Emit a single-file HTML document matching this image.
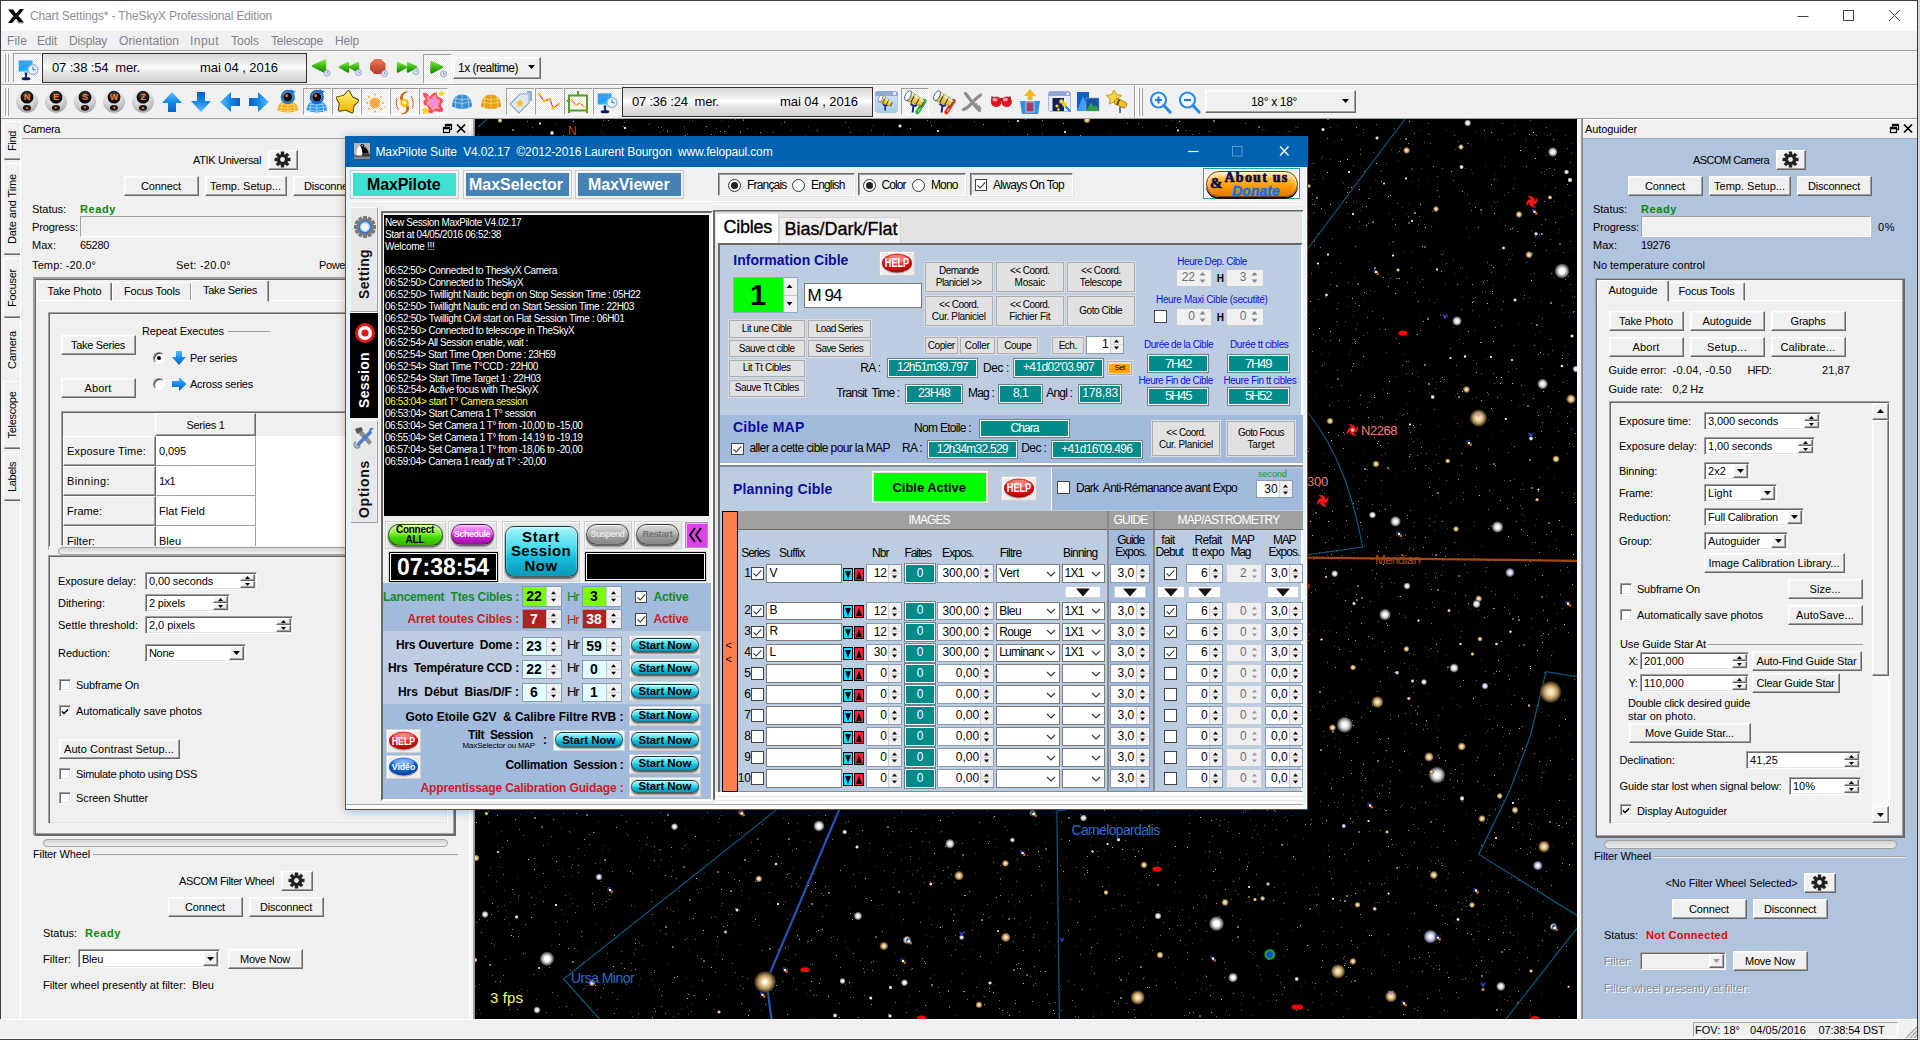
<!DOCTYPE html><html><head><meta charset="utf-8"><title>TheSkyX</title><style>
html,body{margin:0;padding:0}
body{width:1920px;height:1040px;overflow:hidden;position:relative;background:#f0f0f0;font-family:"Liberation Sans",sans-serif;font-size:11px;color:#000}
div,span.t,svg.a{position:absolute;box-sizing:border-box}
span.t{white-space:nowrap}
.btn{background:#f0f0f0;border:1px solid;border-color:#fff #696969 #696969 #fff;box-shadow:inset -1px -1px 0 #a0a0a0,inset 1px 1px 0 #f7f7f7}
.sunk{background:#fff;border:1px solid;border-color:#a0a0a0 #fff #fff #a0a0a0;box-shadow:inset 1px 1px 0 #696969,inset -1px -1px 0 #e3e3e3}
.chk{background:#fff;border:1px solid;border-color:#a0a0a0 #fff #fff #a0a0a0;box-shadow:inset 1px 1px 0 #696969,inset -1px -1px 0 #e3e3e3}
.tbchk{background-color:#f8f8f8;background-image:repeating-conic-gradient(#fff 0 25%,#e8e8e8 0 50%);background-size:2px 2px;border:1px solid;border-color:#a0a0a0 #fff #fff #a0a0a0}
.dt{border:1px solid #303030;background:linear-gradient(#dadada 0%,#e8e8e8 25%,#ffffff 47%,#f2f2f2 56%,#e2e2e2 70%,#d8d8d8 88%,#cecece 100%)}
.grp{border:1px solid;border-color:#a0a0a0 #fff #fff #a0a0a0;box-shadow:inset 1px 1px 0 #696969,inset -1px -1px 0 #e3e3e3}
.fl{background:#fff;border:1px solid #7a7a7a}
.tl{background:#008b8b;border:1px solid #fff;box-shadow:0 0 0 1px #6e7f8f;color:#fff}
.mb{background:#e1e1e1;border:1px solid #adadad;box-shadow:0 0 0 1px #d8dde6}
</style></head><body>
<div style="left:0px;top:0px;width:1920px;height:31px;background:#fff"></div>
<svg class="a" style="left:7px;top:8px" width="18" height="16" viewBox="0 0 18 16"><path d="M1 1.5 L6 1.5 L9 5.5 L13 1 L17 1 L11.5 8 L17 14.5 L12 14.5 L9 10.5 L5 15 L1 15 L6.5 8 Z" fill="#000"/><path d="M9 13 L17 15.5 L12 15.5Z" fill="#89a"/></svg>
<span class="t" style="left:30px;top:8.5px;font-size:12px;line-height:15px;color:#8e8e98;letter-spacing:-0.157px;">Chart Settings* - TheSkyX Professional Edition</span>
<svg class="a" style="left:1790px;top:4px" width="120" height="24" viewBox="0 0 120 24"><g stroke="#444" stroke-width="1" fill="none"><path d="M7.5 12.5 H18.5"/><rect x="53.5" y="6.5" width="10" height="10"/><path d="M99 6 L110 17 M110 6 L99 17"/></g></svg>
<div style="left:0px;top:31px;width:1920px;height:20px;background:#f0f0f0"></div>
<span class="t" style="left:7px;top:33.5px;font-size:12px;line-height:15px;color:#80808c;letter-spacing:0.166px;">File</span>
<span class="t" style="left:37px;top:33.5px;font-size:12px;line-height:15px;color:#80808c;letter-spacing:-0.169px;">Edit</span>
<span class="t" style="left:69px;top:33.5px;font-size:12px;line-height:15px;color:#80808c;letter-spacing:-0.192px;">Display</span>
<span class="t" style="left:119px;top:33.5px;font-size:12px;line-height:15px;color:#80808c;letter-spacing:0.118px;">Orientation</span>
<span class="t" style="left:190px;top:33.5px;font-size:12px;line-height:15px;color:#80808c;letter-spacing:0.462px;">Input</span>
<span class="t" style="left:231px;top:33.5px;font-size:12px;line-height:15px;color:#80808c;letter-spacing:-0.003px;">Tools</span>
<span class="t" style="left:271px;top:33.5px;font-size:12px;line-height:15px;color:#80808c;letter-spacing:-0.226px;">Telescope</span>
<span class="t" style="left:335px;top:33.5px;font-size:12px;line-height:15px;color:#80808c;letter-spacing:-0.170px;">Help</span>
<div style="left:0px;top:50px;width:1920px;height:1px;background:#a0a0a0"></div>
<div style="left:0px;top:51px;width:1920px;height:1px;background:#fff"></div>
<div style="left:0px;top:84px;width:1920px;height:1px;background:#a0a0a0"></div>
<div style="left:0px;top:85px;width:1920px;height:1px;background:#fff"></div>
<div style="left:0px;top:118px;width:1920px;height:1px;background:#a0a0a0"></div>
<div style="left:4px;top:54px;width:2px;height:28px;border-left:1px solid #fff;border-right:1px solid #a0a0a0"></div>
<div style="left:7px;top:54px;width:2px;height:28px;border-left:1px solid #fff;border-right:1px solid #a0a0a0"></div>
<div style="left:4px;top:88px;width:2px;height:28px;border-left:1px solid #fff;border-right:1px solid #a0a0a0"></div>
<div style="left:7px;top:88px;width:2px;height:28px;border-left:1px solid #fff;border-right:1px solid #a0a0a0"></div>
<svg width="0" height="0" style="position:absolute"><defs>
<linearGradient id="gG" x1="0" y1="0" x2="0" y2="1"><stop offset="0" stop-color="#7be03a"/><stop offset=".5" stop-color="#3cb814"/><stop offset="1" stop-color="#1f8a08"/></linearGradient>
<linearGradient id="gB" x1="0" y1="0" x2="0" y2="1"><stop offset="0" stop-color="#5cc0ff"/><stop offset=".5" stop-color="#1689e6"/><stop offset="1" stop-color="#0a5fc0"/></linearGradient>
<linearGradient id="gR" x1="0" y1="0" x2="0" y2="1"><stop offset="0" stop-color="#e8795a"/><stop offset="1" stop-color="#b83a20"/></linearGradient>
<linearGradient id="gY" x1="0" y1="0" x2="0" y2="1"><stop offset="0" stop-color="#fff06a"/><stop offset="1" stop-color="#f0b400"/></linearGradient>
<radialGradient id="gBall" cx=".5" cy=".35" r=".7"><stop offset="0" stop-color="#555"/><stop offset=".55" stop-color="#111"/><stop offset="1" stop-color="#000"/></radialGradient>
<radialGradient id="gSil" cx=".45" cy=".25" r=".8"><stop offset="0" stop-color="#fff"/><stop offset=".5" stop-color="#dadada"/><stop offset=".85" stop-color="#b4b4b4"/><stop offset="1" stop-color="#909090"/></radialGradient>
<linearGradient id="gMon" x1="0" y1="0" x2=".6" y2="1"><stop offset="0" stop-color="#2a86ea"/><stop offset=".55" stop-color="#1f9af0"/><stop offset="1" stop-color="#22d4ff"/></linearGradient>
<radialGradient id="gHelp" cx=".5" cy=".3" r=".8"><stop offset="0" stop-color="#ff6a5a"/><stop offset=".6" stop-color="#d01010"/><stop offset="1" stop-color="#8a0000"/></radialGradient>
<radialGradient id="gVid" cx=".5" cy=".3" r=".8"><stop offset="0" stop-color="#5aa8ff"/><stop offset=".6" stop-color="#1058c0"/><stop offset="1" stop-color="#002a80"/></radialGradient>
<linearGradient id="gSN" x1="0" y1="0" x2="0" y2="1"><stop offset="0" stop-color="#9af4ff"/><stop offset=".45" stop-color="#2fd2e6"/><stop offset="1" stop-color="#0aa0c0"/></linearGradient>
<linearGradient id="gGr" x1="0" y1="0" x2="0" y2="1"><stop offset="0" stop-color="#d8ff9a"/><stop offset=".5" stop-color="#6cf020"/><stop offset="1" stop-color="#2fb800"/></linearGradient>
<linearGradient id="gMg" x1="0" y1="0" x2="0" y2="1"><stop offset="0" stop-color="#ff9aff"/><stop offset=".5" stop-color="#e040e0"/><stop offset="1" stop-color="#a010a8"/></linearGradient>
<linearGradient id="gGy" x1="0" y1="0" x2="0" y2="1"><stop offset="0" stop-color="#d8d8d8"/><stop offset=".5" stop-color="#a8a8a8"/><stop offset="1" stop-color="#888"/></linearGradient>
<linearGradient id="gOr" x1="0" y1="0" x2="0" y2="1"><stop offset="0" stop-color="#ffd060"/><stop offset=".5" stop-color="#f8a010"/><stop offset="1" stop-color="#e07800"/></linearGradient>
<radialGradient id="st1"><stop offset="0" stop-color="#fff"/><stop offset=".3" stop-color="#f2f2f2"/><stop offset=".6" stop-color="#b4b4b4"/><stop offset=".85" stop-color="#5a5a5a" stop-opacity=".85"/><stop offset="1" stop-color="#202020" stop-opacity="0"/></radialGradient>
<radialGradient id="st2"><stop offset="0" stop-color="#fff2d4"/><stop offset=".3" stop-color="#ecd4a4"/><stop offset=".6" stop-color="#b4925c"/><stop offset=".85" stop-color="#5a4428" stop-opacity=".85"/><stop offset="1" stop-color="#201408" stop-opacity="0"/></radialGradient>
<radialGradient id="st3"><stop offset="0" stop-color="#fff"/><stop offset=".3" stop-color="#e4e8fc"/><stop offset=".6" stop-color="#a0a6c4"/><stop offset=".85" stop-color="#4c5068" stop-opacity=".85"/><stop offset="1" stop-color="#181c28" stop-opacity="0"/></radialGradient>
</defs></svg>
<div class="tbchk" style="left:13px;top:53px;width:29px;height:30px;"></div>
<svg class="a" style="left:15px;top:55px" width="28" height="28" viewBox="0 0 28 28"><rect x="3.2" y="5" width="14.8" height="12" rx="1" fill="url(#gMon)" stroke="#e4f0fb" stroke-width="1"/><path d="M3.8 5.6 H17.4 V9 Q10 9.5 3.8 12.5Z" fill="#fff" opacity=".12"/><path d="M9.6 17.5 L12.4 17.5 L11.9 22.5 L10.1 22.5Z" fill="#16307a"/><ellipse cx="11" cy="23.7" rx="4.4" ry="1.6" fill="#0a1860"/><circle cx="18" cy="14.6" r="4.9" fill="#eaf3fd" stroke="#9ab4d4" stroke-width="1.3"/><path d="M18 11.4 V14.8 H20.8" stroke="#4a7ac0" stroke-width="1.1" fill="none"/></svg>
<div class="dt" style="left:42px;top:53px;width:265px;height:30px;"></div>
<span class="t" style="left:52px;top:60.0px;font-size:13px;line-height:16px;letter-spacing:-0.146px;white-space:pre;">07 :38 :54  mer.</span>
<span class="t" style="left:200px;top:60.0px;font-size:13px;line-height:16px;letter-spacing:-0.060px;">mai 04 , 2016</span>
<div class="tbchk" style="left:423px;top:54px;width:29px;height:30px;"></div>
<svg class="a" style="left:308px;top:52px" width="150" height="32" viewBox="308 52 150 32"><path d="M313 66 L325 60.5 L325 72Z" fill="url(#gG)" stroke="url(#gG)" stroke-width="2.4" stroke-linejoin="round"/><circle cx="327" cy="73" r="3" fill="#dfe9f5" stroke="#8aa0c0" stroke-width=".9"/><path d="M327 71.2 V73.3 H328.6" stroke="#6080b0" stroke-width=".7" fill="none"/><path d="M340 67 L348 63 L348 71.5Z" fill="url(#gG)" stroke="url(#gG)" stroke-width="2.4" stroke-linejoin="round"/><path d="M350 67 L358 63 L358 71.5Z" fill="url(#gG)" stroke="url(#gG)" stroke-width="2.4" stroke-linejoin="round"/><circle cx="358.5" cy="72.5" r="3" fill="#dfe9f5" stroke="#8aa0c0" stroke-width=".9"/><path d="M358.5 70.7 V72.8 H360.1" stroke="#6080b0" stroke-width=".7" fill="none"/><path d="M374.5 59 H381 L385.5 63.5 V69.5 L381 74 H374.5 L370 69.5 V63.5Z" fill="url(#gR)"/><circle cx="384.5" cy="73.5" r="3" fill="#dfe9f5" stroke="#8aa0c0" stroke-width=".9"/><path d="M384.5 71.7 V73.8 H386.1" stroke="#6080b0" stroke-width=".7" fill="none"/><path d="M398 63 L398 71.5 L406 67Z" fill="url(#gG)" stroke="url(#gG)" stroke-width="2.4" stroke-linejoin="round"/><path d="M408 63 L408 71.5 L416 67Z" fill="url(#gG)" stroke="url(#gG)" stroke-width="2.4" stroke-linejoin="round"/><circle cx="416" cy="71.5" r="3" fill="#dfe9f5" stroke="#8aa0c0" stroke-width=".9"/><path d="M416 69.7 V71.8 H417.6" stroke="#6080b0" stroke-width=".7" fill="none"/><path d="M431.5 62 L431.5 72.5 L442 67Z" fill="url(#gG)" stroke="url(#gG)" stroke-width="2.4" stroke-linejoin="round"/><circle cx="443.5" cy="74" r="3" fill="#dfe9f5" stroke="#8aa0c0" stroke-width=".9"/><path d="M443.5 72.2 V74.3 H445.1" stroke="#6080b0" stroke-width=".7" fill="none"/></svg>
<div class="btn" style="left:453px;top:57px;width:88px;height:22px;"></div>
<span class="t" style="left:458px;top:60.5px;font-size:12px;line-height:15px;letter-spacing:-0.514px;">1x (realtime)</span>
<svg class="a" style="left:528px;top:65px" width="8" height="5" viewBox="0 0 8 5"><path d="M0 0 H7 L3.5 4Z" fill="#000"/></svg>
<svg class="a" style="left:14px;top:88px" width="26" height="28" viewBox="0 0 26 28"><circle cx="13" cy="13.8" r="10.9" fill="url(#gSil)"/><circle cx="13" cy="9.2" r="6.4" fill="url(#gBall)"/><ellipse cx="13" cy="19.8" rx="4.1" ry="2.9" fill="#141414"/><path d="M11.3 21 L13 18.3 L14.7 21Z" fill="#ff6a10" transform="rotate(0 13 19.8)"/><text x="13" y="12.4" font-family="Liberation Sans" font-weight="bold" font-size="9" fill="#ff7a1a" text-anchor="middle">N</text></svg>
<svg class="a" style="left:43px;top:88px" width="26" height="28" viewBox="0 0 26 28"><circle cx="13" cy="13.8" r="10.9" fill="url(#gSil)"/><circle cx="13" cy="9.2" r="6.4" fill="url(#gBall)"/><ellipse cx="13" cy="19.8" rx="4.1" ry="2.9" fill="#141414"/><path d="M11.3 21 L13 18.3 L14.7 21Z" fill="#ff6a10" transform="rotate(90 13 19.8)"/><text x="13" y="12.4" font-family="Liberation Sans" font-weight="bold" font-size="9" fill="#ff7a1a" text-anchor="middle">E</text></svg>
<svg class="a" style="left:72px;top:88px" width="26" height="28" viewBox="0 0 26 28"><circle cx="13" cy="13.8" r="10.9" fill="url(#gSil)"/><circle cx="13" cy="9.2" r="6.4" fill="url(#gBall)"/><ellipse cx="13" cy="19.8" rx="4.1" ry="2.9" fill="#141414"/><path d="M11.3 21 L13 18.3 L14.7 21Z" fill="#ff6a10" transform="rotate(180 13 19.8)"/><text x="13" y="12.4" font-family="Liberation Sans" font-weight="bold" font-size="9" fill="#ff7a1a" text-anchor="middle">S</text></svg>
<svg class="a" style="left:101px;top:88px" width="26" height="28" viewBox="0 0 26 28"><circle cx="13" cy="13.8" r="10.9" fill="url(#gSil)"/><circle cx="13" cy="9.2" r="6.4" fill="url(#gBall)"/><ellipse cx="13" cy="19.8" rx="4.1" ry="2.9" fill="#141414"/><path d="M11.3 21 L13 18.3 L14.7 21Z" fill="#ff6a10" transform="rotate(270 13 19.8)"/><text x="13" y="12.4" font-family="Liberation Sans" font-weight="bold" font-size="9" fill="#ff7a1a" text-anchor="middle">W</text></svg>
<svg class="a" style="left:130px;top:88px" width="26" height="28" viewBox="0 0 26 28"><circle cx="13" cy="13.8" r="10.9" fill="url(#gSil)"/><circle cx="13" cy="9.2" r="6.4" fill="url(#gBall)"/><ellipse cx="13" cy="19.8" rx="4.1" ry="2.9" fill="#141414"/><path d="M11.3 21 L13 18.3 L14.7 21Z" fill="#ff6a10" transform="rotate(0 13 19.8)"/><text x="13" y="12.4" font-family="Liberation Sans" font-weight="bold" font-size="9" fill="#ff7a1a" text-anchor="middle">Z</text></svg>
<svg class="a" style="left:160px;top:90px" width="24" height="24" viewBox="0 0 24 24"><g transform="rotate(0 12 12)"><path d="M12 2 L22 13 H16 V22 H8 V13 H2Z" fill="url(#gB)"/></g></svg>
<svg class="a" style="left:189px;top:90px" width="24" height="24" viewBox="0 0 24 24"><g transform="rotate(180 12 12)"><path d="M12 2 L22 13 H16 V22 H8 V13 H2Z" fill="url(#gB)"/></g></svg>
<svg class="a" style="left:218px;top:90px" width="24" height="24" viewBox="0 0 24 24"><g transform="rotate(270 12 12)"><path d="M12 2 L22 13 H16 V22 H8 V13 H2Z" fill="url(#gB)"/></g></svg>
<svg class="a" style="left:247px;top:90px" width="24" height="24" viewBox="0 0 24 24"><g transform="rotate(90 12 12)"><path d="M12 2 L22 13 H16 V22 H8 V13 H2Z" fill="url(#gB)"/></g></svg>
<svg class="a" style="left:275px;top:88px" width="26" height="28" viewBox="0 0 26 28"><path d="M2.5 22.5 C2.5 16 7 12.6 12.8 12.6 C18.6 12.6 23 16 23 22.5 Q12.8 26.5 2.5 22.5Z" fill="#f2a818"/><path d="M7.5 14.5 Q5.5 19 6 24 M12.8 13 V25 M18 14.5 Q20 19 19.5 24 M3 19 Q12.8 21.5 22.5 19 M4.5 16 Q12.8 18 21 16 M3 22 Q12.8 24.5 22.5 22" stroke="#ffe27a" stroke-width=".8" fill="none"/><circle cx="12.8" cy="9" r="6" fill="none" stroke="#1a78d0" stroke-width="2.3"/><path d="M15.5 1.2 L20.8 3.8 L15.8 6.2Z" fill="#1a78d0"/><circle cx="12.8" cy="9" r="4.6" fill="#0c0c10"/><circle cx="11.6" cy="7.6" r="1.6" fill="#ff7a1a" opacity=".85"/></svg>
<div class="tbchk" style="left:303px;top:88px;width:29px;height:27px;"></div>
<svg class="a" style="left:304px;top:88px" width="26" height="28" viewBox="0 0 26 28"><path d="M2.5 22.5 C2.5 16 7 12.6 12.8 12.6 C18.6 12.6 23 16 23 22.5 Q12.8 26.5 2.5 22.5Z" fill="#2f93f0"/><path d="M7.5 14.5 Q5.5 19 6 24 M12.8 13 V25 M18 14.5 Q20 19 19.5 24 M3 19 Q12.8 21.5 22.5 19 M4.5 16 Q12.8 18 21 16 M3 22 Q12.8 24.5 22.5 22" stroke="#a4dcff" stroke-width=".8" fill="none"/><circle cx="12.8" cy="9" r="6" fill="none" stroke="#1a6ac8" stroke-width="2.3"/><path d="M15.5 1.2 L20.8 3.8 L15.8 6.2Z" fill="#1a6ac8"/><circle cx="12.8" cy="9" r="4.6" fill="#0c0c10"/><circle cx="11.6" cy="7.6" r="1.6" fill="#ff7a1a" opacity=".85"/></svg>
<div class="tbchk" style="left:332px;top:88px;width:29px;height:27px;"></div>
<svg class="a" style="left:334px;top:89px" width="26" height="26" viewBox="0 0 26 26"><path d="M14.5 2.9 L17.6 8.7 L23.4 11.6 L18.9 16.3 L18.0 22.8 L12.1 19.9 L5.6 21.0 L6.5 14.5 L3.5 8.8 L9.9 7.6Z" fill="url(#gY)" stroke="#4a3808" stroke-width="3.4" stroke-linejoin="round"/><path d="M14.5 2.9 L17.6 8.7 L23.4 11.6 L18.9 16.3 L18.0 22.8 L12.1 19.9 L5.6 21.0 L6.5 14.5 L3.5 8.8 L9.9 7.6Z" fill="url(#gY)" stroke="url(#gY)" stroke-width="1.6" stroke-linejoin="round"/></svg>
<div class="tbchk" style="left:361px;top:88px;width:29px;height:27px;"></div>
<svg class="a" style="left:362px;top:89px" width="26" height="26" viewBox="0 0 26 26"><circle cx="13" cy="14" r="5.6" fill="#f5a030" opacity=".75"/><circle cx="13" cy="14" r="4" fill="#f09828" opacity=".5"/><g fill="#f7a848"><circle cx="5" cy="14" r="1"/><circle cx="21" cy="14" r="1"/><circle cx="13" cy="5.5" r="1"/><circle cx="13" cy="22.5" r="1"/><circle cx="7" cy="8" r="1.1"/><circle cx="19" cy="8" r="1"/><circle cx="7" cy="20" r="1"/><circle cx="19" cy="20" r="1.1"/><circle cx="3.5" cy="10" r=".7"/><circle cx="22.5" cy="18" r=".7"/></g></svg>
<div class="tbchk" style="left:390px;top:88px;width:29px;height:27px;"></div>
<svg class="a" style="left:391px;top:89px" width="26" height="26" viewBox="0 0 26 26"><path d="M13 14 C9 13 7.5 8 11 4.5 C13 2.6 16 2.2 18 3 C14 3.4 11.6 5.8 12 9 C12.3 11.5 14 12.6 15.8 12.4 Q14.8 14.2 13 14Z" fill="#d8680e"/><g transform="rotate(180 13.6 14)"><path d="M13 14 C9 13 7.5 8 11 4.5 C13 2.6 16 2.2 18 3 C14 3.4 11.6 5.8 12 9 C12.3 11.5 14 12.6 15.8 12.4 Q14.8 14.2 13 14Z" fill="#d8680e"/></g><path d="M6 9 Q4 15 7.5 21 M21.5 19 Q23.5 13 20 7" stroke="#c05a0a" stroke-width="1.1" fill="none" opacity=".8"/><circle cx="13.6" cy="14" r="4.2" fill="#ffb418"/><circle cx="13.2" cy="13.4" r="2.2" fill="#fff0a0"/></svg>
<div class="tbchk" style="left:419px;top:88px;width:29px;height:27px;"></div>
<svg class="a" style="left:420px;top:89px" width="26" height="26" viewBox="0 0 26 26"><path d="M3 4 Q7 3 10 8 Q12 3 17 3.5 Q16 7.5 19.5 8.5 Q25 10 22 14 Q19.5 16 23 19.5 Q24 23.5 19 23 Q14 20.5 12.5 24 Q7 25.5 8.5 19.5 Q8 16.5 4.5 16 Q1.5 12 6 10 Q3 8 3 4Z" fill="#ff4a5e"/><path d="M6 6 Q9 7 10.5 10.5 Q13 6 16 5.5 Q15.5 9.5 19 10.5 Q21.5 12 19 14.5 Q17 17 20 20 Q15 19 12.5 21.5 Q10.5 17.5 7 15.5 Q5 12.5 8.5 11 Q6.5 9 6 6Z" fill="#ff9aa8"/><circle cx="13.6" cy="13.4" r="3.6" fill="#f88af0"/><path d="M21.5 1 l1.1 2.2 2.4.3 -1.8 1.7 .4 2.4 -2.1-1.1 -2.1 1.1 .4-2.4 -1.8-1.7 2.4-.3Z M5.5 17.5 l1.3 2.6 2.8.4 -2 2 .5 2.8 -2.6-1.3 -2.6 1.3 .5-2.8 -2-2 2.8-.4Z" fill="#ffd21e"/></svg>
<svg class="a" style="left:450px;top:91px" width="24" height="22" viewBox="0 0 24 22"><path d="M2 15.5 C2 8 6 3.5 12 3.5 C18 3.5 22 8 22 15.5 Q12 20.5 2 15.5Z" fill="#3f8ed0"/><path d="M12 3 V19 M6.5 5 Q4.5 11 5.5 17.5 M17.5 5 Q19.5 11 18.5 17.5 M2.5 11 Q12 14 21.5 11 M3.5 7.5 Q12 10 20.5 7.5" stroke="#a8d8ff" stroke-width=".7" fill="none"/></svg>
<svg class="a" style="left:479px;top:91px" width="24" height="22" viewBox="0 0 24 22"><path d="M2 15.5 C2 8 6 3.5 12 3.5 C18 3.5 22 8 22 15.5 Q12 20.5 2 15.5Z" fill="#e8a018"/><path d="M12 3 V19 M6.5 5 Q4.5 11 5.5 17.5 M17.5 5 Q19.5 11 18.5 17.5 M2.5 11 Q12 14 21.5 11 M3.5 7.5 Q12 10 20.5 7.5" stroke="#ffe080" stroke-width=".7" fill="none"/></svg>
<div class="tbchk" style="left:506px;top:88px;width:29px;height:27px;"></div>
<svg class="a" style="left:507px;top:89px" width="26" height="26" viewBox="0 0 26 26"><path d="M3 15 L13 5 H22 V14 L12 24Z" fill="#dfe8f0" stroke="#8ea8c0" stroke-width="1.2"/><path d="M20 3 H24 V12" stroke="#5a90d0" stroke-width="1.4" fill="none"/><path d="M13 10 l1.3 2.6 2.9.4 -2.1 2 .5 2.9 -2.6-1.4 -2.6 1.4 .5-2.9 -2.1-2 2.9-.4Z" fill="#f8c020"/></svg>
<div class="tbchk" style="left:535px;top:88px;width:29px;height:27px;"></div>
<svg class="a" style="left:536px;top:89px" width="26" height="26" viewBox="0 0 26 26"><path d="M3 5 L8 12 L14 10 L17 19 L23 15" stroke="#e83030" stroke-width="1.1" fill="none"/><g fill="#f8c820"><circle cx="3" cy="5" r="1.6"/><circle cx="8" cy="12" r="1.8"/><circle cx="14" cy="10" r="1.6"/><circle cx="17" cy="19" r="1.8"/><circle cx="23" cy="15" r="1.6"/></g></svg>
<div class="tbchk" style="left:564px;top:88px;width:29px;height:27px;"></div>
<svg class="a" style="left:565px;top:89px" width="26" height="26" viewBox="0 0 26 26"><path d="M4 6.5 H22 V21.5 H4Z M13 2 V6.5 M2 12 H4 M4 24 V21.5 M22 24 V21.5" stroke="#5a9a28" stroke-width="2" fill="none"/><path d="M7 11 L11 16 L15 14 L19 18" stroke="#e84040" stroke-width="1" fill="none"/><g fill="#f8c820"><circle cx="7" cy="11" r="1.3"/><circle cx="11" cy="16" r="1.3"/><circle cx="15" cy="14" r="1.3"/><circle cx="19" cy="18" r="1.3"/></g></svg>
<div class="tbchk" style="left:593px;top:88px;width:29px;height:27px;"></div>
<svg class="a" style="left:594px;top:88px" width="28" height="28" viewBox="0 0 28 28"><rect x="3.2" y="5" width="14.8" height="12" rx="1" fill="url(#gMon)" stroke="#e4f0fb" stroke-width="1"/><path d="M3.8 5.6 H17.4 V9 Q10 9.5 3.8 12.5Z" fill="#fff" opacity=".12"/><path d="M9.6 17.5 L12.4 17.5 L11.9 22.5 L10.1 22.5Z" fill="#16307a"/><ellipse cx="11" cy="23.7" rx="4.4" ry="1.6" fill="#0a1860"/><circle cx="18" cy="14.6" r="4.9" fill="#eaf3fd" stroke="#9ab4d4" stroke-width="1.3"/><path d="M18 11.4 V14.8 H20.8" stroke="#4a7ac0" stroke-width="1.1" fill="none"/></svg>
<div class="dt" style="left:622px;top:87px;width:251px;height:30px;"></div>
<span class="t" style="left:632px;top:94.0px;font-size:13px;line-height:16px;letter-spacing:-0.208px;white-space:pre;">07 :36 :24  mer.</span>
<span class="t" style="left:780px;top:94.0px;font-size:13px;line-height:16px;letter-spacing:-0.060px;">mai 04 , 2016</span>
<div style="left:875px;top:91px;width:23px;height:22px;background:linear-gradient(#d4e6f4,#a8cfe8);border:1px solid #b4c4e0;border-radius:3px"></div>
<div style="left:875px;top:91px;width:23px;height:5px;background:#94a8d4;border-radius:3px 3px 0 0"></div>
<div style="left:893px;top:92px;width:3px;height:3px;background:#e4ecf8"></div>
<svg class="a" style="left:872px;top:88px" width="26" height="28" viewBox="0 0 26 28"><path d="M11 16 Q13 18.5 15.5 17 M13.2 18 V22.5" stroke="#1a2a7a" stroke-width="1.6" fill="none"/><g transform="translate(8.5 10.5) rotate(27) scale(0.72)"><path d="M0 -5.2 L17.5 -3 L17.5 3 L0 5.2Z" fill="url(#gY)" stroke="#8a6a08" stroke-width=".5"/><path d="M5 -4.7 h1.2 v9.4 h-1.2Z M10.5 -4 h1.2 v8 h-1.2Z M16.3 -3.2 h1.2 v6.4 h-1.2Z" fill="#1e3a8a"/><path d="M0 -5.2 L17.5 -3 V-1.4 L0 -2.4Z" fill="#fff" opacity=".5"/><ellipse cx="0" cy="0" rx="2.7" ry="5.3" fill="#f6f6f6" stroke="#1e4a9a" stroke-width=".8"/><ellipse cx="-.4" cy="-.6" rx="1.6" ry="3.6" fill="#fff"/></g></svg>
<div class="tbchk" style="left:901px;top:88px;width:28px;height:27px;"></div>
<svg class="a" style="left:901px;top:88px" width="26" height="28" viewBox="0 0 26 28"><path d="M9.5 15.5 Q12 19 16 17 M12.4 18 L11.6 24.5" stroke="#1a2a7a" stroke-width="2" fill="none"/><path d="M23.6 13 L16.4 24.2" stroke="#1fae2a" stroke-width="4.2" stroke-linecap="round"/><path d="M23 14.6 L21 17.8 M19 20.6 L17.2 23.4" stroke="#fff" stroke-opacity=".5" stroke-width="1.3" stroke-linecap="round"/><g transform="translate(7 7.7) rotate(27) scale(1)"><path d="M0 -5.2 L17.5 -3 L17.5 3 L0 5.2Z" fill="url(#gY)" stroke="#8a6a08" stroke-width=".5"/><path d="M5 -4.7 h1.2 v9.4 h-1.2Z M10.5 -4 h1.2 v8 h-1.2Z M16.3 -3.2 h1.2 v6.4 h-1.2Z" fill="#1e3a8a"/><path d="M0 -5.2 L17.5 -3 V-1.4 L0 -2.4Z" fill="#fff" opacity=".5"/><ellipse cx="0" cy="0" rx="2.7" ry="5.3" fill="#f6f6f6" stroke="#1e4a9a" stroke-width=".8"/><ellipse cx="-.4" cy="-.6" rx="1.6" ry="3.6" fill="#fff"/></g></svg>
<svg class="a" style="left:930px;top:88px" width="26" height="28" viewBox="0 0 26 28"><path d="M9.5 15.5 Q12 19 16 17 M12.4 18 L11.6 24.5" stroke="#1a2a7a" stroke-width="2" fill="none"/><path d="M23.6 13 L16.4 24.2" stroke="#e42a1a" stroke-width="4.2" stroke-linecap="round"/><path d="M23 14.6 L21 17.8 M19 20.6 L17.2 23.4" stroke="#fff" stroke-opacity=".5" stroke-width="1.3" stroke-linecap="round"/><g transform="translate(7 7.7) rotate(27) scale(1)"><path d="M0 -5.2 L17.5 -3 L17.5 3 L0 5.2Z" fill="url(#gY)" stroke="#8a6a08" stroke-width=".5"/><path d="M5 -4.7 h1.2 v9.4 h-1.2Z M10.5 -4 h1.2 v8 h-1.2Z M16.3 -3.2 h1.2 v6.4 h-1.2Z" fill="#1e3a8a"/><path d="M0 -5.2 L17.5 -3 V-1.4 L0 -2.4Z" fill="#fff" opacity=".5"/><ellipse cx="0" cy="0" rx="2.7" ry="5.3" fill="#f6f6f6" stroke="#1e4a9a" stroke-width=".8"/><ellipse cx="-.4" cy="-.6" rx="1.6" ry="3.6" fill="#fff"/></g></svg>
<svg class="a" style="left:960px;top:90px" width="26" height="24" viewBox="0 0 26 24"><path d="M5.5 3.5 Q9 8 12 12 Q16 17.5 19.5 20.5 M20.5 5 Q15 9 11.5 13.5 Q8 18 3.5 19.5" stroke="#8c8c8c" stroke-width="3.2" fill="none" stroke-linecap="round"/><path d="M14.5 14.5 l2.2 -.6 .5 2.2 2 -.4 .6 2.4 1.8 0" stroke="#8c8c8c" stroke-width="1.4" fill="none"/></svg>
<svg class="a" style="left:988px;top:90px" width="26" height="24" viewBox="0 0 26 24"><path d="M3.5 6 L8 8 H18 L22.5 6 L23 11 H3Z" fill="#3c4450"/><circle cx="8.2" cy="11.8" r="5.3" fill="#d81820"/><circle cx="18.6" cy="11.8" r="5.3" fill="#d81820"/><ellipse cx="7" cy="9.6" rx="2.6" ry="1.8" fill="#ff9a98"/><ellipse cx="17.4" cy="9.6" rx="2.6" ry="1.8" fill="#ff9a98"/></svg>
<svg class="a" style="left:1017px;top:88px" width="26" height="28" viewBox="0 0 26 28"><path d="M3 13 H23 L21 26 H5Z" fill="#2a90e8"/><path d="M13 1 L19 8 H15.5 V12 H10.5 V8 H7Z" fill="#f8b818"/><rect x="9" y="14" width="8" height="10" fill="#a04060" stroke="#e8d8e0" stroke-width=".8"/></svg>
<svg class="a" style="left:1047px;top:89px" width="26" height="26" viewBox="0 0 26 26"><rect x="1.5" y="2.5" width="22" height="20" rx="2" fill="#e4ecf6" stroke="#a8b8d8" stroke-width="1"/><path d="M1.5 4.5 Q1.5 2.5 3.5 2.5 H21.5 Q23.5 2.5 23.5 4.5 V7 H1.5Z" fill="#8ea6d6"/><rect x="19.5" y="3.8" width="2.4" height="2.2" fill="#e8eefa"/><rect x="5.5" y="9" width="11.5" height="13" fill="#0e2458"/><path d="M17 16 L23.5 22.5" stroke="#2a7ae0" stroke-width="2"/><g fill="#f8d030"><circle cx="10" cy="17" r="1.6"/><circle cx="14.5" cy="12.5" r="2.2"/><circle cx="17.5" cy="15.5" r="2.4"/><circle cx="11.5" cy="20.5" r="1.3"/></g></svg>
<svg class="a" style="left:1075px;top:90px" width="26" height="24" viewBox="0 0 26 24"><path d="M2 2 H14 V21 H2Z" fill="#1060c0"/><path d="M2 21 L8 6 L14 21Z" fill="#40a0f0"/><path d="M11 8 H24 V21 H11Z" fill="#1a50a0" stroke="#80b0e8" stroke-width=".6"/><path d="M11 21 L16 13 L19 17 L21 15 L24 21Z" fill="#30a040"/></svg>
<svg class="a" style="left:1104px;top:88px" width="26" height="28" viewBox="0 0 26 28"><path d="M10 2 l2.4 4.6 5.2.8 -3.8 3.6 .9 5.2 -4.7-2.5 -4.7 2.5 .9-5.2 -3.8-3.6 5.2-.8Z" fill="#f8d840" stroke="#c09010" stroke-width=".8"/><g transform="rotate(25 16 15)"><rect x="10" y="12" width="13" height="6" rx="2.5" fill="#f0c020" stroke="#7a5a08" stroke-width=".6"/><rect x="13" y="12" width="2" height="6" fill="#6a4a08"/></g><path d="M16 19 V25" stroke="#2a4a90" stroke-width="1.5"/></svg>
<div style="left:1134px;top:86px;width:1px;height:32px;background:#a0a0a0"></div>
<div style="left:1135px;top:86px;width:1px;height:32px;background:#fff"></div>
<div style="left:1138px;top:88px;width:2px;height:28px;border-left:1px solid #fff;border-right:1px solid #a0a0a0"></div>
<div style="left:1141px;top:88px;width:2px;height:28px;border-left:1px solid #fff;border-right:1px solid #a0a0a0"></div>
<svg class="a" style="left:1148px;top:90px" width="24" height="24" viewBox="0 0 24 24"><circle cx="10.5" cy="10" r="7.5" fill="#f4faff" stroke="#2a8ae8" stroke-width="2.2"/><path d="M16 15.5 L22 22" stroke="#2a8ae8" stroke-width="3.2" stroke-linecap="round"/><path d="M7 10 H14 M10.5 6.5 V13.5" stroke="#1a7ae0" stroke-width="2.2"/></svg>
<svg class="a" style="left:1177px;top:90px" width="24" height="24" viewBox="0 0 24 24"><circle cx="10.5" cy="10" r="7.5" fill="#f4faff" stroke="#2a8ae8" stroke-width="2.2"/><path d="M16 15.5 L22 22" stroke="#2a8ae8" stroke-width="3.2" stroke-linecap="round"/><path d="M7 10 H14" stroke="#1a7ae0" stroke-width="2.2"/></svg>
<div class="btn" style="left:1205px;top:90px;width:151px;height:23px;"></div>
<span class="t" style="left:1251px;top:94.5px;font-size:12px;line-height:15px;letter-spacing:-0.329px;">18° x 18°</span>
<svg class="a" style="left:1342px;top:99px" width="8" height="5" viewBox="0 0 8 5"><path d="M0 0 H7 L3.5 4Z" fill="#000"/></svg>
<div style="left:0px;top:0px;width:1920px;height:1px;background:#3c3c3c"></div>
<div style="left:0px;top:0px;width:1px;height:1040px;background:#3c3c3c"></div>
<div style="left:0px;top:1039px;width:1920px;height:1px;background:#3c3c3c"></div>
<div style="left:3px;top:121px;width:18px;height:39px;border:1px solid;border-color:#fff #fff #696969 #fff;border-right:none;box-shadow:inset 0 -1px 0 #a0a0a0;border-radius:3px 0 0 3px"></div>
<span class="t" style="left:12px;top:140.5px;font-size:11px;line-height:14px;transform:translate(-50%,-50%) rotate(-90deg);letter-spacing:-0.349px">Find</span>
<div style="left:3px;top:163px;width:18px;height:92px;border:1px solid;border-color:#fff #fff #696969 #fff;border-right:none;box-shadow:inset 0 -1px 0 #a0a0a0;border-radius:3px 0 0 3px"></div>
<span class="t" style="left:12px;top:209.0px;font-size:11px;line-height:14px;transform:translate(-50%,-50%) rotate(-90deg);letter-spacing:-0.118px">Date and Time</span>
<div style="left:3px;top:258px;width:18px;height:60px;border:1px solid;border-color:#fff #fff #696969 #fff;border-right:none;box-shadow:inset 0 -1px 0 #a0a0a0;border-radius:3px 0 0 3px"></div>
<span class="t" style="left:12px;top:288.0px;font-size:11px;line-height:14px;transform:translate(-50%,-50%) rotate(-90deg);letter-spacing:-0.248px">Focuser</span>
<span class="t" style="left:12px;top:349.5px;font-size:11px;line-height:14px;transform:translate(-50%,-50%) rotate(-90deg);letter-spacing:-0.187px">Camera</span>
<div style="left:3px;top:381px;width:18px;height:68px;border:1px solid;border-color:#fff #fff #696969 #fff;border-right:none;box-shadow:inset 0 -1px 0 #a0a0a0;border-radius:3px 0 0 3px"></div>
<span class="t" style="left:12px;top:415.0px;font-size:11px;line-height:14px;transform:translate(-50%,-50%) rotate(-90deg);letter-spacing:-0.281px">Telescope</span>
<div style="left:3px;top:452px;width:18px;height:49px;border:1px solid;border-color:#fff #fff #696969 #fff;border-right:none;box-shadow:inset 0 -1px 0 #a0a0a0;border-radius:3px 0 0 3px"></div>
<span class="t" style="left:12px;top:476.5px;font-size:11px;line-height:14px;transform:translate(-50%,-50%) rotate(-90deg);letter-spacing:-0.402px">Labels</span>
<div style="left:20px;top:119px;width:1px;height:901px;background:#fff"></div>
<span class="t" style="left:23px;top:122.0px;font-size:11px;line-height:14px;letter-spacing:-0.354px;">Camera</span>
<svg class="a" style="left:442px;top:123px" width="26" height="12" viewBox="0 0 26 12"><g fill="none" stroke="#000" stroke-width="1.2"><rect x="3.5" y="1.5" width="6" height="5"/><rect x="1.5" y="4.5" width="6" height="5" fill="#f0f0f0"/><path d="M3.5 2.3 H9.5 M1.5 5.3 H7.5" stroke-width="1.8"/></g><path d="M15 1.5 L23 9.5 M23 1.5 L15 9.5" stroke="#000" stroke-width="1.7"/></svg>
<div style="left:22px;top:138px;width:448px;height:1px;background:#a0a0a0"></div>
<span class="t" style="left:193px;top:153.0px;font-size:11px;line-height:14px;letter-spacing:-0.324px;">ATIK Universal</span>
<div class="btn" style="left:268px;top:150px;width:30px;height:20px;"></div>
<svg class="a" style="left:268px;top:150px" width="30" height="20" viewBox="0 0 30 20"><g transform="translate(14.5 9.5)" fill="#222"><rect x="-1.7" y="-8" width="3.4" height="4" transform="rotate(0)"/><rect x="-1.7" y="-8" width="3.4" height="4" transform="rotate(45)"/><rect x="-1.7" y="-8" width="3.4" height="4" transform="rotate(90)"/><rect x="-1.7" y="-8" width="3.4" height="4" transform="rotate(135)"/><rect x="-1.7" y="-8" width="3.4" height="4" transform="rotate(180)"/><rect x="-1.7" y="-8" width="3.4" height="4" transform="rotate(225)"/><rect x="-1.7" y="-8" width="3.4" height="4" transform="rotate(270)"/><rect x="-1.7" y="-8" width="3.4" height="4" transform="rotate(315)"/><circle r="5.6"/><circle r="2.4" fill="#f0f0f0"/></g></svg>
<div class="btn" style="left:124px;top:176px;width:75px;height:20px;"></div>
<span class="t" style="left:141.0px;top:178.5px;font-size:11px;line-height:14px;letter-spacing:-0.138px;">Connect</span>
<div class="btn" style="left:205px;top:176px;width:82px;height:20px;"></div>
<span class="t" style="left:210.0px;top:178.5px;font-size:11px;line-height:14px;letter-spacing:0.005px;">Temp. Setup...</span>
<div class="btn" style="left:293px;top:176px;width:75px;height:20px;"></div>
<span class="t" style="left:304.0px;top:178.5px;font-size:11px;line-height:14px;letter-spacing:-0.241px;">Disconnect</span>
<span class="t" style="left:32px;top:202.0px;font-size:11px;line-height:14px;letter-spacing:-0.035px;">Status:</span>
<span class="t" style="left:80px;top:202.0px;font-size:11px;line-height:14px;color:#0a8a0a;font-weight:bold;letter-spacing:0.597px;">Ready</span>
<span class="t" style="left:32px;top:220.0px;font-size:11px;line-height:14px;letter-spacing:-0.119px;">Progress:</span>
<div style="left:80px;top:216px;width:360px;height:21px;border:1px solid;border-color:#a0a0a0 #fff #fff #a0a0a0"></div>
<span class="t" style="left:32px;top:238.0px;font-size:11px;line-height:14px;letter-spacing:0.041px;">Max:</span>
<span class="t" style="left:80px;top:238.0px;font-size:11px;line-height:14px;letter-spacing:-0.317px;">65280</span>
<span class="t" style="left:32px;top:258.0px;font-size:11px;line-height:14px;letter-spacing:0.126px;">Temp: -20.0°</span>
<span class="t" style="left:176px;top:258.0px;font-size:11px;line-height:14px;letter-spacing:0.264px;">Set: -20.0°</span>
<span class="t" style="left:319px;top:258.0px;font-size:11px;line-height:14px;letter-spacing:-0.373px;">Power:</span>
<div style="left:34px;top:278px;width:422px;height:558px;border:2px solid;border-color:#fff #696969 #696969 #fff;box-shadow:inset -1px -1px 0 #a0a0a0, -1px -1px 0 #a0a0a0"></div>
<div style="left:34px;top:278px;width:422px;height:2px;background:#f0f0f0"></div>
<div style="left:34px;top:278px;width:422px;height:1px;background:#a0a0a0"></div>
<div style="left:34px;top:279px;width:422px;height:1px;background:#696969"></div>
<div style="left:34px;top:278px;width:1px;height:558px;background:#a0a0a0"></div>
<div style="left:35px;top:279px;width:1px;height:556px;background:#696969"></div>
<div style="left:37px;top:300px;width:417px;height:1px;background:#fff"></div>
<div style="left:37px;top:282px;width:75px;height:19px;background:#f0f0f0;border:1px solid;border-color:#fff #696969 #fff #fff;box-shadow:inset -1px 0 0 #a0a0a0;border-radius:2px 2px 0 0"></div>
<span class="t" style="left:47.5px;top:283.5px;font-size:11px;line-height:14px;letter-spacing:-0.104px;">Take Photo</span>
<div style="left:112px;top:282px;width:80px;height:19px;background:#f0f0f0;border:1px solid;border-color:#fff #696969 #fff #fff;box-shadow:inset -1px 0 0 #a0a0a0;border-radius:2px 2px 0 0"></div>
<span class="t" style="left:124.0px;top:283.5px;font-size:11px;line-height:14px;letter-spacing:-0.226px;">Focus Tools</span>
<div style="left:191px;top:280px;width:78px;height:22px;background:#f0f0f0;border:1px solid;border-color:#fff #696969 #f0f0f0 #fff;box-shadow:inset -1px 0 0 #a0a0a0;border-radius:2px 2px 0 0"></div>
<span class="t" style="left:203.0px;top:283.0px;font-size:11px;line-height:14px;letter-spacing:-0.316px;">Take Series</span>
<div class="grp" style="left:48px;top:312px;width:400px;height:238px;"></div>
<div class="btn" style="left:61px;top:335px;width:75px;height:20px;"></div>
<span class="t" style="left:71.0px;top:337.5px;font-size:11px;line-height:14px;letter-spacing:-0.316px;">Take Series</span>
<div class="btn" style="left:61px;top:378px;width:75px;height:20px;"></div>
<span class="t" style="left:84.5px;top:380.5px;font-size:11px;line-height:14px;letter-spacing:0.141px;">Abort</span>
<span class="t" style="left:142px;top:324.0px;font-size:11px;line-height:14px;letter-spacing:-0.118px;">Repeat Executes</span>
<div style="left:228px;top:331px;width:42px;height:1px;background:#a0a0a0"></div>
<div style="left:152.5px;top:352px;width:12px;height:12px;border-radius:50%;background:#fff;border:1px solid;border-color:#808080 #fff #fff #808080;box-shadow:inset 1px 1px 0 #404040"></div>
<div style="left:156.5px;top:356px;width:4px;height:4px;border-radius:50%;background:#000"></div>
<div style="left:152.5px;top:378px;width:12px;height:12px;border-radius:50%;background:#fff;border:1px solid;border-color:#808080 #fff #fff #808080;box-shadow:inset 1px 1px 0 #404040"></div>
<svg class="a" style="left:171px;top:350px" width="16" height="16" viewBox="0 0 16 16"><path d="M5 1 H11 V7 H15 L8 15 L1 7 H5Z" fill="url(#gB)"/></svg>
<svg class="a" style="left:171px;top:376px" width="16" height="16" viewBox="0 0 16 16"><path d="M1 5 H8 V1 L15.5 8 L8 15 V11 H1Z" fill="url(#gB)"/></svg>
<span class="t" style="left:190px;top:351.0px;font-size:11px;line-height:14px;letter-spacing:-0.252px;">Per series</span>
<span class="t" style="left:190px;top:377.0px;font-size:11px;line-height:14px;letter-spacing:-0.232px;">Across series</span>
<div style="left:62px;top:412px;width:386px;height:134px;background:#fff;border:1px solid;border-color:#696969 #fff #fff #696969;box-shadow:-1px -1px 0 #a0a0a0"></div>
<div style="left:63px;top:413px;width:385px;height:23px;background:#f0f0f0"></div>
<div style="left:155px;top:413px;width:101px;height:23px;background:#f0f0f0;border:1px solid;border-color:#fff #696969 #696969 #fff;box-shadow:inset -1px -1px 0 #a0a0a0"></div>
<span class="t" style="left:186.5px;top:418.0px;font-size:11px;line-height:14px;letter-spacing:-0.294px;">Series 1</span>
<div style="left:63px;top:436px;width:93px;height:30px;background:#f0f0f0;border:1px solid;border-color:#fff #696969 #696969 #fff;box-shadow:inset -1px -1px 0 #a0a0a0;"></div>
<div style="left:156px;top:436px;width:100px;height:30px;border:1px solid;border-color:transparent #a0a0a0 #a0a0a0 transparent;"></div>
<span class="t" style="left:67px;top:444.0px;font-size:11px;line-height:14px;letter-spacing:0.184px;">Exposure Time:</span>
<span class="t" style="left:159px;top:444.0px;font-size:11px;line-height:14px;letter-spacing:-0.105px;">0,095</span>
<div style="left:63px;top:466px;width:93px;height:30px;background:#f0f0f0;border:1px solid;border-color:#fff #696969 #696969 #fff;box-shadow:inset -1px -1px 0 #a0a0a0;"></div>
<div style="left:156px;top:466px;width:100px;height:30px;border:1px solid;border-color:transparent #a0a0a0 #a0a0a0 transparent;"></div>
<span class="t" style="left:67px;top:474.0px;font-size:11px;line-height:14px;letter-spacing:0.406px;">Binning:</span>
<span class="t" style="left:159px;top:474.0px;font-size:11px;line-height:14px;letter-spacing:-0.578px;">1x1</span>
<div style="left:63px;top:496px;width:93px;height:30px;background:#f0f0f0;border:1px solid;border-color:#fff #696969 #696969 #fff;box-shadow:inset -1px -1px 0 #a0a0a0;"></div>
<div style="left:156px;top:496px;width:100px;height:30px;border:1px solid;border-color:transparent #a0a0a0 #a0a0a0 transparent;"></div>
<span class="t" style="left:67px;top:504.0px;font-size:11px;line-height:14px;letter-spacing:0.027px;">Frame:</span>
<span class="t" style="left:159px;top:504.0px;font-size:11px;line-height:14px;letter-spacing:0.077px;">Flat Field</span>
<div style="left:63px;top:526px;width:93px;height:20px;background:#f0f0f0;border:1px solid;border-color:#fff #696969 #696969 #fff;box-shadow:inset -1px 0 0 #a0a0a0;border-bottom:none;"></div>
<div style="left:156px;top:526px;width:100px;height:20px;border:1px solid;border-color:transparent #a0a0a0 #a0a0a0 transparent;border-bottom:none;"></div>
<span class="t" style="left:67px;top:534.0px;font-size:11px;line-height:14px;letter-spacing:0.071px;">Filter:</span>
<span class="t" style="left:159px;top:534.0px;font-size:11px;line-height:14px;letter-spacing:-0.004px;">Bleu</span>
<div style="left:49px;top:546px;width:400px;height:9px;background:#f0f0f0"></div>
<div style="left:58px;top:547px;width:400px;height:8px;border:1px solid #a4a4a4;border-radius:4px;background:linear-gradient(#d4d4d4,#f0f0f0)"></div>
<div class="grp" style="left:48px;top:555px;width:400px;height:268px;border-bottom:none;background:#f0f0f0"></div>
<span class="t" style="left:58px;top:574.0px;font-size:11px;line-height:14px;letter-spacing:-0.059px;">Exposure delay:</span>
<div class="sunk" style="left:145px;top:572px;width:112px;height:18px;"></div>
<span class="t" style="left:149px;top:574.0px;font-size:11px;line-height:14px;letter-spacing:-0.119px;">0,00 seconds</span>
<div class="btn" style="left:240px;top:574px;width:15px;height:7px;"></div>
<div class="btn" style="left:240px;top:581px;width:15px;height:7px;"></div>
<svg class="a" style="left:245px;top:575.5px" width="5" height="3" viewBox="0 0 5 3"><path d="M0 3 L2.5 0 L5 3Z" fill="#000"/></svg>
<svg class="a" style="left:245px;top:583.0px" width="5" height="3" viewBox="0 0 5 3"><path d="M0 0 L2.5 3 L5 0Z" fill="#000"/></svg>
<span class="t" style="left:58px;top:596.0px;font-size:11px;line-height:14px;letter-spacing:-0.008px;">Dithering:</span>
<div class="sunk" style="left:145px;top:594px;width:85px;height:18px;"></div>
<span class="t" style="left:149px;top:596.0px;font-size:11px;line-height:14px;letter-spacing:-0.162px;">2 pixels</span>
<div class="btn" style="left:213px;top:596px;width:15px;height:7px;"></div>
<div class="btn" style="left:213px;top:603px;width:15px;height:7px;"></div>
<svg class="a" style="left:218px;top:597.5px" width="5" height="3" viewBox="0 0 5 3"><path d="M0 3 L2.5 0 L5 3Z" fill="#000"/></svg>
<svg class="a" style="left:218px;top:605.0px" width="5" height="3" viewBox="0 0 5 3"><path d="M0 0 L2.5 3 L5 0Z" fill="#000"/></svg>
<span class="t" style="left:58px;top:618.0px;font-size:11px;line-height:14px;letter-spacing:0.030px;">Settle threshold:</span>
<div class="sunk" style="left:145px;top:616px;width:148px;height:18px;"></div>
<span class="t" style="left:149px;top:618.0px;font-size:11px;line-height:14px;letter-spacing:-0.047px;">2,0 pixels</span>
<div class="btn" style="left:276px;top:618px;width:15px;height:7px;"></div>
<div class="btn" style="left:276px;top:625px;width:15px;height:7px;"></div>
<svg class="a" style="left:281px;top:619.5px" width="5" height="3" viewBox="0 0 5 3"><path d="M0 3 L2.5 0 L5 3Z" fill="#000"/></svg>
<svg class="a" style="left:281px;top:627.0px" width="5" height="3" viewBox="0 0 5 3"><path d="M0 0 L2.5 3 L5 0Z" fill="#000"/></svg>
<span class="t" style="left:58px;top:646.0px;font-size:11px;line-height:14px;letter-spacing:-0.059px;">Reduction:</span>
<div class="sunk" style="left:145px;top:644px;width:101px;height:18px;"></div>
<span class="t" style="left:149px;top:646.0px;font-size:11px;line-height:14px;letter-spacing:-0.324px;">None</span>
<div class="btn" style="left:229px;top:646px;width:15px;height:14px;"></div>
<svg class="a" style="left:233px;top:651.0px" width="7" height="4" viewBox="0 0 7 4"><path d="M0 0 L3.5 4 L7 0Z" fill="#000"/></svg>
<div class="chk" style="left:59px;top:679px;width:12px;height:12px;"></div>
<span class="t" style="left:76px;top:678.0px;font-size:11px;line-height:14px;letter-spacing:-0.220px;">Subframe On</span>
<div class="chk" style="left:59px;top:705px;width:12px;height:12px;"></div>
<svg class="a" style="left:59px;top:705px" width="12" height="12" viewBox="0 0 12 12"><path d="M2.8 5.2 L5 7.4 L9.2 3.2 V5.4 L5 9.6 L2.8 7.4Z" fill="#000"/></svg>
<span class="t" style="left:76px;top:704.0px;font-size:11px;line-height:14px;letter-spacing:-0.071px;">Automatically save photos</span>
<div class="btn" style="left:59px;top:739px;width:121px;height:20px;"></div>
<span class="t" style="left:64.0px;top:741.5px;font-size:11px;line-height:14px;letter-spacing:0.080px;">Auto Contrast Setup...</span>
<div class="chk" style="left:59px;top:768px;width:12px;height:12px;"></div>
<span class="t" style="left:76px;top:767.0px;font-size:11px;line-height:14px;letter-spacing:-0.309px;">Simulate photo using DSS</span>
<div class="chk" style="left:59px;top:792px;width:12px;height:12px;"></div>
<span class="t" style="left:76px;top:791.0px;font-size:11px;line-height:14px;letter-spacing:-0.098px;">Screen Shutter</span>
<div style="left:43px;top:839px;width:405px;height:8px;border:1px solid #a4a4a4;border-radius:4px;background:linear-gradient(#d4d4d4,#f0f0f0)"></div>
<span class="t" style="left:33px;top:847.0px;font-size:11px;line-height:14px;letter-spacing:-0.140px;">Filter Wheel</span>
<div style="left:93px;top:854px;width:365px;height:1px;background:#a0a0a0"></div>
<span class="t" style="left:179px;top:874.0px;font-size:11px;line-height:14px;letter-spacing:-0.393px;">ASCOM Filter Wheel</span>
<div class="btn" style="left:281px;top:871px;width:32px;height:20px;"></div>
<svg class="a" style="left:281px;top:871px" width="32" height="20" viewBox="0 0 32 20"><g transform="translate(15.5 9.5)" fill="#222"><rect x="-1.7" y="-8" width="3.4" height="4" transform="rotate(0)"/><rect x="-1.7" y="-8" width="3.4" height="4" transform="rotate(45)"/><rect x="-1.7" y="-8" width="3.4" height="4" transform="rotate(90)"/><rect x="-1.7" y="-8" width="3.4" height="4" transform="rotate(135)"/><rect x="-1.7" y="-8" width="3.4" height="4" transform="rotate(180)"/><rect x="-1.7" y="-8" width="3.4" height="4" transform="rotate(225)"/><rect x="-1.7" y="-8" width="3.4" height="4" transform="rotate(270)"/><rect x="-1.7" y="-8" width="3.4" height="4" transform="rotate(315)"/><circle r="5.6"/><circle r="2.4" fill="#f0f0f0"/></g></svg>
<div class="btn" style="left:168px;top:897px;width:75px;height:20px;"></div>
<span class="t" style="left:185.0px;top:899.5px;font-size:11px;line-height:14px;letter-spacing:-0.138px;">Connect</span>
<div class="btn" style="left:249px;top:897px;width:75px;height:20px;"></div>
<span class="t" style="left:260.0px;top:899.5px;font-size:11px;line-height:14px;letter-spacing:-0.241px;">Disconnect</span>
<span class="t" style="left:43px;top:926.0px;font-size:11px;line-height:14px;letter-spacing:-0.035px;">Status:</span>
<span class="t" style="left:85px;top:926.0px;font-size:11px;line-height:14px;color:#0a8a0a;font-weight:bold;letter-spacing:0.597px;">Ready</span>
<span class="t" style="left:43px;top:952.0px;font-size:11px;line-height:14px;letter-spacing:0.071px;">Filter:</span>
<div class="sunk" style="left:78px;top:949px;width:142px;height:19px;"></div>
<span class="t" style="left:82px;top:951.5px;font-size:11px;line-height:14px;letter-spacing:-0.254px;">Bleu</span>
<div class="btn" style="left:203px;top:951px;width:15px;height:15px;"></div>
<svg class="a" style="left:207px;top:956.5px" width="7" height="4" viewBox="0 0 7 4"><path d="M0 0 L3.5 4 L7 0Z" fill="#000"/></svg>
<div class="btn" style="left:228px;top:949px;width:75px;height:20px;"></div>
<span class="t" style="left:240.0px;top:951.5px;font-size:11px;line-height:14px;letter-spacing:-0.245px;">Move Now</span>
<span class="t" style="left:43px;top:978.0px;font-size:11px;line-height:14px;letter-spacing:-0.005px;white-space:pre;">Filter wheel presently at filter:  Bleu</span>
<div style="left:470px;top:119px;width:5px;height:901px;background:#f0f0f0"></div>
<div style="left:475px;top:119px;width:1102px;height:900px;background:#000"></div>
<div style="left:469px;top:119px;width:2px;height:900px;background:#fcfcfc"></div>
<div style="left:473px;top:119px;width:2px;height:900px;background:linear-gradient(90deg,#c0c0c0,#808080)"></div>
<svg class="a" style="left:475px;top:119px" width="1102" height="900" viewBox="475 119 1102 900"><path d="M1138 123.5h1M1514 125.5h1M1363 132.5h1M660 132.5h1M601 131.5h1M859 130.5h1M1428 133.5h1M812 129.5h1M1476 132.5h1M633 129.5h1M1109 133.5h1M1265 130.5h1M1420 130.5h1M714 134.5h1M1491 121.5h1M784 121.5h1M950 126.5h1M848 127.5h1M1278 131.5h1M602 125.5h1M902 133.5h1M1171 120.5h1M650 123.5h1M805 135.5h1M1556 130.5h1M530 135.5h1M1565 135.5h1M1295 126.5h1M1190 130.5h1M1363 129.5h1M1285 133.5h1M648 124.5h1M735 119.5h1M1446 130.5h1M743 119.5h1M873 125.5h1M1547 135.5h1M781 124.5h1M721 120.5h1M692 120.5h1M604 133.5h1M1510 135.5h1M889 133.5h1M791 130.5h1M756 133.5h1M808 126.5h1M1358 135.5h1M1337 125.5h1M663 130.5h1M689 121.5h1M556 124.5h1M1004 131.5h1M658 127.5h1M930 121.5h1M724 133.5h1M1363 302.5h1M1398 414.5h1M1316 393.5h1M1508 655.5h1M1417 372.5h1M1334 994.5h1M1437 578.5h1M1431 846.5h1M1542 326.5h1M1535 140.5h1M1475 697.5h1M1324 453.5h1M1400 138.5h1M1349 623.5h1M1309 230.5h1M1352 284.5h1M1328 540.5h1M1462 781.5h1M1506 919.5h1M1560 290.5h1M1424 224.5h1M1375 789.5h1M1332 779.5h1M1432 638.5h1M1540 953.5h1M1564 685.5h1M1436 965.5h1M1454 922.5h1M1313 630.5h1M1444 825.5h1M1545 922.5h1M1549 154.5h1M1537 412.5h1M1555 540.5h1M1520 489.5h1M1368 997.5h1M1473 905.5h1M1407 867.5h1M1455 396.5h1M1447 1011.5h1M1482 425.5h1M1508 259.5h1M1389 213.5h1M1561 700.5h1M1378 697.5h1M1353 315.5h1M1353 463.5h1M1414 522.5h1M1338 647.5h1M1417 231.5h1M1434 530.5h1M1318 267.5h1M1546 596.5h1M1362 366.5h1M1574 835.5h1M1357 209.5h1M1405 534.5h1M1464 193.5h1M1348 400.5h1M1524 516.5h1M1324 849.5h1M1565 206.5h1M1335 746.5h1M1508 192.5h1M1379 562.5h1M1337 325.5h1M1467 887.5h1M1347 306.5h1M1546 169.5h1M1500 996.5h1M1476 590.5h1M1308 217.5h1M1413 526.5h1M1535 334.5h1M1514 178.5h1M1338 400.5h1M1339 757.5h1M1469 419.5h1M1545 931.5h1M1374 645.5h1M1384 758.5h1M1470 608.5h1M1347 661.5h1M1388 390.5h1M1360 210.5h1M1350 350.5h1M1395 376.5h1M1408 586.5h1M1432 378.5h1M1403 471.5h1M1544 174.5h1M1550 975.5h1M1536 519.5h1M1457 375.5h1M1406 213.5h1M1486 359.5h1M1481 281.5h1M1411 971.5h1M1401 772.5h1M1353 805.5h1M1493 796.5h1M1373 152.5h1M1381 493.5h1M1408 445.5h1M1329 631.5h1M1420 772.5h1M1418 179.5h1M1572 297.5h1M1370 290.5h1M1434 572.5h1M1398 160.5h1M1557 613.5h1M1541 993.5h1M1549 546.5h1M1568 809.5h1M1363 335.5h1M1436 299.5h1M1566 380.5h1M1325 340.5h1M1474 522.5h1M1381 505.5h1M1348 589.5h1M1467 887.5h1M1324 363.5h1M1330 159.5h1M1488 448.5h1M1489 683.5h1M1461 740.5h1M1388 274.5h1M1431 861.5h1M1559 391.5h1M1307 182.5h1M1319 552.5h1M1567 453.5h1M1538 316.5h1M1360 404.5h1M1326 263.5h1M1441 865.5h1M1574 408.5h1M1314 310.5h1M1405 535.5h1M1310 1015.5h1M1381 170.5h1M1322 179.5h1M1328 850.5h1M1503 246.5h1M1411 251.5h1M1454 625.5h1M1411 438.5h1M1523 404.5h1M1438 426.5h1M1394 583.5h1M1334 141.5h1M1425 647.5h1M1360 780.5h1M1319 517.5h1M1563 312.5h1M1426 608.5h1M1438 730.5h1M1428 656.5h1M1386 877.5h1M1433 877.5h1M1574 493.5h1M1474 330.5h1M1359 337.5h1M1382 950.5h1M1459 582.5h1M1544 171.5h1M1530 847.5h1M1458 611.5h1M1309 895.5h1M1522 1003.5h1M1424 832.5h1M1554 603.5h1M1400 807.5h1M1361 176.5h1M1409 668.5h1M1540 691.5h1M1550 661.5h1M1496 671.5h1M1489 789.5h1M1447 528.5h1M1487 731.5h1M1543 354.5h1M1443 858.5h1M1450 503.5h1M1504 195.5h1M1380 1011.5h1M1416 680.5h1M1380 171.5h1M1519 777.5h1M1355 811.5h1M1455 436.5h1M1559 550.5h1M1446 655.5h1M1367 475.5h1M1511 444.5h1M1499 768.5h1M1349 354.5h1M1358 816.5h1M1378 942.5h1M1439 446.5h1M1324 463.5h1M1327 981.5h1M1514 594.5h1M1525 141.5h1M1369 1016.5h1M1312 199.5h1M1347 535.5h1M1337 460.5h1M1381 953.5h1M1477 436.5h1M1314 988.5h1M1433 522.5h1M1307 466.5h1M1555 953.5h1M1488 927.5h1M1403 354.5h1M1383 389.5h1M1348 296.5h1M1322 490.5h1M1317 233.5h1M1440 934.5h1M1500 222.5h1M1324 707.5h1M1420 313.5h1M1438 497.5h1M1554 194.5h1M1469 910.5h1M1548 468.5h1M1506 264.5h1M1498 904.5h1M1504 999.5h1M1472 979.5h1M1366 780.5h1M1386 163.5h1M1440 639.5h1M1540 631.5h1M1453 259.5h1M1356 536.5h1M1481 660.5h1M1453 327.5h1M1327 555.5h1M1574 925.5h1M1447 316.5h1M1405 733.5h1M1559 229.5h1M1443 391.5h1M1494 174.5h1M1535 665.5h1M1489 868.5h1M1375 158.5h1M1392 242.5h1M1322 156.5h1M1406 404.5h1M1544 672.5h1M1534 242.5h1M1355 871.5h1M1563 916.5h1M1369 261.5h1M1543 901.5h1M1316 787.5h1M1333 932.5h1M1471 971.5h1M1312 510.5h1M1402 207.5h1M1539 785.5h1M1325 773.5h1M1369 669.5h1M1428 177.5h1M1570 411.5h1M1382 587.5h1M1454 417.5h1M1420 802.5h1M1465 168.5h1M1503 736.5h1M1558 413.5h1M1417 439.5h1M1386 563.5h1M1367 646.5h1M1456 498.5h1M1503 800.5h1M1401 686.5h1M1431 470.5h1M1525 147.5h1M1575 371.5h1M1498 649.5h1M1354 311.5h1M1569 316.5h1M1457 843.5h1M1518 323.5h1M1309 448.5h1M1357 737.5h1M1322 338.5h1M1517 753.5h1M1361 166.5h1M1338 802.5h1M1488 419.5h1M1443 780.5h1M1339 494.5h1M1504 157.5h1M1329 587.5h1M1429 392.5h1M1420 560.5h1M1431 226.5h1M1490 525.5h1M1504 480.5h1M1486 704.5h1M1404 615.5h1M1428 583.5h1M1430 859.5h1M1429 300.5h1M1417 876.5h1M1565 346.5h1M1538 828.5h1M1495 684.5h1M1568 354.5h1M1381 455.5h1M1351 848.5h1M1425 465.5h1M1459 334.5h1M1466 227.5h1M1451 501.5h1M1374 420.5h1M1486 559.5h1M1357 323.5h1M1327 551.5h1M1389 578.5h1M1462 296.5h1M1327 702.5h1M1485 137.5h1M1326 947.5h1M1538 657.5h1M1427 693.5h1M1337 309.5h1M1517 231.5h1M1466 277.5h1M1486 851.5h1M1514 988.5h1M1455 149.5h1M1412 181.5h1M1450 448.5h1M1492 433.5h1M1343 183.5h1M1529 637.5h1M1471 145.5h1M1353 796.5h1M1435 805.5h1M1377 902.5h1M1509 996.5h1M1489 464.5h1M1436 382.5h1M1532 627.5h1M1497 139.5h1M1568 572.5h1M1343 814.5h1M1522 483.5h1M1397 879.5h1M1485 718.5h1M1350 692.5h1M1321 1005.5h1M1536 844.5h1M1532 542.5h1M1420 994.5h1M1348 1008.5h1M1507 694.5h1M1354 277.5h1M1336 551.5h1M1497 179.5h1M1416 607.5h1M1410 713.5h1M1488 309.5h1M1312 982.5h1M1431 397.5h1M1556 250.5h1M1439 326.5h1M1444 591.5h1M1325 213.5h1M1571 214.5h1M1329 353.5h1M1467 143.5h1M1554 478.5h1M1330 783.5h1M1380 416.5h1M1378 852.5h1M1481 894.5h1M1514 479.5h1M1479 824.5h1M1553 652.5h1M1431 965.5h1M1485 291.5h1M1347 735.5h1M1487 616.5h1M1318 913.5h1M1418 185.5h1M1409 754.5h1M1563 800.5h1M1430 888.5h1M1373 752.5h1M1481 873.5h1M1314 792.5h1M1321 354.5h1M1479 315.5h1M1519 952.5h1M1475 297.5h1M1386 352.5h1M1539 709.5h1M1374 395.5h1M1439 757.5h1M1389 678.5h1M1483 956.5h1M1421 168.5h1M1425 499.5h1M1524 795.5h1M1443 906.5h1M1460 426.5h1M1434 302.5h1M1356 906.5h1M1323 736.5h1M1314 175.5h1M1360 882.5h1M1526 139.5h1M1561 216.5h1M1421 885.5h1M1397 152.5h1M1342 181.5h1M1492 410.5h1M1451 698.5h1M1511 569.5h1M1505 916.5h1M1516 960.5h1M1324 870.5h1M1547 659.5h1M1508 675.5h1M1420 282.5h1M1493 673.5h1M1393 969.5h1M1329 466.5h1M1435 521.5h1M1352 418.5h1M1535 848.5h1M1571 290.5h1M1428 774.5h1M1481 957.5h1M1316 706.5h1M1472 398.5h1M1559 1016.5h1M1438 497.5h1M1373 770.5h1M1475 1017.5h1M1535 525.5h1M1311 823.5h1M1457 704.5h1M1409 865.5h1M1515 973.5h1M1381 465.5h1M1572 143.5h1M1447 669.5h1M1467 529.5h1M1459 706.5h1M1522 834.5h1M1463 343.5h1M1333 883.5h1M1472 173.5h1M1531 435.5h1M1370 187.5h1M1391 647.5h1M1457 958.5h1M1412 665.5h1M1332 561.5h1M1375 179.5h1M1474 526.5h1M1401 577.5h1M1512 254.5h1M1352 343.5h1M1307 489.5h1M1384 809.5h1M1395 478.5h1M1553 390.5h1M1493 320.5h1M1459 965.5h1M1364 943.5h1M1508 609.5h1M1390 505.5h1M1353 476.5h1M1552 447.5h1M1566 399.5h1M1408 427.5h1M1351 905.5h1M1572 249.5h1M1418 376.5h1M1357 179.5h1M1396 971.5h1M1400 148.5h1M1517 942.5h1M1352 944.5h1M1568 832.5h1M1483 925.5h1M1332 1003.5h1M1485 733.5h1M1561 275.5h1M1391 582.5h1M1425 382.5h1M1541 712.5h1M1482 982.5h1M1525 948.5h1M1517 756.5h1M1349 499.5h1M1545 771.5h1M1430 260.5h1M1401 536.5h1M1384 508.5h1M1307 1010.5h1M1435 891.5h1M1570 819.5h1M1570 775.5h1M1443 439.5h1M1367 707.5h1M1554 277.5h1M1445 284.5h1M1560 982.5h1M1484 280.5h1M1338 303.5h1M1334 738.5h1M1402 415.5h1M1531 549.5h1M1440 507.5h1M1443 252.5h1M1329 292.5h1M1517 907.5h1M1342 698.5h1M1363 451.5h1M1367 930.5h1M1481 546.5h1M1454 273.5h1M1340 560.5h1M1374 291.5h1M1429 649.5h1M1502 431.5h1M1421 453.5h1M1347 505.5h1M1571 210.5h1M1473 360.5h1M1378 594.5h1M1524 520.5h1M1447 878.5h1M1364 546.5h1M1335 960.5h1M1539 332.5h1M1404 251.5h1M1451 914.5h1M1407 928.5h1M1315 201.5h1M1442 708.5h1M1488 450.5h1M1396 844.5h1M1359 488.5h1M1479 950.5h1M1372 1007.5h1M1435 657.5h1M1405 864.5h1M1530 274.5h1M1501 165.5h1M1343 1016.5h1M1412 144.5h1M1532 916.5h1M1334 618.5h1M1548 757.5h1M1561 750.5h1M1424 142.5h1M1326 385.5h1M1409 958.5h1M1545 186.5h1M1518 406.5h1M1356 328.5h1M1502 139.5h1M1346 859.5h1M1455 605.5h1M1541 350.5h1M1351 884.5h1M1358 228.5h1M1478 924.5h1M1347 213.5h1M1416 669.5h1M1436 943.5h1M1485 166.5h1M1489 972.5h1M1389 244.5h1M1541 301.5h1M1352 800.5h1M1313 868.5h1M1452 908.5h1M1379 808.5h1M1341 848.5h1M1314 212.5h1M1379 707.5h1M1358 398.5h1M1542 487.5h1M1412 168.5h1M1486 823.5h1M1312 1002.5h1M1466 814.5h1M1336 529.5h1M1338 203.5h1M1397 278.5h1M1435 516.5h1M1574 816.5h1M1434 952.5h1M1501 920.5h1M1496 377.5h1M1558 232.5h1M1367 332.5h1M1480 705.5h1M1499 249.5h1M1528 674.5h1M1468 354.5h1M1469 237.5h1M1491 206.5h1M1550 630.5h1M1493 285.5h1M1471 895.5h1M1400 853.5h1M1541 878.5h1M1418 1007.5h1M1462 903.5h1M1409 204.5h1M1391 149.5h1M1554 375.5h1M1540 414.5h1M1471 169.5h1M1318 719.5h1M1504 277.5h1M1376 732.5h1M1336 308.5h1M1421 1017.5h1M1444 866.5h1M1499 1006.5h1M1569 734.5h1M1405 583.5h1M1436 721.5h1M1437 795.5h1M1494 673.5h1M1426 577.5h1M1375 902.5h1M1417 409.5h1M1522 798.5h1M1530 459.5h1M1553 846.5h1M1389 540.5h1M1411 786.5h1M1461 801.5h1M1309 314.5h1M1428 156.5h1M1383 618.5h1M1574 494.5h1M1439 478.5h1M1349 407.5h1M1333 906.5h1M1523 531.5h1M1315 371.5h1M1340 737.5h1M1425 774.5h1M814 994.5h1M709 994.5h1M1000 883.5h1M671 856.5h1M609 849.5h1M949 1006.5h1M798 831.5h1M807 940.5h1M947 816.5h1M962 944.5h1M1108 822.5h1M760 843.5h1M1045 842.5h1M1175 967.5h1M1151 1006.5h1M1007 830.5h1M1228 822.5h1M1261 980.5h1M584 988.5h1M891 852.5h1M1199 895.5h1M594 832.5h1M1093 1016.5h1M1226 1010.5h1M673 934.5h1M1105 891.5h1M1063 897.5h1M513 892.5h1M878 905.5h1M1134 1014.5h1M789 843.5h1M694 995.5h1M730 825.5h1M501 867.5h1M1130 911.5h1M963 905.5h1M1156 867.5h1M846 947.5h1M1145 954.5h1M1093 1014.5h1M901 860.5h1M1049 1012.5h1M687 938.5h1M633 952.5h1M506 917.5h1M714 916.5h1M1118 928.5h1M717 946.5h1M1004 853.5h1M1213 993.5h1M909 939.5h1M900 845.5h1M650 972.5h1M931 830.5h1M1078 889.5h1M957 941.5h1M1081 939.5h1M648 868.5h1M888 834.5h1M910 894.5h1M1109 885.5h1M479 984.5h1M1168 865.5h1M1141 855.5h1M926 935.5h1M1008 814.5h1M1129 931.5h1M1118 946.5h1M639 985.5h1M552 858.5h1M1229 1015.5h1M793 867.5h1M922 876.5h1M919 858.5h1M983 995.5h1M783 818.5h1M639 840.5h1M584 855.5h1M677 901.5h1M919 892.5h1M734 923.5h1M654 851.5h1M630 1012.5h1M1229 976.5h1M1284 956.5h1M820 978.5h1M1049 941.5h1M654 985.5h1M1182 974.5h1M480 1013.5h1M1197 980.5h1M1104 850.5h1M860 857.5h1M1179 892.5h1M1250 952.5h1M1100 895.5h1M1250 820.5h1M1196 810.5h1M1270 843.5h1M1303 874.5h1M934 975.5h1M781 863.5h1M1305 982.5h1M860 872.5h1M501 831.5h1M1285 817.5h1M557 995.5h1M741 895.5h1M704 873.5h1M537 865.5h1M929 863.5h1M955 1015.5h1M536 999.5h1M1042 890.5h1M1051 903.5h1M811 850.5h1M572 903.5h1M764 893.5h1M1035 854.5h1M504 890.5h1M1176 987.5h1M1155 980.5h1M667 963.5h1M775 990.5h1M689 950.5h1M1158 809.5h1M1002 915.5h1M658 866.5h1M1166 907.5h1M1189 815.5h1M1189 917.5h1M869 850.5h1M849 950.5h1M641 849.5h1M602 849.5h1M1055 956.5h1M716 917.5h1M1249 810.5h1M963 959.5h1M660 859.5h1M559 1007.5h1M908 1002.5h1M725 984.5h1M787 919.5h1M644 959.5h1M766 938.5h1M1241 992.5h1M889 852.5h1M689 919.5h1M939 832.5h1M1152 910.5h1M769 902.5h1M702 818.5h1M1179 919.5h1M561 827.5h1M975 873.5h1M933 883.5h1M604 845.5h1M500 987.5h1M1284 1014.5h1M1296 891.5h1M749 898.5h1M923 854.5h1M592 1015.5h1M1162 865.5h1M518 899.5h1M788 960.5h1M1054 945.5h1M820 841.5h1M702 967.5h1M1004 930.5h1M998 947.5h1M772 884.5h1M841 990.5h1M1225 976.5h1M1227 982.5h1M850 986.5h1M1036 824.5h1M665 933.5h1M519 991.5h1M662 991.5h1M726 893.5h1M858 939.5h1M876 908.5h1M591 1003.5h1M604 982.5h1M1208 857.5h1M712 884.5h1M1200 870.5h1M804 840.5h1M600 869.5h1M490 867.5h1M907 871.5h1M925 832.5h1M692 986.5h1M570 832.5h1M831 941.5h1M1205 852.5h1M1015 935.5h1M772 947.5h1M1107 992.5h1M1019 973.5h1M844 865.5h1M640 978.5h1M1019 923.5h1M739 868.5h1M1196 926.5h1M504 905.5h1M803 983.5h1M544 974.5h1M1106 837.5h1M1143 836.5h1M656 942.5h1M661 860.5h1M609 895.5h1M598 821.5h1M774 980.5h1M708 887.5h1M1090 845.5h1M1030 927.5h1M700 880.5h1M997 872.5h1M787 910.5h1M1291 990.5h1M689 849.5h1M571 876.5h1M476 1013.5h1M1205 920.5h1M996 847.5h1M1134 920.5h1M627 834.5h1M1066 857.5h1M1075 946.5h1M679 922.5h1M1025 920.5h1M651 974.5h1M1225 1014.5h1M1061 821.5h1M685 830.5h1M731 809.5h1M947 866.5h1M498 866.5h1M876 866.5h1M1250 930.5h1M891 913.5h1M525 952.5h1M995 839.5h1M819 826.5h1M1161 829.5h1M1284 884.5h1M544 885.5h1M973 922.5h1M920 867.5h1M1204 905.5h1M1248 951.5h1M587 959.5h1M1256 965.5h1M901 829.5h1M1256 825.5h1M1294 836.5h1M1305 905.5h1M1292 930.5h1M547 844.5h1M901 921.5h1M1060 986.5h1M823 867.5h1M773 993.5h1M1101 1014.5h1M1035 974.5h1M1304 951.5h1M738 989.5h1M1205 975.5h1M1151 1014.5h1M1178 916.5h1M670 909.5h1M910 859.5h1M1140 882.5h1M999 1008.5h1M1044 928.5h1M1160 854.5h1M1012 848.5h1M811 882.5h1M748 861.5h1M487 920.5h1M571 867.5h1M1157 938.5h1M934 882.5h1M971 949.5h1M948 877.5h1M639 857.5h1M673 1016.5h1M1174 892.5h1M514 894.5h1M1236 974.5h1M1252 954.5h1M1303 838.5h1M605 862.5h1M979 979.5h1M653 923.5h1M938 816.5h1M563 914.5h1M616 1008.5h1M895 869.5h1M484 891.5h1M1281 919.5h1M818 812.5h1M1069 889.5h1M867 969.5h1M1014 905.5h1M991 962.5h1M1260 1003.5h1M960 872.5h1M954 905.5h1M528 893.5h1M715 954.5h1M521 989.5h1M1157 812.5h1M1201 988.5h1M1284 871.5h1M718 996.5h1M1104 959.5h1M869 897.5h1M494 944.5h1M642 809.5h1M540 892.5h1M634 906.5h1M973 839.5h1M632 1016.5h1M1055 923.5h1M681 1008.5h1M481 887.5h1M570 898.5h1M659 850.5h1M1245 810.5h1M1158 911.5h1M506 910.5h1M605 907.5h1M903 881.5h1M930 881.5h1M596 924.5h1M929 918.5h1M739 910.5h1M1111 844.5h1M1292 815.5h1M1024 936.5h1M701 888.5h1M849 908.5h1M898 978.5h1M903 970.5h1M911 893.5h1M686 978.5h1M637 823.5h1M651 979.5h1M569 906.5h1M1015 1000.5h1M1145 918.5h1M510 997.5h1M1219 880.5h1M713 877.5h1M1252 1015.5h1M1255 952.5h1M577 951.5h1M1061 989.5h1M797 936.5h1M475 986.5h1M677 888.5h1M497 833.5h1M626 833.5h1M1187 952.5h1M1149 995.5h1M813 867.5h1M1137 888.5h1M1000 878.5h1M912 873.5h1M931 936.5h1M1216 819.5h1M1112 1011.5h1M1097 985.5h1M728 872.5h1M1192 943.5h1M833 936.5h1M962 857.5h1M826 819.5h1M1288 970.5h1M604 886.5h1M687 1006.5h1M978 934.5h1M1267 1000.5h1M1257 834.5h1M628 835.5h1M845 984.5h1M779 969.5h1M895 953.5h1M517 878.5h1M723 846.5h1M1224 819.5h1M990 916.5h1M562 870.5h1M1005 864.5h1M569 893.5h1M708 840.5h1M660 817.5h1M691 1003.5h1M688 1014.5h1M596 996.5h1M1061 822.5h1M845 941.5h1M912 875.5h1M806 993.5h1M982 923.5h1M597 902.5h1M1053 812.5h1M527 990.5h1M951 981.5h1M721 923.5h1M929 908.5h1M1283 902.5h1M909 996.5h1M1258 966.5h1M1187 959.5h1M810 964.5h1M509 923.5h1M1048 861.5h1M1002 877.5h1M1074 984.5h1M1276 994.5h1M1217 894.5h1M1252 887.5h1M961 910.5h1M1135 873.5h1M686 844.5h1M1240 919.5h1M741 832.5h1M761 1010.5h1M1144 977.5h1M520 814.5h1M739 944.5h1M1260 839.5h1M806 881.5h1M1099 831.5h1M1272 820.5h1M1144 920.5h1M588 950.5h1M954 851.5h1M1275 856.5h1M993 984.5h1M893 975.5h1M1149 884.5h1M612 923.5h1M887 855.5h1M1040 870.5h1M1294 1010.5h1M1099 833.5h1M494 946.5h1M741 890.5h1M1241 1003.5h1M602 904.5h1M519 895.5h1M1201 940.5h1M797 823.5h1M1185 944.5h1M787 969.5h1M1045 946.5h1M1301 986.5h1M718 822.5h1M1263 847.5h1M479 1009.5h1M1151 944.5h1M1038 847.5h1M601 929.5h1M1058 911.5h1M973 995.5h1M701 870.5h1M498 911.5h1M1121 991.5h1M885 819.5h1M1106 891.5h1M975 853.5h1M1091 837.5h1M812 1017.5h1M988 835.5h1M551 945.5h1" stroke="#4a4a4a" stroke-width="1" fill="none"/><path d="M667 130.5h1M728 126.5h1M927 120.5h1M747 128.5h1M716 128.5h1M845 122.5h1M603 120.5h1M974 121.5h1M1394 128.5h1M624 122.5h1M1192 134.5h1M773 132.5h1M1127 123.5h1M1530 120.5h1M687 134.5h1M1245 123.5h1M1186 130.5h1M1429 134.5h1M1176 127.5h1M661 127.5h1M532 127.5h1M871 130.5h1M684 126.5h1M1166 125.5h1M1428 123.5h1M910 128.5h1M1142 127.5h1M1199 133.5h1M1502 123.5h1M1376 124.5h1M1536 135.5h1M1514 133.5h1M1042 133.5h1M724 131.5h1M623 126.5h1M1262 129.5h1M1025 119.5h1M1008 121.5h1M1330 127.5h1M1455 593.5h1M1316 887.5h1M1404 663.5h1M1535 245.5h1M1528 809.5h1M1409 391.5h1M1569 779.5h1M1315 983.5h1M1408 216.5h1M1476 397.5h1M1462 773.5h1M1418 828.5h1M1571 429.5h1M1346 976.5h1M1414 213.5h1M1379 902.5h1M1491 272.5h1M1493 373.5h1M1308 640.5h1M1434 409.5h1M1511 704.5h1M1517 598.5h1M1372 311.5h1M1440 552.5h1M1461 631.5h1M1477 914.5h1M1439 965.5h1M1491 265.5h1M1549 738.5h1M1541 224.5h1M1462 268.5h1M1307 147.5h1M1431 623.5h1M1562 827.5h1M1522 508.5h1M1406 373.5h1M1362 775.5h1M1402 365.5h1M1407 518.5h1M1549 168.5h1M1433 968.5h1M1462 979.5h1M1324 630.5h1M1427 902.5h1M1457 423.5h1M1435 388.5h1M1398 596.5h1M1310 245.5h1M1437 176.5h1M1474 555.5h1M1554 201.5h1M1509 816.5h1M1466 900.5h1M1489 561.5h1M1529 297.5h1M1353 552.5h1M1510 228.5h1M1496 891.5h1M1362 529.5h1M1407 986.5h1M1367 536.5h1M1463 801.5h1M1495 594.5h1M1372 504.5h1M1353 958.5h1M1447 972.5h1M1552 350.5h1M1538 705.5h1M1436 454.5h1M1528 564.5h1M1331 272.5h1M1356 202.5h1M1312 194.5h1M1486 745.5h1M1360 149.5h1M1407 282.5h1M1572 759.5h1M1519 969.5h1M1415 537.5h1M1322 944.5h1M1401 643.5h1M1570 403.5h1M1324 493.5h1M1537 814.5h1M1472 310.5h1M1478 610.5h1M1527 854.5h1M1370 601.5h1M1516 667.5h1M1401 538.5h1M1313 213.5h1M1405 617.5h1M1487 819.5h1M1436 573.5h1M1461 465.5h1M1526 775.5h1M1483 785.5h1M1457 393.5h1M1459 339.5h1M1367 407.5h1M1378 621.5h1M1336 632.5h1M1380 854.5h1M1562 305.5h1M1546 849.5h1M1458 997.5h1M1345 321.5h1M1321 158.5h1M1568 632.5h1M1549 934.5h1M1414 427.5h1M1523 394.5h1M1411 807.5h1M1460 267.5h1M1511 877.5h1M1514 695.5h1M1337 944.5h1M1334 646.5h1M1505 745.5h1M1359 221.5h1M1415 292.5h1M1369 269.5h1M1448 873.5h1M1457 780.5h1M1562 608.5h1M1391 991.5h1M1531 618.5h1M1465 735.5h1M1426 963.5h1M1523 298.5h1M1562 492.5h1M1426 453.5h1M1504 607.5h1M1510 730.5h1M1439 990.5h1M1551 655.5h1M1492 728.5h1M1513 935.5h1M1497 784.5h1M1555 737.5h1M1339 749.5h1M1438 463.5h1M1352 822.5h1M1439 942.5h1M1532 913.5h1M1501 309.5h1M1399 867.5h1M1443 565.5h1M1569 195.5h1M1415 710.5h1M1410 510.5h1M1396 338.5h1M1312 204.5h1M1497 725.5h1M1309 501.5h1M1560 594.5h1M1352 366.5h1M1446 263.5h1M1377 691.5h1M1423 287.5h1M1334 469.5h1M1409 653.5h1M1422 279.5h1M1443 831.5h1M1463 492.5h1M1368 198.5h1M1351 895.5h1M1462 764.5h1M1420 330.5h1M1429 468.5h1M1318 299.5h1M1485 587.5h1M1487 280.5h1M1450 773.5h1M1501 1009.5h1M1562 526.5h1M1381 583.5h1M1527 535.5h1M1327 745.5h1M1538 147.5h1M1556 548.5h1M1482 845.5h1M1567 567.5h1M1361 498.5h1M1328 845.5h1M1570 284.5h1M1394 672.5h1M1546 764.5h1M1540 447.5h1M1341 385.5h1M1455 542.5h1M1365 480.5h1M1340 263.5h1M1407 413.5h1M1372 705.5h1M1369 831.5h1M1504 166.5h1M1362 206.5h1M1492 961.5h1M1544 930.5h1M1561 870.5h1M1529 823.5h1M1331 387.5h1M1420 424.5h1M1485 571.5h1M1481 845.5h1M1412 575.5h1M1440 315.5h1M1556 823.5h1M1430 143.5h1M1379 738.5h1M1389 469.5h1M1476 893.5h1M1362 797.5h1M1465 897.5h1M1501 325.5h1M1560 570.5h1M1387 443.5h1M1348 282.5h1M1390 278.5h1M1458 141.5h1M1476 760.5h1M1522 514.5h1M1497 705.5h1M1520 505.5h1M1355 329.5h1M1435 863.5h1M1541 368.5h1M1364 890.5h1M1344 956.5h1M1564 700.5h1M1570 241.5h1M1405 713.5h1M1429 518.5h1M1329 973.5h1M1358 501.5h1M1455 840.5h1M1482 291.5h1M1507 1000.5h1M1491 881.5h1M1489 719.5h1M1310 824.5h1M1535 542.5h1M1461 309.5h1M1436 881.5h1M1341 995.5h1M1403 414.5h1M1320 801.5h1M1478 931.5h1M1467 194.5h1M1523 489.5h1M1323 931.5h1M1550 239.5h1M1353 165.5h1M1369 198.5h1M1562 355.5h1M1320 247.5h1M1337 370.5h1M1441 863.5h1M1538 354.5h1M1531 323.5h1M1378 441.5h1M1510 229.5h1M1425 725.5h1M1563 252.5h1M1328 805.5h1M1309 381.5h1M1437 847.5h1M1473 838.5h1M1471 210.5h1M1441 998.5h1M1485 671.5h1M1542 318.5h1M1526 262.5h1M1573 446.5h1M1373 512.5h1M1439 196.5h1M1463 872.5h1M1531 230.5h1M1329 871.5h1M1458 554.5h1M1497 201.5h1M1320 247.5h1M1397 203.5h1M1558 275.5h1M1409 548.5h1M1505 925.5h1M1314 241.5h1M1417 714.5h1M1335 700.5h1M1520 1000.5h1M1530 1014.5h1M1413 686.5h1M1544 809.5h1M1481 342.5h1M1336 321.5h1M1343 970.5h1M1470 860.5h1M1384 955.5h1M1456 365.5h1M1354 339.5h1M1487 262.5h1M1344 434.5h1M1354 342.5h1M1462 749.5h1M1323 731.5h1M1327 662.5h1M1366 293.5h1M1367 469.5h1M1390 719.5h1M1442 168.5h1M1368 223.5h1M1432 211.5h1M1408 361.5h1M1552 175.5h1M1517 231.5h1M1332 538.5h1M1509 949.5h1M1351 370.5h1M1480 816.5h1M1460 637.5h1M1363 968.5h1M1381 480.5h1M1515 813.5h1M1486 972.5h1M1508 452.5h1M1390 537.5h1M1432 602.5h1M1436 819.5h1M1337 807.5h1M1466 906.5h1M1384 883.5h1M1395 902.5h1M1456 928.5h1M1573 311.5h1M1550 339.5h1M1547 814.5h1M1369 402.5h1M1313 179.5h1M1463 499.5h1M1397 877.5h1M1308 1009.5h1M1427 728.5h1M1341 927.5h1M1567 416.5h1M1337 593.5h1M1323 177.5h1M1546 250.5h1M1476 680.5h1M1321 967.5h1M1516 368.5h1M1343 794.5h1M1375 578.5h1M1571 153.5h1M1390 715.5h1M1488 394.5h1M1411 723.5h1M1409 587.5h1M1429 871.5h1M1419 930.5h1M1546 155.5h1M1390 767.5h1M1322 706.5h1M1350 651.5h1M1413 824.5h1M1573 497.5h1M1382 642.5h1M1515 762.5h1M1322 823.5h1M1355 303.5h1M1549 917.5h1M1313 559.5h1M1481 373.5h1M1467 572.5h1M1494 202.5h1M1334 802.5h1M1367 317.5h1M1447 924.5h1M1516 850.5h1M1330 284.5h1M1352 720.5h1M1488 509.5h1M1494 383.5h1M1332 238.5h1M1548 585.5h1M1363 607.5h1M1425 573.5h1M1491 591.5h1M1567 364.5h1M1417 713.5h1M1574 311.5h1M1551 408.5h1M1345 963.5h1M1567 148.5h1M1570 162.5h1M1323 687.5h1M1562 817.5h1M1482 559.5h1M1307 295.5h1M1439 758.5h1M1392 219.5h1M1538 945.5h1M1396 278.5h1M1431 648.5h1M1548 354.5h1M1311 592.5h1M1413 692.5h1M1491 526.5h1M1539 477.5h1M1456 992.5h1M1340 752.5h1M1518 880.5h1M1520 902.5h1M1353 201.5h1M1475 486.5h1M1379 329.5h1M1343 958.5h1M1538 960.5h1M1548 715.5h1M988 917.5h1M1210 985.5h1M1195 992.5h1M881 889.5h1M597 1009.5h1M1008 901.5h1M551 836.5h1M1113 908.5h1M1000 865.5h1M963 991.5h1M1197 904.5h1M941 831.5h1M642 945.5h1M503 874.5h1M1174 857.5h1M1256 874.5h1M783 904.5h1M895 1002.5h1M789 873.5h1M808 906.5h1M1205 895.5h1M1104 826.5h1M1122 956.5h1M1231 899.5h1M583 962.5h1M1005 826.5h1M1080 954.5h1M1209 842.5h1M569 856.5h1M850 997.5h1M666 934.5h1M987 811.5h1M492 975.5h1M695 939.5h1M631 970.5h1M1179 875.5h1M948 991.5h1M546 1012.5h1M1031 895.5h1M840 967.5h1M792 850.5h1M778 856.5h1M1182 909.5h1M951 955.5h1M837 939.5h1M1285 892.5h1M635 949.5h1M735 908.5h1M1246 854.5h1M647 837.5h1M1017 968.5h1M509 1009.5h1M924 814.5h1M864 995.5h1M691 1011.5h1M1254 830.5h1M776 959.5h1M758 838.5h1M1184 1015.5h1M759 925.5h1M800 911.5h1M609 899.5h1M993 817.5h1M1264 825.5h1M1143 927.5h1M639 942.5h1M589 844.5h1M601 881.5h1M1124 859.5h1M1075 825.5h1M1002 938.5h1M1246 869.5h1M672 982.5h1M795 954.5h1M1202 959.5h1M660 812.5h1M599 877.5h1M1239 878.5h1M912 968.5h1M853 874.5h1M983 914.5h1M719 818.5h1M565 895.5h1M583 989.5h1M600 997.5h1M523 835.5h1M892 831.5h1M747 978.5h1M577 906.5h1M1160 935.5h1M922 841.5h1M1241 1010.5h1M1006 861.5h1M997 952.5h1M989 841.5h1M903 919.5h1M664 820.5h1M693 995.5h1M714 1009.5h1M894 817.5h1M823 895.5h1M924 882.5h1M652 822.5h1M753 921.5h1M1068 981.5h1M1075 1006.5h1M808 941.5h1M1091 832.5h1M884 870.5h1M721 905.5h1M1007 1012.5h1M786 877.5h1M1206 931.5h1M488 822.5h1M948 867.5h1M654 1008.5h1M479 919.5h1M1091 966.5h1M592 902.5h1M821 850.5h1M518 936.5h1M1295 859.5h1M1263 852.5h1M796 883.5h1M612 992.5h1M791 886.5h1M1060 865.5h1M1235 890.5h1M1246 902.5h1M1114 817.5h1M1108 867.5h1M1180 925.5h1M1124 895.5h1M548 814.5h1M1152 950.5h1M572 864.5h1M1284 903.5h1M831 937.5h1M910 856.5h1M1125 840.5h1M860 960.5h1M697 889.5h1M1287 844.5h1M1090 953.5h1M1280 982.5h1M578 848.5h1M1136 937.5h1M1260 974.5h1M1274 887.5h1M1133 849.5h1M632 873.5h1M563 876.5h1M1282 994.5h1M938 987.5h1M999 1000.5h1M488 875.5h1M919 991.5h1M684 845.5h1M1147 809.5h1M497 906.5h1M807 942.5h1M1105 910.5h1M595 942.5h1M679 891.5h1M682 848.5h1M631 963.5h1M718 840.5h1M785 959.5h1M502 847.5h1M1041 858.5h1M893 887.5h1M589 834.5h1M1213 880.5h1M771 856.5h1M496 881.5h1M808 885.5h1M1128 973.5h1M571 1014.5h1M1000 879.5h1M740 985.5h1M673 911.5h1M962 973.5h1M1058 911.5h1M558 870.5h1M552 992.5h1M749 1010.5h1M815 888.5h1M634 954.5h1M952 812.5h1M721 815.5h1M948 990.5h1M534 904.5h1M1080 814.5h1M1118 894.5h1M987 904.5h1M931 924.5h1M587 985.5h1M816 995.5h1M1287 820.5h1M967 999.5h1M1120 934.5h1M976 987.5h1M857 834.5h1M1110 825.5h1M575 912.5h1M984 996.5h1M1224 962.5h1M1095 916.5h1M1118 1003.5h1M504 919.5h1M578 872.5h1M661 1006.5h1M796 989.5h1M732 963.5h1M1028 849.5h1M727 925.5h1M894 969.5h1M595 863.5h1M1128 1012.5h1M635 939.5h1M826 905.5h1M561 909.5h1M790 914.5h1M769 892.5h1M1268 959.5h1M735 972.5h1M1189 1013.5h1M569 831.5h1M899 904.5h1M1177 925.5h1M545 887.5h1M1072 1000.5h1M1116 960.5h1M513 936.5h1M927 946.5h1M543 845.5h1M519 829.5h1M785 901.5h1M1020 869.5h1M488 811.5h1M916 1009.5h1M855 886.5h1M688 994.5h1M1049 1003.5h1M505 959.5h1M1277 975.5h1M1248 862.5h1M698 892.5h1M1126 1003.5h1M1225 968.5h1M685 881.5h1M1222 858.5h1M1253 940.5h1M678 1013.5h1M849 838.5h1M825 839.5h1M660 930.5h1M534 858.5h1M711 917.5h1M832 839.5h1M1258 894.5h1M1047 994.5h1M581 1001.5h1M1297 927.5h1M500 857.5h1M1168 957.5h1M1220 820.5h1M924 961.5h1M1126 979.5h1M751 842.5h1M845 809.5h1M1189 823.5h1M1138 902.5h1M998 945.5h1M1243 995.5h1M621 951.5h1M949 1007.5h1M518 897.5h1M1238 894.5h1M1273 941.5h1M626 984.5h1M1146 877.5h1M911 969.5h1M917 870.5h1M1098 832.5h1M1216 1016.5h1M893 872.5h1M1076 867.5h1M567 921.5h1M654 972.5h1M788 946.5h1M743 988.5h1M1097 851.5h1M848 821.5h1M1012 894.5h1M946 940.5h1M746 809.5h1M778 949.5h1M672 870.5h1M866 898.5h1M750 872.5h1M1119 977.5h1M777 854.5h1M722 903.5h1M962 843.5h1M563 813.5h1M621 815.5h1M869 843.5h1M1061 839.5h1M942 926.5h1M839 1003.5h1M1079 901.5h1M1016 881.5h1M1027 855.5h1M730 835.5h1M1163 922.5h1M631 905.5h1M798 886.5h1M510 902.5h1M604 984.5h1M607 953.5h1M1206 989.5h1M882 904.5h1M503 975.5h1M742 976.5h1M1047 922.5h1M1018 963.5h1M916 828.5h1M532 812.5h1M1253 997.5h1M853 997.5h1M1078 825.5h1M695 913.5h1M814 873.5h1" stroke="#6e6e6e" stroke-width="1" fill="none"/><path d="M1491 132.5h1M983 124.5h1M1027 134.5h1M608 120.5h1M1063 123.5h1M1356 127.5h1M817 130.5h1M931 125.5h1M1484 130.5h1M720 131.5h1M685 135.5h1M1042 120.5h1M910 128.5h1M1414 133.5h1M1529 134.5h1M563 135.5h1M1463 680.5h1M1343 777.5h1M1340 900.5h1M1442 377.5h1M1412 373.5h1M1514 446.5h1M1468 331.5h1M1526 166.5h1M1503 560.5h1M1327 138.5h1M1530 852.5h1M1408 143.5h1M1409 456.5h1M1465 978.5h1M1351 187.5h1M1544 201.5h1M1329 405.5h1M1361 623.5h1M1435 577.5h1M1497 397.5h1M1425 802.5h1M1411 169.5h1M1493 608.5h1M1379 793.5h1M1389 792.5h1M1467 933.5h1M1347 192.5h1M1391 839.5h1M1442 254.5h1M1508 892.5h1M1445 548.5h1M1331 878.5h1M1545 219.5h1M1530 839.5h1M1427 998.5h1M1483 282.5h1M1351 981.5h1M1357 947.5h1M1495 465.5h1M1530 668.5h1M1484 617.5h1M1410 432.5h1M1355 640.5h1M1388 427.5h1M1348 639.5h1M1461 909.5h1M1438 755.5h1M1440 780.5h1M1521 385.5h1M1418 301.5h1M1522 780.5h1M1421 447.5h1M1342 966.5h1M1553 139.5h1M1538 491.5h1M1413 549.5h1M1550 760.5h1M1541 777.5h1M1325 568.5h1M1522 726.5h1M1386 623.5h1M1537 888.5h1M1332 511.5h1M1381 884.5h1M1437 190.5h1M1390 781.5h1M1551 531.5h1M1538 415.5h1M1477 757.5h1M1499 753.5h1M1509 613.5h1M1437 737.5h1M1399 962.5h1M1356 594.5h1M1408 830.5h1M1476 363.5h1M1458 479.5h1M1315 589.5h1M1351 760.5h1M1335 667.5h1M1471 934.5h1M1502 727.5h1M1539 761.5h1M1488 890.5h1M1550 412.5h1M1309 557.5h1M1541 431.5h1M1460 686.5h1M1575 433.5h1M1308 451.5h1M1387 667.5h1M1472 284.5h1M1509 733.5h1M1555 159.5h1M1319 486.5h1M1445 890.5h1M1371 973.5h1M1494 832.5h1M1445 760.5h1M1520 848.5h1M1372 638.5h1M1477 781.5h1M1555 222.5h1M1393 241.5h1M1361 717.5h1M1348 967.5h1M1410 698.5h1M1481 960.5h1M1575 502.5h1M1532 253.5h1M1554 169.5h1M1355 341.5h1M1357 508.5h1M1380 445.5h1M1444 379.5h1M1353 503.5h1M1476 372.5h1M1439 969.5h1M1423 547.5h1M1411 705.5h1M1415 468.5h1M1314 204.5h1M1491 184.5h1M1384 651.5h1M1382 785.5h1M1331 554.5h1M1517 900.5h1M1307 621.5h1M1500 500.5h1M1421 764.5h1M1489 815.5h1M1551 885.5h1M1455 769.5h1M1494 179.5h1M1543 610.5h1M1388 286.5h1M1355 343.5h1M1535 437.5h1M1316 905.5h1M1539 234.5h1M1518 799.5h1M1346 520.5h1M1557 947.5h1M1414 842.5h1M1350 967.5h1M1341 139.5h1M1475 207.5h1M1559 825.5h1M1462 191.5h1M1569 443.5h1M1358 702.5h1M1499 671.5h1M1450 779.5h1M1507 508.5h1M1509 679.5h1M1518 991.5h1M1380 681.5h1M1416 724.5h1M1451 171.5h1M1418 706.5h1M1322 365.5h1M1408 946.5h1M1458 902.5h1M1318 894.5h1M1322 960.5h1M1385 509.5h1M1572 584.5h1M1503 301.5h1M1363 356.5h1M1351 611.5h1M1543 633.5h1M1421 786.5h1M1361 659.5h1M1310 710.5h1M1461 453.5h1M1414 913.5h1M1533 398.5h1M1473 417.5h1M1429 487.5h1M1572 843.5h1M1346 202.5h1M1352 298.5h1M1406 361.5h1M1542 940.5h1M1343 432.5h1M1344 854.5h1M1489 490.5h1M1407 515.5h1M1321 208.5h1M1395 224.5h1M1442 865.5h1M1441 271.5h1M943 870.5h1M1193 1012.5h1M788 823.5h1M543 873.5h1M1189 833.5h1M871 1004.5h1M951 909.5h1M1000 895.5h1M1220 852.5h1M822 929.5h1M1002 1010.5h1M578 865.5h1M864 972.5h1M811 940.5h1M1267 810.5h1M1209 851.5h1M517 1009.5h1M1143 978.5h1M1106 891.5h1M492 903.5h1M543 901.5h1M810 990.5h1M500 981.5h1M1296 1010.5h1M739 880.5h1M1014 918.5h1M1091 947.5h1M1135 1017.5h1M853 953.5h1M588 959.5h1M1243 812.5h1M840 870.5h1M818 930.5h1M635 969.5h1M953 809.5h1M1211 820.5h1M850 913.5h1M568 948.5h1M1149 875.5h1M757 839.5h1M1195 923.5h1M969 891.5h1M843 831.5h1M787 1014.5h1M1211 1012.5h1M671 847.5h1M1275 811.5h1M741 1003.5h1M755 881.5h1M858 1017.5h1M665 875.5h1M988 843.5h1M1034 966.5h1M1180 940.5h1M925 963.5h1M1305 824.5h1M1114 1001.5h1M635 943.5h1M993 862.5h1M677 976.5h1M836 955.5h1M603 988.5h1M581 931.5h1M592 893.5h1M512 889.5h1M922 958.5h1M1033 985.5h1M593 832.5h1M1216 903.5h1M1128 829.5h1M523 953.5h1M1187 952.5h1M1121 905.5h1M507 840.5h1M1061 1010.5h1M755 919.5h1M1040 971.5h1M624 968.5h1M1138 851.5h1M706 999.5h1M1016 964.5h1M785 947.5h1M945 938.5h1M630 871.5h1M1169 928.5h1M722 959.5h1M1206 897.5h1M1019 901.5h1M989 988.5h1M1045 971.5h1M491 914.5h1M693 918.5h1M954 914.5h1M797 935.5h1M717 936.5h1M553 819.5h1M660 849.5h1M1206 976.5h1M839 1017.5h1M872 970.5h1M512 929.5h1M1156 985.5h1M1087 856.5h1M652 914.5h1M594 904.5h1M765 1004.5h1M825 815.5h1M1013 941.5h1M965 895.5h1M825 886.5h1M559 944.5h1M614 935.5h1M654 846.5h1M584 839.5h1M980 956.5h1M665 1013.5h1M1082 989.5h1M1068 930.5h1M661 995.5h1M819 983.5h1M1284 987.5h1M1032 1001.5h1M1273 900.5h1M1041 885.5h1M1094 973.5h1M1239 833.5h1M1023 950.5h1M616 827.5h1M515 819.5h1M1215 869.5h1M1015 1003.5h1M882 931.5h1M1141 810.5h1M996 897.5h1M782 981.5h1M873 961.5h1M871 962.5h1" stroke="#9a9a9a" stroke-width="1" fill="none"/><path d="M573 121.5h1M1409 121.5h1M1179 121.5h1M1533 132.5h1M740 132.5h1M1350 818.5h1M1381 181.5h1M1565 719.5h1M1360 522.5h1M1542 642.5h1M1359 189.5h1M1340 161.5h1M1369 935.5h1M1326 820.5h1M1376 163.5h1M1420 204.5h1M1331 788.5h1M1331 440.5h1M1494 775.5h1M1310 521.5h1M1547 620.5h1M1330 204.5h1M1493 341.5h1M1564 624.5h1M1417 868.5h1M1353 725.5h1M1387 393.5h1M1312 535.5h1M1371 935.5h1M1488 939.5h1M1310 301.5h1M1330 331.5h1M1328 432.5h1M1559 520.5h1M1374 397.5h1M1400 596.5h1M1390 195.5h1M1307 945.5h1M1399 278.5h1M1573 554.5h1M1478 425.5h1M1522 748.5h1M1512 383.5h1M1327 172.5h1M1487 303.5h1M1571 534.5h1M1448 977.5h1M1355 893.5h1M1383 564.5h1M1425 227.5h1M1530 666.5h1M1494 213.5h1M1388 738.5h1M1398 715.5h1M1329 856.5h1M1377 443.5h1M1535 158.5h1M1388 846.5h1M1344 965.5h1M1512 827.5h1M1387 625.5h1M1500 383.5h1M1366 225.5h1M1501 377.5h1M1395 293.5h1M1353 363.5h1M1462 391.5h1M1473 698.5h1M1519 728.5h1M1569 864.5h1M1339 340.5h1M1436 905.5h1M1328 521.5h1M1403 1014.5h1M1472 302.5h1M1537 650.5h1M1479 495.5h1M1413 425.5h1M1520 150.5h1M1319 328.5h1M1347 159.5h1M1353 844.5h1M1422 246.5h1M1531 280.5h1M1498 660.5h1M1417 334.5h1M1389 381.5h1M695 836.5h1M1148 826.5h1M1221 999.5h1M532 809.5h1M528 859.5h1M828 996.5h1M1149 987.5h1M696 878.5h1M849 982.5h1M1053 1010.5h1M815 882.5h1M511 935.5h1M522 1000.5h1M1135 856.5h1M703 930.5h1M1020 968.5h1M1200 817.5h1M871 900.5h1M811 981.5h1M1038 851.5h1M748 1015.5h1M1300 925.5h1M774 981.5h1M953 920.5h1M1247 866.5h1M1122 849.5h1M993 992.5h1M721 889.5h1M799 939.5h1M1293 856.5h1M964 895.5h1M531 917.5h1M1299 1008.5h1M934 853.5h1M1069 840.5h1M476 822.5h1M1175 846.5h1M613 966.5h1M711 967.5h1M1023 983.5h1M1112 847.5h1M595 985.5h1M556 861.5h1M687 998.5h1M534 869.5h1M865 878.5h1M1119 958.5h1M940 820.5h1M811 891.5h1M964 991.5h1M940 927.5h1M994 816.5h1" stroke="#c8c8c8" stroke-width="1" fill="none"/><path d="M1550 134.5h1M1289 131.5h1M1297 127.5h1M1209 131.5h1M784 122.5h1M527 121.5h1M478 134.5h1M883 134.5h1M743 120.5h1M1454 135.5h1M1546 127.5h1M667 131.5h1M850 132.5h1M1399 343.5h1M1386 810.5h1M1565 279.5h1M1346 627.5h1M1567 423.5h1M1510 259.5h1M1346 506.5h1M1453 787.5h1M1348 187.5h1M1377 796.5h1M1555 187.5h1M1317 904.5h1M1535 579.5h1M1344 537.5h1M1426 720.5h1M1542 422.5h1M1442 915.5h1M1401 805.5h1M1486 567.5h1M1446 480.5h1M1542 772.5h1M1464 564.5h1M1514 345.5h1M1573 312.5h1M1505 225.5h1M1405 179.5h1M1373 221.5h1M1500 805.5h1M1558 431.5h1M1389 788.5h1M1534 753.5h1M1388 196.5h1M1418 224.5h1M1388 901.5h1M1429 525.5h1M1426 721.5h1M1346 715.5h1M1361 773.5h1M1340 910.5h1M1355 547.5h1M1351 569.5h1M1441 575.5h1M1574 296.5h1M1362 790.5h1M1450 348.5h1M1492 293.5h1M1473 939.5h1M1312 351.5h1M1392 761.5h1M1353 821.5h1M1531 824.5h1M1313 514.5h1M1541 635.5h1M1321 994.5h1M1380 830.5h1M1546 871.5h1M1325 297.5h1M1419 216.5h1M1535 236.5h1M1381 586.5h1M1440 381.5h1M1551 273.5h1M1338 435.5h1M1487 392.5h1M1374 437.5h1M1494 608.5h1M1372 559.5h1M1438 715.5h1M1413 654.5h1M1443 799.5h1M1468 143.5h1M1413 441.5h1M1440 747.5h1M1512 497.5h1M1453 180.5h1M1483 904.5h1M1534 273.5h1M1524 915.5h1M1376 701.5h1M1513 188.5h1M1311 819.5h1M1376 573.5h1M1364 171.5h1M1380 739.5h1M1508 371.5h1M1417 455.5h1M1546 534.5h1M1434 607.5h1M1428 952.5h1M1432 495.5h1M1481 212.5h1M1526 875.5h1M1396 419.5h1M1511 400.5h1M1313 163.5h1M1574 679.5h1M1383 318.5h1M1516 521.5h1M1309 634.5h1M1414 1008.5h1M1311 273.5h1M1469 203.5h1M1372 570.5h1M1519 645.5h1M1379 511.5h1M1341 555.5h1M1539 552.5h1M1534 345.5h1M1399 151.5h1M1438 860.5h1M1524 295.5h1M1385 453.5h1M1414 808.5h1M1445 923.5h1M1423 729.5h1M1355 246.5h1M1411 267.5h1M1563 382.5h1M1314 245.5h1M1559 725.5h1M1402 855.5h1M1336 991.5h1M1541 172.5h1M1350 961.5h1M1491 844.5h1M1388 934.5h1M1518 822.5h1M1503 764.5h1M1457 781.5h1M1488 528.5h1M1357 742.5h1M1527 957.5h1M1399 770.5h1M1432 554.5h1M1454 910.5h1M1392 844.5h1M1534 882.5h1M1444 1010.5h1M1548 406.5h1M1555 628.5h1M1495 809.5h1M1333 583.5h1M1360 154.5h1M1399 613.5h1M1568 276.5h1M1330 340.5h1M1313 334.5h1M793 978.5h1M654 970.5h1M1273 994.5h1M1233 993.5h1M959 866.5h1M800 877.5h1M707 812.5h1M1055 1002.5h1M531 897.5h1M651 890.5h1M617 999.5h1M1030 976.5h1M1276 1000.5h1M809 815.5h1M901 812.5h1M621 963.5h1M1252 837.5h1M845 822.5h1M989 991.5h1M476 922.5h1M708 850.5h1M972 930.5h1M1169 911.5h1M1019 1011.5h1M1212 836.5h1M1039 950.5h1M566 1006.5h1M570 970.5h1M841 981.5h1M626 821.5h1M816 931.5h1M1034 934.5h1M559 934.5h1M920 922.5h1M685 939.5h1M1189 930.5h1M1090 929.5h1M1098 856.5h1M1017 859.5h1M646 844.5h1M955 935.5h1M1175 882.5h1M1232 940.5h1M913 902.5h1M999 1008.5h1M671 876.5h1M1078 1017.5h1M701 958.5h1M715 972.5h1M1134 1009.5h1M1097 943.5h1M676 878.5h1M822 916.5h1M762 824.5h1M793 915.5h1M955 949.5h1M638 1013.5h1M941 883.5h1M1227 831.5h1M762 950.5h1M1224 977.5h1M1083 867.5h1M896 975.5h1M549 967.5h1M956 842.5h1M1232 915.5h1M934 876.5h1M910 847.5h1M930 978.5h1M574 948.5h1M728 914.5h1M951 874.5h1M667 908.5h1M651 901.5h1M1075 1016.5h1M883 848.5h1M1175 982.5h1M533 974.5h1M758 980.5h1M786 971.5h1M1267 882.5h1M979 822.5h1M1035 983.5h1M739 833.5h1M810 842.5h1M495 981.5h1M1233 881.5h1M863 968.5h1M481 932.5h1M954 882.5h1M1276 829.5h1M939 992.5h1M485 956.5h1M1132 925.5h1M612 871.5h1M1000 944.5h1M1033 937.5h1M1219 825.5h1M491 943.5h1M734 879.5h1M581 936.5h1M888 1014.5h1M964 932.5h1M1147 987.5h1M1189 1012.5h1M697 955.5h1M813 995.5h1M731 914.5h1M929 842.5h1M1189 999.5h1M1239 859.5h1M1219 916.5h1M812 964.5h1M659 989.5h1M906 1012.5h1M1142 848.5h1M1277 933.5h1M555 922.5h1M1030 917.5h1M1157 862.5h1M1070 899.5h1M821 893.5h1" stroke="#8a7a5a" stroke-width="1" fill="none"/><path d="M711 134.5h1M760 132.5h1M1080 135.5h1M706 126.5h1M1378 551.5h1M1566 823.5h1M1409 456.5h1M1508 536.5h1M1433 166.5h1M1370 711.5h1M1473 301.5h1M1562 863.5h1M1404 751.5h1M1445 556.5h1M1437 651.5h1M1360 395.5h1M1442 521.5h1M1359 305.5h1M1540 352.5h1M1369 883.5h1M1419 957.5h1M1422 971.5h1M1518 616.5h1M1525 565.5h1M1476 965.5h1M1351 940.5h1M1382 417.5h1M1480 342.5h1M1368 860.5h1M1496 377.5h1M1345 600.5h1M1457 284.5h1M1325 542.5h1M1530 1000.5h1M1510 932.5h1M1573 367.5h1M1476 468.5h1M1385 329.5h1M1436 644.5h1M1543 391.5h1M1386 750.5h1M1465 595.5h1M1495 327.5h1M1512 228.5h1M1542 575.5h1M1386 547.5h1M1423 321.5h1M1365 778.5h1M1351 773.5h1M1339 649.5h1M1343 448.5h1M1385 810.5h1M1492 291.5h1M1431 589.5h1M1562 358.5h1M1364 292.5h1M1510 480.5h1M1368 636.5h1M1417 1010.5h1M1521 529.5h1M1468 603.5h1M1530 561.5h1M1414 958.5h1M1425 537.5h1M1366 206.5h1M1478 227.5h1M1566 946.5h1M1493 845.5h1M1567 184.5h1M1522 698.5h1M1501 641.5h1M1503 932.5h1M1504 949.5h1M1491 408.5h1M1475 810.5h1M1548 634.5h1M1429 956.5h1M1360 914.5h1M1363 764.5h1M1481 400.5h1M1439 770.5h1M1559 800.5h1M1558 825.5h1M1410 454.5h1M1368 417.5h1M1383 277.5h1M1496 671.5h1M1493 267.5h1M1349 227.5h1M723 926.5h1M1187 847.5h1M1287 949.5h1M654 860.5h1M1213 871.5h1M925 1005.5h1M1193 907.5h1M614 1013.5h1M1104 810.5h1M1102 886.5h1M984 1004.5h1M911 831.5h1M497 815.5h1M702 980.5h1M525 924.5h1M758 850.5h1M1077 922.5h1M796 848.5h1M1084 874.5h1M576 813.5h1M1063 871.5h1M852 919.5h1M1087 870.5h1M1039 866.5h1M652 1017.5h1M1054 1013.5h1M1009 1015.5h1M862 830.5h1M945 846.5h1M1210 995.5h1M606 901.5h1M1087 872.5h1M787 874.5h1M776 985.5h1M674 977.5h1M655 1011.5h1M1225 889.5h1" stroke="#b8a070" stroke-width="1" fill="none"/><path d="M1213 121h2M512 130h2M1458 397h2M1332 732h2M1541 234h2M1437 493h2M1346 896h2M1427 319h2M1481 976h2M1435 555h2M1319 692h2M1531 488h2M1517 1003h2M1405 139h2M1374 268h2M1396 868h2M1320 750h2M1316 198h2M1428 384h2M1414 213h2M1424 365h2M1364 469h2M1550 303h2M1387 468h2M1536 325h2M1356 600h2M1344 901h2M1496 1010h2M1518 620h2M1377 761h2M665 927h2M572 962h2M811 904h2M1120 998h2M931 985h2M981 920h2M1281 845h2M828 893h2M788 839h2M1237 927h2M954 809h2M1068 818h2M667 815h2M604 860h2M898 892h2M1140 967h2M744 860h2M730 891h2M534 818h2M489 965h2M586 815h2" stroke="#c0c0c0" stroke-width="2" fill="none" opacity=".6"/><path d="M1258 127h2M1327 119h2M1315 513h2M1337 379h2M1480 210h2M1357 284h2M1541 597h2M1447 667h2M1549 822h2M1408 223h2M1336 286h2M1401 555h2M1458 576h2M1354 981h2M1437 590h2M1309 909h2M1493 464h2M1527 406h2M1361 598h2M1424 247h2M1357 586h2M1529 460h2M1512 619h2M1501 952h2M1358 832h2M1559 244h2M1430 822h2M1372 222h2M1548 523h2M1523 645h2M769 949h2M1045 849h2M703 961h2M717 872h2M875 937h2M1026 975h2M683 867h2M541 827h2M962 855h2M1120 980h2M887 827h2M1008 919h2M1013 970h2M1248 897h2M689 900h2M672 947h2M1273 810h2M1237 937h2M1157 885h2M1199 1016h2" stroke="#b89a68" stroke-width="2" fill="none" opacity=".6"/><path d="M1405 119 L1306 251" stroke="#0c5a80" stroke-width="1.2" fill="none"/><path d="M1306 410 Q1330 440 1344 477 Q1356 510 1362.6 547 L1306 555" stroke="#0c5a80" stroke-width="1.2" fill="none"/><path d="M1306 557.6 L1577 560.8" stroke="#a84810" stroke-width="2.2" fill="none"/><path d="M1577 676.6 L1546 671.7 L1530 737 L1510 790 L1478.7 854.4 L1577 915.4" stroke="#0c5a80" stroke-width="1.2" fill="none"/><path d="M1577 928 L1506 1019" stroke="#0c5a80" stroke-width="1.2" fill="none"/><path d="M777.4 809 L563.6 979 L599.5 1019" stroke="#0c5a80" stroke-width="1.2" fill="none"/><path d="M839.5 809 L766.4 981.6 L771.5 1019" stroke="#2454b4" stroke-width="2.2" fill="none"/><path d="M1066 809.8 L1056.8 811 L1059.4 1019" stroke="#0c5a80" stroke-width="1.2" fill="none"/><path d="M478 127 L487 119" stroke="#0c5a80" stroke-width="1.2" fill="none"/><circle cx="1467.7" cy="123" r="3.7" fill="url(#st1)"/><circle cx="1323" cy="129.6" r="2.0" fill="url(#st1)"/><circle cx="1377" cy="138" r="2.0" fill="url(#st1)"/><circle cx="1406.6" cy="150.4" r="3.7" fill="url(#st2)"/><circle cx="1461" cy="147" r="3.0" fill="url(#st2)"/><circle cx="1552.8" cy="152" r="5.1" fill="url(#st1)"/><circle cx="1461.5" cy="167" r="2.4" fill="url(#st1)"/><circle cx="1566.5" cy="172" r="2.7" fill="url(#st1)"/><circle cx="1570" cy="180" r="2.7" fill="url(#st1)"/><circle cx="1550" cy="197.5" r="2.4" fill="url(#st2)"/><circle cx="1436" cy="209" r="3.2" fill="url(#st2)"/><circle cx="1519" cy="214.5" r="3.7" fill="url(#st2)"/><circle cx="1536" cy="233.8" r="2.2" fill="url(#st3)"/><circle cx="1529" cy="254.8" r="3.9" fill="url(#st2)"/><circle cx="1503.5" cy="248" r="2.0" fill="url(#st2)"/><circle cx="1562" cy="271" r="7.9" fill="url(#st1)"/><circle cx="1562" cy="271" r="3.2" fill="#fff"/><circle cx="1398" cy="270" r="2.0" fill="url(#st2)"/><circle cx="1326.5" cy="295" r="2.0" fill="url(#st2)"/><circle cx="1457" cy="321" r="5.1" fill="url(#st1)"/><circle cx="1515" cy="300" r="2.0" fill="url(#st1)"/><circle cx="1572" cy="336" r="2.0" fill="url(#st1)"/><circle cx="1309" cy="186" r="2.2" fill="url(#st2)"/><circle cx="1353" cy="214" r="1.6" fill="url(#st1)"/><circle cx="1412" cy="221" r="1.5" fill="url(#st1)"/><circle cx="1349" cy="172" r="1.5" fill="url(#st1)"/><circle cx="1406" cy="178.5" r="1.5" fill="url(#st1)"/><circle cx="1384" cy="183.5" r="1.5" fill="url(#st2)"/><circle cx="1328" cy="254.5" r="1.5" fill="url(#st1)"/><circle cx="1318" cy="263.5" r="1.5" fill="url(#st1)"/><circle cx="1393" cy="255.5" r="1.5" fill="url(#st1)"/><circle cx="1437" cy="269.5" r="1.5" fill="url(#st1)"/><circle cx="1542.6" cy="384" r="5.6" fill="url(#st1)"/><circle cx="1571" cy="399" r="5.1" fill="url(#st2)"/><circle cx="1466.5" cy="389.5" r="3.7" fill="url(#st2)"/><circle cx="1432.7" cy="397" r="2.4" fill="url(#st1)"/><circle cx="1478.5" cy="418" r="9.2" fill="url(#st2)"/><circle cx="1330" cy="421" r="3.7" fill="url(#st2)"/><circle cx="1531" cy="438.5" r="2.4" fill="url(#st1)"/><circle cx="1376" cy="464" r="3.7" fill="url(#st2)"/><circle cx="1447.7" cy="461" r="2.7" fill="url(#st2)"/><circle cx="1556" cy="459" r="3.9" fill="url(#st2)"/><circle cx="1537" cy="499.7" r="2.1" fill="url(#st2)"/><circle cx="1372.5" cy="515" r="3.7" fill="url(#st1)"/><circle cx="1395.5" cy="521.4" r="5.6" fill="url(#st1)"/><circle cx="1456" cy="529" r="3.2" fill="url(#st2)"/><circle cx="1497.5" cy="527" r="6.1" fill="url(#st1)"/><circle cx="1576" cy="369" r="3.7" fill="url(#st1)"/><circle cx="1465" cy="356.5" r="1.7" fill="url(#st1)"/><circle cx="1491" cy="357" r="1.5" fill="url(#st1)"/><circle cx="1512" cy="360" r="1.6" fill="url(#st1)"/><circle cx="1562" cy="366" r="1.8" fill="url(#st1)"/><circle cx="1505.7" cy="419" r="1.5" fill="url(#st1)"/><circle cx="1410" cy="424.5" r="1.5" fill="url(#st1)"/><circle cx="1450.5" cy="358" r="1.5" fill="url(#st1)"/><circle cx="1538.5" cy="489.5" r="1.5" fill="url(#st2)"/><circle cx="1334.7" cy="573.7" r="3.7" fill="url(#st1)"/><circle cx="1510" cy="572.6" r="4.9" fill="url(#st3)"/><circle cx="1407" cy="586" r="3.7" fill="url(#st1)"/><circle cx="1478.7" cy="598.7" r="3.7" fill="url(#st2)"/><circle cx="1476.5" cy="604" r="4.4" fill="url(#st1)"/><circle cx="1385" cy="614.6" r="6.1" fill="url(#st1)"/><circle cx="1354" cy="603.6" r="2.0" fill="url(#st1)"/><circle cx="1449" cy="610.6" r="2.0" fill="url(#st2)"/><circle cx="1480" cy="639" r="2.7" fill="url(#st2)"/><circle cx="1406.4" cy="649" r="3.2" fill="url(#st2)"/><circle cx="1472.5" cy="654" r="2.1" fill="url(#st2)"/><circle cx="1353" cy="667.5" r="3.2" fill="url(#st2)"/><circle cx="1454" cy="668" r="4.9" fill="url(#st1)"/><circle cx="1424" cy="682" r="3.2" fill="url(#st1)"/><circle cx="1412.6" cy="681" r="2.1" fill="url(#st2)"/><circle cx="1485" cy="686" r="3.7" fill="url(#st3)"/><circle cx="1550.6" cy="692" r="11.6" fill="url(#st2)"/><circle cx="1377.4" cy="702" r="6.3" fill="url(#st2)"/><circle cx="1408.8" cy="698.5" r="2.1" fill="url(#st2)"/><circle cx="1344.7" cy="724.8" r="8.5" fill="url(#st1)"/><circle cx="1332.5" cy="727.7" r="3.7" fill="url(#st2)"/><circle cx="1461.7" cy="746.5" r="4.4" fill="url(#st2)"/><circle cx="1429" cy="757" r="5.1" fill="url(#st2)"/><circle cx="1437" cy="775" r="8.8" fill="url(#st1)"/><circle cx="1431.6" cy="772" r="2.4" fill="url(#st2)"/><circle cx="1496.5" cy="644" r="1.7" fill="url(#st1)"/><circle cx="1510.5" cy="631.7" r="1.6" fill="url(#st1)"/><circle cx="1460.5" cy="644" r="1.6" fill="url(#st3)"/><circle cx="1397" cy="672.7" r="2.2" fill="url(#st3)"/><circle cx="1418.5" cy="620.5" r="1.6" fill="url(#st3)"/><circle cx="1321.5" cy="639.5" r="1.6" fill="url(#st2)"/><circle cx="1529" cy="705.5" r="1.6" fill="url(#st2)"/><circle cx="1326" cy="577" r="1.5" fill="url(#st2)"/><circle cx="1462" cy="798.4" r="2.7" fill="url(#st1)"/><circle cx="1499.7" cy="796" r="3.2" fill="url(#st2)"/><circle cx="1515" cy="810" r="3.7" fill="url(#st2)"/><circle cx="1482" cy="818.7" r="3.9" fill="url(#st2)"/><circle cx="1343.8" cy="826" r="2.4" fill="url(#st3)"/><circle cx="1387" cy="832" r="2.0" fill="url(#st2)"/><circle cx="1544" cy="846.6" r="6.3" fill="url(#st2)"/><circle cx="1537.8" cy="865.6" r="5.1" fill="url(#st3)"/><circle cx="1433.8" cy="875" r="4.4" fill="url(#st2)"/><circle cx="1472" cy="905" r="3.2" fill="url(#st2)"/><circle cx="1357.5" cy="904.8" r="3.2" fill="url(#st2)"/><circle cx="1374.7" cy="908.8" r="2.4" fill="url(#st2)"/><circle cx="1458" cy="919.4" r="2.0" fill="url(#st3)"/><circle cx="1430.5" cy="936.6" r="7.3" fill="url(#st3)"/><circle cx="1553.5" cy="926.7" r="3.9" fill="url(#st1)"/><circle cx="1353" cy="961.4" r="3.7" fill="url(#st2)"/><circle cx="1338" cy="971.4" r="7.6" fill="url(#st2)"/><circle cx="1391" cy="996.4" r="6.3" fill="url(#st2)"/><circle cx="1500.8" cy="986.4" r="4.9" fill="url(#st1)"/><circle cx="1531" cy="971" r="2.1" fill="url(#st2)"/><circle cx="1496" cy="838" r="1.6" fill="url(#st3)"/><circle cx="1513" cy="803" r="1.6" fill="url(#st1)"/><circle cx="1368.5" cy="821" r="1.5" fill="url(#st1)"/><circle cx="1388.5" cy="893.5" r="1.5" fill="url(#st1)"/><circle cx="1333" cy="898.7" r="1.5" fill="url(#st1)"/><circle cx="1568.5" cy="986.7" r="1.5" fill="url(#st2)"/><circle cx="486.4" cy="813.6" r="2.2" fill="url(#st2)"/><circle cx="674.5" cy="826.7" r="3.7" fill="url(#st1)"/><circle cx="741" cy="812.7" r="3.2" fill="url(#st2)"/><circle cx="819" cy="826" r="5.9" fill="url(#st1)"/><circle cx="819" cy="826" r="2.4" fill="#fff"/><circle cx="844.7" cy="832" r="2.6" fill="url(#st1)"/><circle cx="857" cy="847" r="2.0" fill="url(#st1)"/><circle cx="599" cy="877" r="3.7" fill="url(#st3)"/><circle cx="758.8" cy="878.8" r="3.7" fill="url(#st2)"/><circle cx="485" cy="914.4" r="3.7" fill="url(#st1)"/><circle cx="516.6" cy="917" r="2.1" fill="url(#st1)"/><circle cx="476" cy="858" r="3.7" fill="url(#st2)"/><circle cx="737" cy="910" r="2.0" fill="url(#st1)"/><circle cx="858" cy="916" r="4.4" fill="url(#st1)"/><circle cx="725.5" cy="932" r="2.0" fill="url(#st2)"/><circle cx="547" cy="958.8" r="7.6" fill="url(#st1)"/><circle cx="547" cy="958.8" r="3.1" fill="#fff"/><circle cx="883.5" cy="946" r="4.4" fill="url(#st2)"/><circle cx="592" cy="983" r="3.7" fill="url(#st2)"/><circle cx="765" cy="982" r="11.6" fill="url(#st2)"/><circle cx="765" cy="982" r="2.0" fill="#fff"/><circle cx="765" cy="982" r="2.4" fill="#fff"/><circle cx="842.5" cy="981" r="3.2" fill="url(#st1)"/><circle cx="537" cy="1010" r="3.7" fill="url(#st1)"/><circle cx="719" cy="1012" r="2.1" fill="url(#st2)"/><circle cx="835" cy="1015.5" r="2.4" fill="url(#st1)"/><circle cx="870.8" cy="998" r="2.0" fill="url(#st1)"/><circle cx="776" cy="864" r="1.8" fill="url(#st1)"/><circle cx="778" cy="904" r="1.6" fill="url(#st1)"/><circle cx="498" cy="852" r="1.6" fill="url(#st3)"/><circle cx="556" cy="905" r="1.6" fill="url(#st1)"/><circle cx="475" cy="960" r="2.7" fill="url(#st2)"/><circle cx="539" cy="968" r="1.6" fill="url(#st2)"/><circle cx="1032.7" cy="813" r="3.7" fill="url(#st2)"/><circle cx="1083.5" cy="818" r="3.7" fill="url(#st1)"/><circle cx="950" cy="843.8" r="5.1" fill="url(#st1)"/><circle cx="1012.4" cy="840" r="2.7" fill="url(#st1)"/><circle cx="1005.4" cy="863.4" r="3.7" fill="url(#st2)"/><circle cx="959" cy="875.7" r="5.1" fill="url(#st2)"/><circle cx="930.8" cy="884" r="2.1" fill="url(#st2)"/><circle cx="1118.5" cy="839.8" r="2.1" fill="url(#st1)"/><circle cx="1144" cy="865" r="3.7" fill="url(#st2)"/><circle cx="1106" cy="892.5" r="2.7" fill="url(#st2)"/><circle cx="1225" cy="902.4" r="3.9" fill="url(#st2)"/><circle cx="1262.6" cy="898.4" r="2.7" fill="url(#st2)"/><circle cx="1255" cy="899.5" r="2.1" fill="url(#st2)"/><circle cx="1268" cy="884" r="2.1" fill="url(#st2)"/><circle cx="1158" cy="916" r="3.7" fill="url(#st1)"/><circle cx="1216.5" cy="923.6" r="7.9" fill="url(#st1)"/><circle cx="1216.5" cy="923.6" r="3.2" fill="#fff"/><circle cx="961.6" cy="937.4" r="2.7" fill="url(#st1)"/><circle cx="1005.8" cy="937.4" r="5.1" fill="url(#st2)"/><circle cx="998" cy="931" r="1.5" fill="url(#st2)"/><circle cx="907" cy="940" r="4.4" fill="url(#st1)"/><circle cx="884" cy="946" r="4.4" fill="url(#st2)"/><circle cx="1160" cy="955" r="3.7" fill="url(#st2)"/><circle cx="1233" cy="977.6" r="5.1" fill="url(#st1)"/><circle cx="1233" cy="977.6" r="2.1" fill="#fff"/><circle cx="1296.7" cy="979" r="2.4" fill="url(#st1)"/><circle cx="904.5" cy="982.7" r="3.7" fill="url(#st1)"/><circle cx="890.5" cy="987.5" r="2.1" fill="url(#st1)"/><circle cx="990" cy="983" r="2.1" fill="url(#st3)"/><circle cx="1137.7" cy="997.5" r="7.6" fill="url(#st2)"/><circle cx="979" cy="1004.8" r="3.7" fill="url(#st2)"/><circle cx="890" cy="1016" r="2.1" fill="url(#st1)"/><circle cx="1092.5" cy="851.5" r="1.6" fill="url(#st1)"/><circle cx="1107.5" cy="844" r="1.5" fill="url(#st1)"/><circle cx="1249" cy="887" r="1.5" fill="url(#st1)"/><circle cx="500" cy="120.5" r="2.7" fill="url(#st2)"/><circle cx="552" cy="133" r="2.4" fill="url(#st1)"/><circle cx="625" cy="128" r="1.7" fill="url(#st1)"/><circle cx="900" cy="126" r="2.1" fill="url(#st1)"/><circle cx="1087" cy="120" r="3.7" fill="url(#st2)"/><circle cx="938" cy="131" r="1.5" fill="url(#st1)"/><circle cx="1018" cy="121" r="1.5" fill="url(#st1)"/><circle cx="1178" cy="130.5" r="1.5" fill="url(#st1)"/><circle cx="1065" cy="132" r="1.5" fill="url(#st1)"/><circle cx="540" cy="123.5" r="1.5" fill="url(#st1)"/><circle cx="1534.5" cy="211.7" r="2.6" fill="none" stroke="#2a2a2a" stroke-width=".8"/><circle cx="1532.9" cy="209.89999999999998" r="1.1" fill="#2030c0"/><circle cx="1536.3" cy="213.5" r="1.2" fill="#e06818"/><circle cx="1534.5" cy="211.7" r="1.3" fill="#fff"/><circle cx="1376" cy="272" r="2.6" fill="none" stroke="#2a2a2a" stroke-width=".8"/><circle cx="1374.4" cy="270.2" r="1.1" fill="#2030c0"/><circle cx="1377.8" cy="273.8" r="1.2" fill="#e06818"/><circle cx="1376" cy="272" r="1.3" fill="#fff"/><circle cx="1469" cy="443" r="2.6" fill="none" stroke="#2a2a2a" stroke-width=".8"/><circle cx="1467.4" cy="441.2" r="1.1" fill="#2030c0"/><circle cx="1470.8" cy="444.8" r="1.2" fill="#e06818"/><circle cx="1469" cy="443" r="1.3" fill="#fff"/><circle cx="1399" cy="534" r="2.6" fill="none" stroke="#2a2a2a" stroke-width=".8"/><circle cx="1397.4" cy="532.2" r="1.1" fill="#2030c0"/><circle cx="1400.8" cy="535.8" r="1.2" fill="#e06818"/><circle cx="1399" cy="534" r="1.3" fill="#fff"/><circle cx="1568" cy="603.6" r="2.6" fill="none" stroke="#2a2a2a" stroke-width=".8"/><circle cx="1566.4" cy="601.8000000000001" r="1.1" fill="#2030c0"/><circle cx="1569.8" cy="605.4" r="1.2" fill="#e06818"/><circle cx="1568" cy="603.6" r="1.3" fill="#fff"/><circle cx="1370" cy="805.5" r="2.6" fill="none" stroke="#2a2a2a" stroke-width=".8"/><circle cx="1368.4" cy="803.7" r="1.1" fill="#2030c0"/><circle cx="1371.8" cy="807.3" r="1.2" fill="#e06818"/><circle cx="1370" cy="805.5" r="1.3" fill="#fff"/><circle cx="1476" cy="890.6" r="2.6" fill="none" stroke="#2a2a2a" stroke-width=".8"/><circle cx="1474.4" cy="888.8000000000001" r="1.1" fill="#2030c0"/><circle cx="1477.8" cy="892.4" r="1.2" fill="#e06818"/><circle cx="1476" cy="890.6" r="1.3" fill="#fff"/><circle cx="1438" cy="937.7" r="2.6" fill="none" stroke="#2a2a2a" stroke-width=".8"/><circle cx="1436.4" cy="935.9000000000001" r="1.1" fill="#2030c0"/><circle cx="1439.8" cy="939.5" r="1.2" fill="#e06818"/><circle cx="1438" cy="937.7" r="1.3" fill="#fff"/><circle cx="1555" cy="928" r="2.6" fill="none" stroke="#2a2a2a" stroke-width=".8"/><circle cx="1553.4" cy="926.2" r="1.1" fill="#2030c0"/><circle cx="1556.8" cy="929.8" r="1.2" fill="#e06818"/><circle cx="1555" cy="928" r="1.3" fill="#fff"/><circle cx="1404" cy="1003.4" r="2.6" fill="none" stroke="#2a2a2a" stroke-width=".8"/><circle cx="1402.4" cy="1001.6" r="1.1" fill="#2030c0"/><circle cx="1405.8" cy="1005.1999999999999" r="1.2" fill="#e06818"/><circle cx="1404" cy="1003.4" r="1.3" fill="#fff"/><circle cx="610" cy="890" r="2.6" fill="none" stroke="#2a2a2a" stroke-width=".8"/><circle cx="608.4" cy="888.2" r="1.1" fill="#2030c0"/><circle cx="611.8" cy="891.8" r="1.2" fill="#e06818"/><circle cx="610" cy="890" r="1.3" fill="#fff"/><circle cx="785" cy="970" r="2.6" fill="none" stroke="#2a2a2a" stroke-width=".8"/><circle cx="783.4" cy="968.2" r="1.1" fill="#2030c0"/><circle cx="786.8" cy="971.8" r="1.2" fill="#e06818"/><circle cx="785" cy="970" r="1.3" fill="#fff"/><circle cx="762.5" cy="994.7" r="2.6" fill="none" stroke="#2a2a2a" stroke-width=".8"/><circle cx="760.9" cy="992.9000000000001" r="1.1" fill="#2030c0"/><circle cx="764.3" cy="996.5" r="1.2" fill="#e06818"/><circle cx="762.5" cy="994.7" r="1.3" fill="#fff"/><circle cx="1022.6" cy="853" r="2.6" fill="none" stroke="#2a2a2a" stroke-width=".8"/><circle cx="1021.0" cy="851.2" r="1.1" fill="#2030c0"/><circle cx="1024.4" cy="854.8" r="1.2" fill="#e06818"/><circle cx="1022.6" cy="853" r="1.3" fill="#fff"/><circle cx="903" cy="961" r="2.6" fill="none" stroke="#2a2a2a" stroke-width=".8"/><circle cx="901.4" cy="959.2" r="1.1" fill="#2030c0"/><circle cx="904.8" cy="962.8" r="1.2" fill="#e06818"/><circle cx="903" cy="961" r="1.3" fill="#fff"/><circle cx="1213" cy="958.6" r="2.6" fill="none" stroke="#2a2a2a" stroke-width=".8"/><circle cx="1211.4" cy="956.8000000000001" r="1.1" fill="#2030c0"/><circle cx="1214.8" cy="960.4" r="1.2" fill="#e06818"/><circle cx="1213" cy="958.6" r="1.3" fill="#fff"/><circle cx="909" cy="941.5" r="2.6" fill="none" stroke="#2a2a2a" stroke-width=".8"/><circle cx="907.4" cy="939.7" r="1.1" fill="#2030c0"/><circle cx="910.8" cy="943.3" r="1.2" fill="#e06818"/><circle cx="909" cy="941.5" r="1.3" fill="#fff"/><circle cx="742" cy="813.5" r="2.6" fill="none" stroke="#2a2a2a" stroke-width=".8"/><circle cx="740.4" cy="811.7" r="1.1" fill="#2030c0"/><circle cx="743.8" cy="815.3" r="1.2" fill="#e06818"/><circle cx="742" cy="813.5" r="1.3" fill="#fff"/><circle cx="1034" cy="814" r="2.6" fill="none" stroke="#2a2a2a" stroke-width=".8"/><circle cx="1032.4" cy="812.2" r="1.1" fill="#2030c0"/><circle cx="1035.8" cy="815.8" r="1.2" fill="#e06818"/><circle cx="1034" cy="814" r="1.3" fill="#fff"/><path d="M1442 313.7 L1445 315.7 L1448 313.7 L1445 319.2Z" fill="#3848e0"/><path d="M1528 432 L1531 434 L1534 432 L1531 437.5Z" fill="#3848e0"/><path d="M1475.5 412.5 L1478.5 414.5 L1481.5 412.5 L1478.5 418.0Z" fill="#d890e0"/><path d="M1388 990 L1391 992 L1394 990 L1391 995.5Z" fill="#b080e0"/><path d="M1480 982 L1483 984 L1486 982 L1483 987.5Z" fill="#3848e0"/><circle cx="1483" cy="989.5" r="1.5" fill="#e09030"/><path d="M958.6 931 L961.6 933 L964.6 931 L961.6 936.5Z" fill="#3848e0"/><path d="M1059 937 L1062 939 L1065 937 L1062 942.5Z" fill="#4838c0"/><g transform="translate(1532 201.7)" fill="#f01818"><path d="M0 0 Q-1 -4 -4.5 -5.5 Q1 -6.5 3 -2Z"/><path d="M0 0 Q4 -1 5.5 -4.5 Q6.5 1 2 3Z"/><path d="M0 0 Q1 4 4.5 5.5 Q-1 6.5 -3 2Z"/><path d="M0 0 Q-4 1 -5.5 4.5 Q-6.5 -1 -2 -3Z"/><circle r="2.4"/></g><g transform="translate(1352.6 430)" fill="#f01818"><path d="M0 0 Q-1 -4 -4.5 -5.5 Q1 -6.5 3 -2Z"/><path d="M0 0 Q4 -1 5.5 -4.5 Q6.5 1 2 3Z"/><path d="M0 0 Q1 4 4.5 5.5 Q-1 6.5 -3 2Z"/><path d="M0 0 Q-4 1 -5.5 4.5 Q-6.5 -1 -2 -3Z"/><circle r="2.4"/><circle r="1.8" fill="#ffd0d0"/></g><g transform="translate(1322.8 500.8)" fill="#f01818"><path d="M0 0 Q-1 -4 -4.5 -5.5 Q1 -6.5 3 -2Z"/><path d="M0 0 Q4 -1 5.5 -4.5 Q6.5 1 2 3Z"/><path d="M0 0 Q1 4 4.5 5.5 Q-1 6.5 -3 2Z"/><path d="M0 0 Q-4 1 -5.5 4.5 Q-6.5 -1 -2 -3Z"/><circle r="2.4"/></g><ellipse cx="1403" cy="333" rx="4.6" ry="2.5" fill="#f00808"/><ellipse cx="805" cy="969.8" rx="4.6" ry="2.5" fill="#f00808"/><ellipse cx="1157" cy="869" rx="4.6" ry="2.5" fill="#f00808"/><ellipse cx="921.6" cy="1018" rx="4.6" ry="2.5" fill="#f00808"/><ellipse cx="1296" cy="1007" rx="4.6" ry="2.5" fill="#f00808"/><ellipse cx="1535" cy="1018.5" rx="4.6" ry="2.5" fill="#f00808"/><ellipse cx="1300" cy="1007" rx="3" ry="2.5" fill="#f00808"/><path d="M1307 586 l3 -3 -1 7Z" fill="#e01010"/><circle cx="1269.8" cy="954.4" r="4.3" fill="#1848d0" stroke="#18a828" stroke-width="2.2"/></svg>
<span class="t" style="left:1361px;top:423.0px;font-size:13px;line-height:16px;color:#f08080;letter-spacing:-0.462px;">N2268</span>
<span class="t" style="left:1307px;top:474.0px;font-size:13px;line-height:16px;color:#f08080;letter-spacing:-0.230px;">300</span>
<span class="t" style="left:1375px;top:552.0px;font-size:13px;line-height:16px;color:#a84a14;letter-spacing:-0.607px;">Meridian</span>
<span class="t" style="left:571px;top:968.5px;font-size:14px;line-height:18px;color:#2c6cd0;letter-spacing:-0.546px;">Ursa Minor</span>
<span class="t" style="left:1071.5px;top:821.0px;font-size:14px;line-height:18px;color:#2c6cd0;letter-spacing:-0.663px;">Camelopardalis</span>
<span class="t" style="left:490px;top:987.5px;font-size:15px;line-height:19px;color:#f8f860;letter-spacing:0.096px;">3 fps</span>
<span class="t" style="left:568px;top:123.5px;font-size:12px;line-height:15px;color:#d05010;">N</span>
<div style="left:1577px;top:119px;width:343px;height:901px;background:#f0f0f0"></div>
<div style="left:1577px;top:119px;width:2px;height:900px;background:#fdfdfd"></div>
<div style="left:1581px;top:119px;width:2px;height:900px;background:linear-gradient(90deg,#a8a8a8,#808080)"></div>
<div style="left:1583px;top:119px;width:334px;height:1px;background:#fff"></div>
<span class="t" style="left:1585px;top:122.0px;font-size:11px;line-height:14px;letter-spacing:-0.121px;">Autoguider</span>
<svg class="a" style="left:1889px;top:123px" width="26" height="12" viewBox="0 0 26 12"><g fill="none" stroke="#000" stroke-width="1.2"><rect x="3.5" y="1.5" width="6" height="5"/><rect x="1.5" y="4.5" width="6" height="5" fill="#f0f0f0"/><path d="M3.5 2.3 H9.5 M1.5 5.3 H7.5" stroke-width="1.8"/></g><path d="M15 1.5 L23 9.5 M23 1.5 L15 9.5" stroke="#000" stroke-width="1.7"/></svg>
<div style="left:1583px;top:138px;width:337px;height:882px;background:#b0c4de"></div>
<div style="left:1583px;top:138px;width:337px;height:1px;background:#a0a8b8"></div>
<span class="t" style="left:1693px;top:153.0px;font-size:11px;line-height:14px;letter-spacing:-0.543px;">ASCOM Camera</span>
<div class="btn" style="left:1776px;top:150px;width:30px;height:20px;"></div>
<svg class="a" style="left:1776px;top:150px" width="30" height="20" viewBox="0 0 30 20"><g transform="translate(14.5 9.5)" fill="#222"><rect x="-1.7" y="-8" width="3.4" height="4" transform="rotate(0)"/><rect x="-1.7" y="-8" width="3.4" height="4" transform="rotate(45)"/><rect x="-1.7" y="-8" width="3.4" height="4" transform="rotate(90)"/><rect x="-1.7" y="-8" width="3.4" height="4" transform="rotate(135)"/><rect x="-1.7" y="-8" width="3.4" height="4" transform="rotate(180)"/><rect x="-1.7" y="-8" width="3.4" height="4" transform="rotate(225)"/><rect x="-1.7" y="-8" width="3.4" height="4" transform="rotate(270)"/><rect x="-1.7" y="-8" width="3.4" height="4" transform="rotate(315)"/><circle r="5.6"/><circle r="2.4" fill="#f0f0f0"/></g></svg>
<div class="btn" style="left:1628px;top:176px;width:75px;height:20px;"></div>
<span class="t" style="left:1645.0px;top:178.5px;font-size:11px;line-height:14px;letter-spacing:-0.138px;">Connect</span>
<div class="btn" style="left:1709px;top:176px;width:82px;height:20px;"></div>
<span class="t" style="left:1714.0px;top:178.5px;font-size:11px;line-height:14px;letter-spacing:0.005px;">Temp. Setup...</span>
<div class="btn" style="left:1797px;top:176px;width:75px;height:20px;"></div>
<span class="t" style="left:1808.0px;top:178.5px;font-size:11px;line-height:14px;letter-spacing:-0.241px;">Disconnect</span>
<span class="t" style="left:1593px;top:202.0px;font-size:11px;line-height:14px;letter-spacing:-0.035px;">Status:</span>
<span class="t" style="left:1641px;top:202.0px;font-size:11px;line-height:14px;color:#0a8a0a;font-weight:bold;letter-spacing:0.597px;">Ready</span>
<span class="t" style="left:1593px;top:220.0px;font-size:11px;line-height:14px;letter-spacing:-0.119px;">Progress:</span>
<div style="left:1641px;top:216px;width:230px;height:21px;background:#f0f0f0;border:1px solid;border-color:#a0a0a0 #fff #fff #a0a0a0"></div>
<span class="t" style="left:1878px;top:220.0px;font-size:11px;line-height:14px;letter-spacing:0.551px;">0%</span>
<span class="t" style="left:1593px;top:238.0px;font-size:11px;line-height:14px;letter-spacing:0.041px;">Max:</span>
<span class="t" style="left:1641px;top:238.0px;font-size:11px;line-height:14px;letter-spacing:-0.317px;">19276</span>
<span class="t" style="left:1593px;top:258.0px;font-size:11px;line-height:14px;letter-spacing:-0.023px;">No temperature control</span>
<div style="left:1595px;top:278px;width:310px;height:560px;background:#f0f0f0;border:2px solid;border-color:#fff #696969 #696969 #fff;box-shadow:inset -1px -1px 0 #a0a0a0"></div>
<div style="left:1595px;top:278px;width:310px;height:1px;background:#a0a0a0"></div>
<div style="left:1595px;top:279px;width:310px;height:1px;background:#696969"></div>
<div style="left:1595px;top:278px;width:1px;height:560px;background:#a0a0a0"></div>
<div style="left:1596px;top:279px;width:1px;height:558px;background:#696969"></div>
<div style="left:1598px;top:300px;width:304px;height:1px;background:#fff"></div>
<div style="left:1668px;top:282px;width:77px;height:19px;background:#f0f0f0;border:1px solid;border-color:#fff #696969 #fff #fff;box-shadow:inset -1px 0 0 #a0a0a0;border-radius:2px 2px 0 0"></div>
<span class="t" style="left:1678.5px;top:283.5px;font-size:11px;line-height:14px;letter-spacing:-0.226px;">Focus Tools</span>
<div style="left:1597px;top:280px;width:72px;height:22px;background:#f0f0f0;border:1px solid;border-color:#fff #696969 #f0f0f0 #fff;box-shadow:inset -1px 0 0 #a0a0a0;border-radius:2px 2px 0 0"></div>
<span class="t" style="left:1608.5px;top:283.0px;font-size:11px;line-height:14px;letter-spacing:-0.060px;">Autoguide</span>
<div class="btn" style="left:1609px;top:311px;width:75px;height:20px;"></div>
<span class="t" style="left:1619.0px;top:313.5px;font-size:11px;line-height:14px;letter-spacing:-0.104px;">Take Photo</span>
<div class="btn" style="left:1690px;top:311px;width:75px;height:20px;"></div>
<span class="t" style="left:1702.5px;top:313.5px;font-size:11px;line-height:14px;letter-spacing:-0.060px;">Autoguide</span>
<div class="btn" style="left:1771px;top:311px;width:75px;height:20px;"></div>
<span class="t" style="left:1790.5px;top:313.5px;font-size:11px;line-height:14px;letter-spacing:-0.179px;">Graphs</span>
<div class="btn" style="left:1609px;top:337px;width:75px;height:20px;"></div>
<span class="t" style="left:1632.5px;top:339.5px;font-size:11px;line-height:14px;letter-spacing:0.141px;">Abort</span>
<div class="btn" style="left:1690px;top:337px;width:75px;height:20px;"></div>
<span class="t" style="left:1707.0px;top:339.5px;font-size:11px;line-height:14px;letter-spacing:0.260px;">Setup...</span>
<div class="btn" style="left:1771px;top:337px;width:75px;height:20px;"></div>
<span class="t" style="left:1780.5px;top:339.5px;font-size:11px;line-height:14px;letter-spacing:0.151px;">Calibrate...</span>
<span class="t" style="left:1608.5px;top:363.0px;font-size:11px;line-height:14px;letter-spacing:-0.058px;">Guide error:</span>
<span class="t" style="left:1672.5px;top:363.0px;font-size:11px;line-height:14px;letter-spacing:0.229px;">-0.04, -0.50</span>
<span class="t" style="left:1747.5px;top:363.0px;font-size:11px;line-height:14px;letter-spacing:-0.416px;">HFD:</span>
<span class="t" style="left:1822px;top:363.0px;font-size:11px;line-height:14px;letter-spacing:0.095px;">21,87</span>
<span class="t" style="left:1608.5px;top:382.0px;font-size:11px;line-height:14px;letter-spacing:-0.038px;">Guide rate:</span>
<span class="t" style="left:1672.5px;top:382.0px;font-size:11px;line-height:14px;letter-spacing:-0.132px;">0,2 Hz</span>
<div class="grp" style="left:1609px;top:401px;width:281px;height:423px;"></div>
<div style="left:1872px;top:403px;width:17px;height:420px;background-image:repeating-conic-gradient(#fff 0 25%,#f0f0f0 0 50%);background-size:2px 2px"></div>
<div class="btn" style="left:1872px;top:403px;width:17px;height:17px;"></div>
<svg class="a" style="left:1877px;top:409px" width="7" height="4" viewBox="0 0 7 4"><path d="M0 4 L3.5 0 L7 4Z" fill="#000"/></svg>
<div class="btn" style="left:1872px;top:420px;width:17px;height:256px;"></div>
<div class="btn" style="left:1872px;top:806px;width:17px;height:17px;"></div>
<svg class="a" style="left:1877px;top:813px" width="7" height="4" viewBox="0 0 7 4"><path d="M0 0 L3.5 4 L7 0Z" fill="#000"/></svg>
<span class="t" style="left:1619px;top:414.0px;font-size:11px;line-height:14px;letter-spacing:-0.098px;">Exposure time:</span>
<div class="sunk" style="left:1704px;top:412px;width:117px;height:18px;"></div>
<span class="t" style="left:1708px;top:414.0px;font-size:11px;line-height:14px;letter-spacing:-0.119px;">3,000 seconds</span>
<div class="btn" style="left:1804px;top:414px;width:15px;height:7px;"></div>
<div class="btn" style="left:1804px;top:421px;width:15px;height:7px;"></div>
<svg class="a" style="left:1809px;top:415.5px" width="5" height="3" viewBox="0 0 5 3"><path d="M0 3 L2.5 0 L5 3Z" fill="#000"/></svg>
<svg class="a" style="left:1809px;top:423.0px" width="5" height="3" viewBox="0 0 5 3"><path d="M0 0 L2.5 3 L5 0Z" fill="#000"/></svg>
<span class="t" style="left:1619px;top:438.5px;font-size:11px;line-height:14px;letter-spacing:-0.059px;">Exposure delay:</span>
<div class="sunk" style="left:1704px;top:437px;width:111px;height:18px;"></div>
<span class="t" style="left:1708px;top:439.0px;font-size:11px;line-height:14px;letter-spacing:-0.119px;">1,00 seconds</span>
<div class="btn" style="left:1798px;top:439px;width:15px;height:7px;"></div>
<div class="btn" style="left:1798px;top:446px;width:15px;height:7px;"></div>
<svg class="a" style="left:1803px;top:440.5px" width="5" height="3" viewBox="0 0 5 3"><path d="M0 3 L2.5 0 L5 3Z" fill="#000"/></svg>
<svg class="a" style="left:1803px;top:448.0px" width="5" height="3" viewBox="0 0 5 3"><path d="M0 0 L2.5 3 L5 0Z" fill="#000"/></svg>
<span class="t" style="left:1619px;top:464.0px;font-size:11px;line-height:14px;letter-spacing:-0.219px;">Binning:</span>
<div class="sunk" style="left:1704px;top:462px;width:46px;height:18px;"></div>
<span class="t" style="left:1708px;top:464.0px;font-size:11px;line-height:14px;letter-spacing:0.089px;">2x2</span>
<div class="btn" style="left:1733px;top:464px;width:15px;height:14px;"></div>
<svg class="a" style="left:1737px;top:469.0px" width="7" height="4" viewBox="0 0 7 4"><path d="M0 0 L3.5 4 L7 0Z" fill="#000"/></svg>
<span class="t" style="left:1619px;top:486.0px;font-size:11px;line-height:14px;letter-spacing:-0.140px;">Frame:</span>
<div class="sunk" style="left:1704px;top:484px;width:73px;height:18px;"></div>
<span class="t" style="left:1708px;top:486.0px;font-size:11px;line-height:14px;letter-spacing:0.030px;">Light</span>
<div class="btn" style="left:1760px;top:486px;width:15px;height:14px;"></div>
<svg class="a" style="left:1764px;top:491.0px" width="7" height="4" viewBox="0 0 7 4"><path d="M0 0 L3.5 4 L7 0Z" fill="#000"/></svg>
<span class="t" style="left:1619px;top:510.0px;font-size:11px;line-height:14px;letter-spacing:-0.059px;">Reduction:</span>
<div class="sunk" style="left:1704px;top:508px;width:100px;height:18px;"></div>
<span class="t" style="left:1708px;top:510.0px;font-size:11px;line-height:14px;letter-spacing:-0.210px;">Full Calibration</span>
<div class="btn" style="left:1787px;top:510px;width:15px;height:14px;"></div>
<svg class="a" style="left:1791px;top:515.0px" width="7" height="4" viewBox="0 0 7 4"><path d="M0 0 L3.5 4 L7 0Z" fill="#000"/></svg>
<span class="t" style="left:1619px;top:534.0px;font-size:11px;line-height:14px;letter-spacing:-0.105px;">Group:</span>
<div class="sunk" style="left:1704px;top:532px;width:84px;height:18px;"></div>
<span class="t" style="left:1708px;top:534.0px;font-size:11px;line-height:14px;letter-spacing:-0.121px;">Autoguider</span>
<div class="btn" style="left:1771px;top:534px;width:15px;height:14px;"></div>
<svg class="a" style="left:1775px;top:539.0px" width="7" height="4" viewBox="0 0 7 4"><path d="M0 0 L3.5 4 L7 0Z" fill="#000"/></svg>
<div class="btn" style="left:1704px;top:553px;width:141px;height:20px;"></div>
<span class="t" style="left:1708.5px;top:555.5px;font-size:11px;line-height:14px;letter-spacing:-0.009px;">Image Calibration Library...</span>
<div class="chk" style="left:1620px;top:583px;width:12px;height:12px;"></div>
<span class="t" style="left:1637px;top:582.0px;font-size:11px;line-height:14px;letter-spacing:-0.220px;">Subframe On</span>
<div class="btn" style="left:1788px;top:579px;width:75px;height:20px;"></div>
<span class="t" style="left:1809.5px;top:581.5px;font-size:11px;line-height:14px;letter-spacing:0.062px;">Size...</span>
<div class="chk" style="left:1620px;top:609px;width:12px;height:12px;"></div>
<span class="t" style="left:1637px;top:608.0px;font-size:11px;line-height:14px;letter-spacing:-0.071px;">Automatically save photos</span>
<div class="btn" style="left:1788px;top:605px;width:75px;height:20px;"></div>
<span class="t" style="left:1796.0px;top:607.5px;font-size:11px;line-height:14px;letter-spacing:0.103px;">AutoSave...</span>
<span class="t" style="left:1620px;top:636.5px;font-size:11px;line-height:14px;letter-spacing:-0.120px;">Use Guide Star At</span>
<div style="left:1708px;top:644px;width:155px;height:1px;background:#a0a0a0"></div>
<span class="t" style="left:1628.5px;top:654.0px;font-size:11px;line-height:14px;letter-spacing:-0.697px;">X:</span>
<div class="sunk" style="left:1640px;top:652px;width:109px;height:18px;"></div>
<span class="t" style="left:1644px;top:654.0px;font-size:11px;line-height:14px;letter-spacing:0.034px;">201,000</span>
<div class="btn" style="left:1732px;top:654px;width:15px;height:7px;"></div>
<div class="btn" style="left:1732px;top:661px;width:15px;height:7px;"></div>
<svg class="a" style="left:1737px;top:655.5px" width="5" height="3" viewBox="0 0 5 3"><path d="M0 3 L2.5 0 L5 3Z" fill="#000"/></svg>
<svg class="a" style="left:1737px;top:663.0px" width="5" height="3" viewBox="0 0 5 3"><path d="M0 0 L2.5 3 L5 0Z" fill="#000"/></svg>
<div class="btn" style="left:1752px;top:651px;width:110px;height:20px;"></div>
<span class="t" style="left:1756.5px;top:653.5px;font-size:11px;line-height:14px;letter-spacing:-0.167px;">Auto-Find Guide Star</span>
<span class="t" style="left:1628.5px;top:676.0px;font-size:11px;line-height:14px;letter-spacing:-0.394px;">Y:</span>
<div class="sunk" style="left:1640px;top:674px;width:109px;height:18px;"></div>
<span class="t" style="left:1644px;top:676.0px;font-size:11px;line-height:14px;letter-spacing:0.151px;">110,000</span>
<div class="btn" style="left:1732px;top:676px;width:15px;height:7px;"></div>
<div class="btn" style="left:1732px;top:683px;width:15px;height:7px;"></div>
<svg class="a" style="left:1737px;top:677.5px" width="5" height="3" viewBox="0 0 5 3"><path d="M0 3 L2.5 0 L5 3Z" fill="#000"/></svg>
<svg class="a" style="left:1737px;top:685.0px" width="5" height="3" viewBox="0 0 5 3"><path d="M0 0 L2.5 3 L5 0Z" fill="#000"/></svg>
<div class="btn" style="left:1752px;top:673px;width:88px;height:20px;"></div>
<span class="t" style="left:1756.5px;top:675.5px;font-size:11px;line-height:14px;letter-spacing:-0.245px;">Clear Guide Star</span>
<span class="t" style="left:1628px;top:695.5px;font-size:11px;line-height:14px;letter-spacing:-0.246px;">Double click desired guide</span>
<span class="t" style="left:1628px;top:708.5px;font-size:11px;line-height:14px;letter-spacing:0.052px;">star on photo.</span>
<div class="btn" style="left:1629px;top:723px;width:122px;height:20px;"></div>
<span class="t" style="left:1645.0px;top:725.5px;font-size:11px;line-height:14px;letter-spacing:-0.117px;">Move Guide Star...</span>
<span class="t" style="left:1619.5px;top:753.0px;font-size:11px;line-height:14px;letter-spacing:-0.206px;">Declination:</span>
<div class="sunk" style="left:1746px;top:751px;width:115px;height:18px;"></div>
<span class="t" style="left:1750px;top:753.0px;font-size:11px;line-height:14px;letter-spacing:0.095px;">41,25</span>
<div class="btn" style="left:1844px;top:753px;width:15px;height:7px;"></div>
<div class="btn" style="left:1844px;top:760px;width:15px;height:7px;"></div>
<svg class="a" style="left:1849px;top:754.5px" width="5" height="3" viewBox="0 0 5 3"><path d="M0 3 L2.5 0 L5 3Z" fill="#000"/></svg>
<svg class="a" style="left:1849px;top:762.0px" width="5" height="3" viewBox="0 0 5 3"><path d="M0 0 L2.5 3 L5 0Z" fill="#000"/></svg>
<span class="t" style="left:1619.5px;top:779.0px;font-size:11px;line-height:14px;letter-spacing:-0.145px;">Guide star lost when signal below:</span>
<div class="sunk" style="left:1789px;top:777px;width:72px;height:18px;"></div>
<span class="t" style="left:1793px;top:779.0px;font-size:11px;line-height:14px;letter-spacing:-0.005px;">10%</span>
<div class="btn" style="left:1844px;top:779px;width:15px;height:7px;"></div>
<div class="btn" style="left:1844px;top:786px;width:15px;height:7px;"></div>
<svg class="a" style="left:1849px;top:780.5px" width="5" height="3" viewBox="0 0 5 3"><path d="M0 3 L2.5 0 L5 3Z" fill="#000"/></svg>
<svg class="a" style="left:1849px;top:788.0px" width="5" height="3" viewBox="0 0 5 3"><path d="M0 0 L2.5 3 L5 0Z" fill="#000"/></svg>
<div class="chk" style="left:1620px;top:804px;width:12px;height:12px;"></div>
<svg class="a" style="left:1620px;top:804px" width="12" height="12" viewBox="0 0 12 12"><path d="M2.8 5.2 L5 7.4 L9.2 3.2 V5.4 L5 9.6 L2.8 7.4Z" fill="#000"/></svg>
<span class="t" style="left:1637px;top:804.0px;font-size:11px;line-height:14px;letter-spacing:-0.095px;">Display Autoguider</span>
<div style="left:1604px;top:840px;width:293px;height:9px;border:1px solid #a0a0a0;border-radius:4.5px;background:linear-gradient(#d0d0d0,#ececec)"></div>
<span class="t" style="left:1594px;top:849.0px;font-size:11px;line-height:14px;letter-spacing:-0.140px;">Filter Wheel</span>
<div style="left:1654px;top:856px;width:252px;height:1px;background:#a0a0a0;box-shadow:0 1px 0 #e8eef8"></div>
<span class="t" style="left:1665.5px;top:876.0px;font-size:11px;line-height:14px;letter-spacing:-0.096px;">&lt;No Filter Wheel Selected&gt;</span>
<div class="btn" style="left:1804px;top:873px;width:32px;height:20px;"></div>
<svg class="a" style="left:1804px;top:873px" width="32" height="20" viewBox="0 0 32 20"><g transform="translate(15.5 9.5)" fill="#222"><rect x="-1.7" y="-8" width="3.4" height="4" transform="rotate(0)"/><rect x="-1.7" y="-8" width="3.4" height="4" transform="rotate(45)"/><rect x="-1.7" y="-8" width="3.4" height="4" transform="rotate(90)"/><rect x="-1.7" y="-8" width="3.4" height="4" transform="rotate(135)"/><rect x="-1.7" y="-8" width="3.4" height="4" transform="rotate(180)"/><rect x="-1.7" y="-8" width="3.4" height="4" transform="rotate(225)"/><rect x="-1.7" y="-8" width="3.4" height="4" transform="rotate(270)"/><rect x="-1.7" y="-8" width="3.4" height="4" transform="rotate(315)"/><circle r="5.6"/><circle r="2.4" fill="#f0f0f0"/></g></svg>
<div class="btn" style="left:1672px;top:899px;width:75px;height:20px;"></div>
<span class="t" style="left:1689.0px;top:901.5px;font-size:11px;line-height:14px;letter-spacing:-0.138px;">Connect</span>
<div class="btn" style="left:1753px;top:899px;width:75px;height:20px;"></div>
<span class="t" style="left:1764.0px;top:901.5px;font-size:11px;line-height:14px;letter-spacing:-0.241px;">Disconnect</span>
<span class="t" style="left:1604px;top:928.0px;font-size:11px;line-height:14px;letter-spacing:-0.035px;">Status:</span>
<span class="t" style="left:1646px;top:928.0px;font-size:11px;line-height:14px;color:#f00000;font-weight:bold;letter-spacing:0.291px;">Not Connected</span>
<span class="t" style="left:1604px;top:954.0px;font-size:11px;line-height:14px;color:#8c8c8c;letter-spacing:0.071px;text-shadow:1px 1px 0 #fff;">Filter:</span>
<div class="sunk" style="left:1640px;top:952px;width:86px;height:18px;background:#f0f0f0"></div>
<div class="btn" style="left:1709px;top:954px;width:15px;height:14px;"></div>
<svg class="a" style="left:1713px;top:959.0px" width="7" height="4" viewBox="0 0 7 4"><path d="M0 0 L3.5 4 L7 0Z" fill="#a0a0a0"/></svg>
<div class="btn" style="left:1733px;top:951px;width:75px;height:20px;"></div>
<span class="t" style="left:1745.0px;top:953.5px;font-size:11px;line-height:14px;letter-spacing:-0.245px;">Move Now</span>
<span class="t" style="left:1604px;top:980.5px;font-size:11px;line-height:14px;color:#8c8c8c;letter-spacing:0.059px;text-shadow:1px 1px 0 #fff;">Filter wheel presently at filter:</span>
<div style="left:0px;top:1019px;width:1920px;height:21px;background:#f0f0f0"></div>
<div style="left:0px;top:1019px;width:1917px;height:1px;background:#fff"></div>
<div style="left:0px;top:1038px;width:1917px;height:1px;background:#fff"></div>
<div style="left:1693px;top:1022px;width:205px;height:15px;border:1px solid;border-color:#a0a0a0 #fff #fff #a0a0a0"></div>
<span class="t" style="left:1695px;top:1023.0px;font-size:11px;line-height:14px;letter-spacing:0.006px;">FOV: 18°</span>
<span class="t" style="left:1750px;top:1023.0px;font-size:11px;line-height:14px;letter-spacing:0.095px;">04/05/2016</span>
<span class="t" style="left:1818.5px;top:1023.0px;font-size:11px;line-height:14px;letter-spacing:-0.156px;">07:38:54 DST</span>
<svg class="a" style="left:1905px;top:1025px" width="14" height="14" viewBox="0 0 14 14"><path d="M13 1 L1 13 M13 5 L5 13 M13 9 L9 13" stroke="#a0a0a0" stroke-width="1.2"/></svg>
<div style="left:0px;top:1039px;width:1920px;height:1px;background:#3c3c3c"></div>
<div style="left:1917px;top:0px;width:1px;height:1040px;background:#3c3c3c"></div>
<div style="left:1918px;top:0px;width:2px;height:1040px;background:#d4d4d4"></div>
<div style="left:345px;top:136px;width:963px;height:674px;background:#f0f0f0;border:1px solid #0063b1;box-shadow:0 1px 9px rgba(0,0,0,.25)"></div>
<div style="left:345px;top:136px;width:963px;height:31px;background:#0063b1"></div>
<svg class="a" style="left:354px;top:143px" width="16" height="16" viewBox="0 0 16 16"><rect width="16" height="16" fill="#b8b4b0"/><path d="M2.5 12 Q2.5 4.5 5.2 3 Q7.6 2.4 8 6 L8.2 12.5Z" fill="#fbfbfb"/><path d="M6.2 2.2 Q8.5 -.2 10 2 Q10.8 3.6 9.6 4.6 Q12.5 3.6 13 6.5 Q15 8 14.6 10.5 L8.6 10.8 Q8 5 6.2 2.2Z" fill="#050505"/><circle cx="8.3" cy="2.6" r=".8" fill="#c8c8c8"/><path d="M0 11.5 Q4 13.5 8 12.2 L16 10.5 V16 H0Z" fill="#5e5e5e"/><path d="M0 14 H16 V16 H0Z" fill="#8a8682"/><path d="M8 11 H16 V13 H8Z" fill="#3a3a3a"/></svg>
<span class="t" style="left:375.5px;top:144.5px;font-size:12px;line-height:15px;color:#fff;letter-spacing:-0.142px;white-space:pre;">MaxPilote Suite  V4.02.17  ©2012-2016 Laurent Bourgon  www.felopaul.com</span>
<svg class="a" style="left:1180px;top:140px" width="120" height="24" viewBox="0 0 120 24"><g stroke="#fff" stroke-width="1.2" fill="none"><path d="M8 11.5 H18.5"/><path d="M100 6.5 L108.5 15.5 M108.5 6.5 L100 15.5" stroke-width="1.4"/></g><rect x="52.5" y="6.5" width="9.5" height="9.5" stroke="#5d9bd0" fill="none"/></svg>
<div style="left:350px;top:170px;width:109px;height:29px;background:#f0f0f0;border:1px solid #c8c8c8;box-shadow:inset 1px 1px 0 #fff"></div>
<div style="left:353px;top:173px;width:103px;height:23px;background:#40e0d0"></div>
<span class="t" style="left:367px;top:174.7px;font-size:16px;line-height:20px;color:#000;font-weight:bold;letter-spacing:-0.132px;">MaxPilote</span>
<div style="left:463px;top:170px;width:109px;height:29px;background:#f0f0f0;border:1px solid #c8c8c8;box-shadow:inset 1px 1px 0 #fff"></div>
<div style="left:466px;top:173px;width:103px;height:23px;background:#4682b4"></div>
<span class="t" style="left:469px;top:174.7px;font-size:16px;line-height:20px;color:#fff;font-weight:bold;letter-spacing:-0.024px;">MaxSelector</span>
<div style="left:575px;top:170px;width:109px;height:29px;background:#f0f0f0;border:1px solid #c8c8c8;box-shadow:inset 1px 1px 0 #fff"></div>
<div style="left:578px;top:173px;width:103px;height:23px;background:#4682b4"></div>
<span class="t" style="left:588px;top:174.7px;font-size:16px;line-height:20px;color:#fff;font-weight:bold;letter-spacing:-0.102px;">MaxViewer</span>
<div style="left:350px;top:201px;width:956px;height:1px;background:#fff"></div>
<div style="left:350px;top:207px;width:28px;height:105px;background:#e8e8e8;border:1px solid;border-color:#fff #a0a0a0 #a0a0a0 #fff"></div>
<div style="left:350px;top:312px;width:28px;height:106px;background:#000;border-top:1px solid #fff"></div>
<div style="left:350px;top:420px;width:28px;height:103px;background:#e8e8e8;border:1px solid;border-color:#fff #a0a0a0 #a0a0a0 #fff"></div>
<span class="t" style="left:364px;top:274px;font-size:14px;font-weight:bold;line-height:16px;color:#111;transform:translate(-50%,-50%) rotate(-90deg);letter-spacing:0.365px">Setting</span>
<span class="t" style="left:364px;top:380px;font-size:14px;font-weight:bold;line-height:16px;color:#fff;transform:translate(-50%,-50%) rotate(-90deg);letter-spacing:0.329px">Session</span>
<span class="t" style="left:364px;top:488.5px;font-size:14px;font-weight:bold;line-height:16px;color:#111;transform:translate(-50%,-50%) rotate(-90deg);letter-spacing:0.730px">Options</span>
<svg class="a" style="left:353px;top:215px" width="24" height="24" viewBox="0 0 24 24"><g transform="translate(12 12)"><g fill="#7a7a7a"><rect x="-2" y="-11" width="4" height="4" transform="rotate(0)"/><rect x="-2" y="-11" width="4" height="4" transform="rotate(30)"/><rect x="-2" y="-11" width="4" height="4" transform="rotate(60)"/><rect x="-2" y="-11" width="4" height="4" transform="rotate(90)"/><rect x="-2" y="-11" width="4" height="4" transform="rotate(120)"/><rect x="-2" y="-11" width="4" height="4" transform="rotate(150)"/><rect x="-2" y="-11" width="4" height="4" transform="rotate(180)"/><rect x="-2" y="-11" width="4" height="4" transform="rotate(210)"/><rect x="-2" y="-11" width="4" height="4" transform="rotate(240)"/><rect x="-2" y="-11" width="4" height="4" transform="rotate(270)"/><rect x="-2" y="-11" width="4" height="4" transform="rotate(300)"/><rect x="-2" y="-11" width="4" height="4" transform="rotate(330)"/><circle r="8.6"/></g><circle r="6.5" fill="#2a7ae0"/><circle r="5" fill="#bcd8f8"/><circle r="3.4" fill="#f4f4f4"/></g></svg>
<svg class="a" style="left:354px;top:322px" width="22" height="22" viewBox="0 0 22 22"><circle cx="11" cy="11" r="10" fill="#e01818"/><circle cx="11" cy="11" r="7" fill="#fff"/><circle cx="11" cy="11" r="3.6" fill="#e01818"/></svg>
<svg class="a" style="left:352px;top:425px" width="26" height="26" viewBox="0 0 26 26"><path d="M4 4 L8 3 L20 17 L17 20 L6 8Z" fill="#8a8a8a"/><path d="M3 4 L9 2 L11 5 L5 9Z" fill="#555"/><path d="M22 3 L19 6 L20 8 L9 19 L7 22 L4 20 L6 17 L17 6 L18 3Z" fill="#4a80c8"/><path d="M4 17 a3 3 0 1 0 4 4" stroke="#999" stroke-width="2" fill="none"/></svg>
<div style="left:381px;top:211px;width:332px;height:590px;background:#a0a0a0;border:2px solid;border-color:#696969 #fff #fff #696969"></div>
<div style="left:383px;top:213px;width:328px;height:306px;background:#f0f0f0"></div>
<div style="left:384px;top:215px;width:325px;height:301px;background:#000"></div>
<span class="t" style="left:385px;top:217.0px;font-size:10px;line-height:12px;color:#fff;letter-spacing:-0.386px;">New Session MaxPilote V4.02.17</span>
<span class="t" style="left:385px;top:229.0px;font-size:10px;line-height:12px;color:#fff;letter-spacing:-0.385px;">Start at 04/05/2016 06:52:38</span>
<span class="t" style="left:385px;top:240.9px;font-size:10px;line-height:12px;color:#fff;letter-spacing:-0.283px;">Welcome !!!</span>
<span class="t" style="left:385px;top:264.8px;font-size:10px;line-height:12px;color:#fff;letter-spacing:-0.408px;">06:52:50&gt; Connected to TheskyX Camera</span>
<span class="t" style="left:385px;top:276.8px;font-size:10px;line-height:12px;color:#fff;letter-spacing:-0.397px;">06:52:50&gt; Connected to TheSkyX</span>
<span class="t" style="left:385px;top:288.8px;font-size:10px;line-height:12px;color:#fff;letter-spacing:-0.390px;">06:52:50&gt; Twillight Nautic begin on Stop Session Time : 05H22</span>
<span class="t" style="left:385px;top:300.7px;font-size:10px;line-height:12px;color:#fff;letter-spacing:-0.383px;">06:52:50&gt; Twillight Nautic end on Start Session Time : 22H03</span>
<span class="t" style="left:385px;top:312.7px;font-size:10px;line-height:12px;color:#fff;letter-spacing:-0.356px;">06:52:50&gt; Twillight Civil start on Flat Session Time : 06H01</span>
<span class="t" style="left:385px;top:324.6px;font-size:10px;line-height:12px;color:#fff;letter-spacing:-0.395px;">06:52:50&gt; Connected to telescope in TheSkyX</span>
<span class="t" style="left:385px;top:336.6px;font-size:10px;line-height:12px;color:#fff;letter-spacing:-0.422px;">06:52:54&gt; All Session enable, wait :</span>
<span class="t" style="left:385px;top:348.6px;font-size:10px;line-height:12px;color:#fff;letter-spacing:-0.451px;">06:52:54&gt; Start Time Open Dome : 23H59</span>
<span class="t" style="left:385px;top:360.5px;font-size:10px;line-height:12px;color:#fff;letter-spacing:-0.362px;">06:52:54&gt; Start Time T°CCD : 22H00</span>
<span class="t" style="left:385px;top:372.5px;font-size:10px;line-height:12px;color:#fff;letter-spacing:-0.375px;">06:52:54&gt; Start Time Target 1 : 22H03</span>
<span class="t" style="left:385px;top:384.4px;font-size:10px;line-height:12px;color:#fff;letter-spacing:-0.333px;">06:52:54&gt; Active focus with TheSkyX</span>
<span class="t" style="left:385px;top:396.4px;font-size:10px;line-height:12px;color:#ffff30;letter-spacing:-0.371px;">06:53:04&gt; start T° Camera session</span>
<span class="t" style="left:385px;top:408.4px;font-size:10px;line-height:12px;color:#fff;letter-spacing:-0.399px;">06:53:04&gt; Start Camera 1 T° session</span>
<span class="t" style="left:385px;top:420.3px;font-size:10px;line-height:12px;color:#fff;letter-spacing:-0.439px;">06:53:04&gt; Set Camera 1 T° from -10,00 to -15,00</span>
<span class="t" style="left:385px;top:432.3px;font-size:10px;line-height:12px;color:#fff;letter-spacing:-0.439px;">06:55:04&gt; Set Camera 1 T° from -14,19 to -19,19</span>
<span class="t" style="left:385px;top:444.2px;font-size:10px;line-height:12px;color:#fff;letter-spacing:-0.439px;">06:57:04&gt; Set Camera 1 T° from -18,06 to -20,00</span>
<span class="t" style="left:385px;top:456.2px;font-size:10px;line-height:12px;color:#fff;letter-spacing:-0.427px;">06:59:04&gt; Camera 1 ready at T° :-20,00</span>
<div style="left:383px;top:519px;width:328px;height:64px;background:#f0f0f0"></div>
<div style="left:385px;top:521px;width:61px;height:28px;background:#e4e4e4;border:1px solid #d0d0d0;box-shadow:inset 1px 1px 0 #fff"></div>
<div style="left:387.5px;top:523.5px;width:55.5px;height:22.5px;background:linear-gradient(#d8ff9a 0%,#7cf030 45%,#48d808 60%,#34b800 100%);border-radius:11.25px;border:1px solid rgba(0,0,0,.55);box-shadow:0 1.5px 1.5px rgba(0,0,0,.6), inset 0 1px 1px rgba(255,255,255,.7)"></div>
<span class="t" style="left:396.0px;top:524.0px;font-size:10px;line-height:12px;font-weight:bold;letter-spacing:-0.287px;">Connect</span>
<span class="t" style="left:405.5px;top:533.5px;font-size:10px;line-height:12px;font-weight:bold;letter-spacing:-0.147px;">ALL</span>
<div style="left:448px;top:521px;width:48.5px;height:28px;background:#e4e4e4;border:1px solid #d0d0d0;box-shadow:inset 1px 1px 0 #fff"></div>
<div style="left:450.5px;top:524px;width:43.5px;height:21px;background:linear-gradient(#ffa8ff 0%,#ec50ec 45%,#d020d0 60%,#a010a8 100%);border-radius:10.5px;border:1px solid rgba(0,0,0,.55);box-shadow:0 1.5px 1.5px rgba(0,0,0,.6), inset 0 1px 1px rgba(255,255,255,.7)"></div>
<span class="t" style="left:454.0px;top:529.0px;font-size:9px;line-height:11px;color:#fff;font-weight:bold;letter-spacing:-0.502px;">Schedule</span>
<div style="left:502px;top:521px;width:78px;height:61px;background:#e4e4e4;border:1px solid #d0d0d0;box-shadow:inset 1px 1px 0 #fff"></div>
<div style="left:504.5px;top:526px;width:73px;height:50.5px;background:linear-gradient(#a8f6ff 0%,#40daec 45%,#18c0dc 60%,#0898b8 100%);border-radius:9px;border:1px solid rgba(0,0,0,.6);box-shadow:0 2px 2px rgba(0,0,0,.6), inset 0 1px 2px rgba(255,255,255,.8)"></div>
<span class="t" style="left:522.0px;top:527.0px;font-size:15px;line-height:19px;font-weight:bold;letter-spacing:0.764px;">Start</span>
<span class="t" style="left:511.0px;top:541.0px;font-size:15px;line-height:19px;font-weight:bold;letter-spacing:0.354px;">Session</span>
<span class="t" style="left:524.5px;top:555.5px;font-size:15px;line-height:19px;font-weight:bold;letter-spacing:0.446px;">Now</span>
<div style="left:583.5px;top:521px;width:48.0px;height:28px;background:#e4e4e4;border:1px solid #d0d0d0;box-shadow:inset 1px 1px 0 #fff"></div>
<div style="left:586px;top:524px;width:43px;height:21px;background:linear-gradient(#dcdcdc 0%,#b4b4b4 45%,#9c9c9c 60%,#888 100%);border-radius:10.5px;border:1px solid rgba(0,0,0,.55);box-shadow:0 1.5px 1.5px rgba(0,0,0,.6), inset 0 1px 1px rgba(255,255,255,.7)"></div>
<span class="t" style="left:590.5px;top:529.0px;font-size:9px;line-height:11px;color:#e8e8e8;font-weight:bold;letter-spacing:-0.573px;">Suspend</span>
<div style="left:633.5px;top:521px;width:48.0px;height:28px;background:#e4e4e4;border:1px solid #d0d0d0;box-shadow:inset 1px 1px 0 #fff"></div>
<div style="left:636px;top:524px;width:43px;height:21px;background:linear-gradient(#dcdcdc 0%,#b4b4b4 45%,#9c9c9c 60%,#888 100%);border-radius:10.5px;border:1px solid rgba(0,0,0,.55);box-shadow:0 1.5px 1.5px rgba(0,0,0,.6), inset 0 1px 1px rgba(255,255,255,.7)"></div>
<span class="t" style="left:642.5px;top:529.0px;font-size:9px;line-height:11px;color:#707070;font-weight:bold;letter-spacing:-0.145px;">Restart</span>
<div style="left:684.5px;top:522px;width:23px;height:26px;background:#e040f0;border:1px solid #a0a0a0;box-shadow:inset 1px 1px 0 #f8b0ff"></div>
<svg class="a" style="left:686px;top:525px" width="20" height="20" viewBox="0 0 20 20"><path d="M9 3 L4 10 L9 17 M15 3 L10 10 L15 17" stroke="#000" stroke-width="2" fill="none"/></svg>
<div style="left:389px;top:552px;width:109px;height:29.5px;background:#000;border:1px solid #000;box-shadow:inset 0 0 0 1px #fff, 0 0 0 1px #d8d8d8"></div>
<span class="t" style="left:397px;top:552.5px;font-size:23px;line-height:29px;color:#fff;font-weight:bold;letter-spacing:-0.008px;">07:38:54</span>
<div style="left:584.5px;top:552px;width:121px;height:29px;background:#000;box-shadow:inset 0 0 0 1px #000, inset 0 0 0 2px #fff, 0 0 0 1px #d8d8d8"></div>
<div style="left:383px;top:583px;width:328px;height:48px;background:#a2bbdc"></div>
<div style="left:383px;top:631px;width:328px;height:73px;background:#bccce1"></div>
<div style="left:383px;top:704px;width:328px;height:95px;background:#a2bbdc"></div>
<span class="t" style="left:383px;top:590.0px;font-size:12px;line-height:15px;color:#168c26;font-weight:bold;letter-spacing:-0.224px;white-space:pre;">Lancement  Ttes Cibles :</span>
<div style="left:521.5px;top:586px;width:40px;height:20.5px;background:#fff;border:1px solid #8a9ab0"></div>
<div style="left:522.5px;top:587px;width:23px;height:18.5px;background:#7cfc00"></div>
<span class="t" style="left:526.212890625px;top:587.0px;font-size:14px;line-height:18px;color:#000;font-weight:bold;">22</span>
<div style="left:545.5px;top:587px;width:15px;height:18.5px;background:#f0f0f0;border-left:1px solid #c8c8c8"></div>
<div style="left:545.5px;top:595.75px;width:15px;height:1px;background:#d4d4d4"></div>
<svg class="a" style="left:549.5px;top:589.75px" width="8" height="13" viewBox="0 0 8 13"><path d="M1 4.3 L3.5 1.3 L6 4.3Z M1 8.7 L3.5 11.7 L6 8.7Z" fill="#000"/></svg>
<span class="t" style="left:567px;top:589.0px;font-size:13px;line-height:16px;color:#168c26;letter-spacing:-1.200px;">Hr</span>
<div style="left:581.5px;top:586px;width:40px;height:20.5px;background:#fff;border:1px solid #8a9ab0"></div>
<div style="left:582.5px;top:587px;width:23px;height:18.5px;background:#7cfc00"></div>
<span class="t" style="left:590.1064453125px;top:587.0px;font-size:14px;line-height:18px;color:#000;font-weight:bold;">3</span>
<div style="left:605.5px;top:587px;width:15px;height:18.5px;background:#f0f0f0;border-left:1px solid #c8c8c8"></div>
<div style="left:605.5px;top:595.75px;width:15px;height:1px;background:#d4d4d4"></div>
<svg class="a" style="left:609.5px;top:589.75px" width="8" height="13" viewBox="0 0 8 13"><path d="M1 4.3 L3.5 1.3 L6 4.3Z M1 8.7 L3.5 11.7 L6 8.7Z" fill="#000"/></svg>
<div style="left:634.5px;top:590.5px;width:12.5px;height:12.5px;background:#fff;border:1px solid #444"></div>
<svg class="a" style="left:634.5px;top:590.5px" width="12.5" height="12.5" viewBox="0 0 12.5 12.5"><path d="M2.6 6.4 L5.2 9 L10.2 3.4" stroke="#333" stroke-width="1.1" fill="none"/></svg>
<span class="t" style="left:653.5px;top:590.0px;font-size:12px;line-height:15px;color:#168c26;font-weight:bold;letter-spacing:-0.170px;">Active</span>
<span class="t" style="left:407.5px;top:612.0px;font-size:12px;line-height:15px;color:#cc1c24;font-weight:bold;letter-spacing:-0.152px;">Arret toutes Cibles :</span>
<div style="left:521.5px;top:608.5px;width:40px;height:20.5px;background:#fff;border:1px solid #8a9ab0"></div>
<div style="left:522.5px;top:609.5px;width:23px;height:18.5px;background:#b22222"></div>
<span class="t" style="left:530.1064453125px;top:609.5px;font-size:14px;line-height:18px;color:#fff;font-weight:bold;">7</span>
<div style="left:545.5px;top:609.5px;width:15px;height:18.5px;background:#f0f0f0;border-left:1px solid #c8c8c8"></div>
<div style="left:545.5px;top:618.25px;width:15px;height:1px;background:#d4d4d4"></div>
<svg class="a" style="left:549.5px;top:612.25px" width="8" height="13" viewBox="0 0 8 13"><path d="M1 4.3 L3.5 1.3 L6 4.3Z M1 8.7 L3.5 11.7 L6 8.7Z" fill="#000"/></svg>
<span class="t" style="left:567px;top:611.5px;font-size:13px;line-height:16px;color:#cc1c24;letter-spacing:-1.200px;">Hr</span>
<div style="left:581.5px;top:608.5px;width:40px;height:20.5px;background:#fff;border:1px solid #8a9ab0"></div>
<div style="left:582.5px;top:609.5px;width:23px;height:18.5px;background:#b22222"></div>
<span class="t" style="left:586.212890625px;top:609.5px;font-size:14px;line-height:18px;color:#fff;font-weight:bold;">38</span>
<div style="left:605.5px;top:609.5px;width:15px;height:18.5px;background:#f0f0f0;border-left:1px solid #c8c8c8"></div>
<div style="left:605.5px;top:618.25px;width:15px;height:1px;background:#d4d4d4"></div>
<svg class="a" style="left:609.5px;top:612.25px" width="8" height="13" viewBox="0 0 8 13"><path d="M1 4.3 L3.5 1.3 L6 4.3Z M1 8.7 L3.5 11.7 L6 8.7Z" fill="#000"/></svg>
<div style="left:634.5px;top:613px;width:12.5px;height:12.5px;background:#fff;border:1px solid #444"></div>
<svg class="a" style="left:634.5px;top:613px" width="12.5" height="12.5" viewBox="0 0 12.5 12.5"><path d="M2.6 6.4 L5.2 9 L10.2 3.4" stroke="#333" stroke-width="1.1" fill="none"/></svg>
<span class="t" style="left:653.5px;top:612.0px;font-size:12px;line-height:15px;color:#cc1c24;font-weight:bold;letter-spacing:-0.170px;">Active</span>
<span class="t" style="left:396px;top:638.3px;font-size:12px;line-height:15px;font-weight:bold;letter-spacing:-0.240px;white-space:pre;">Hrs Ouverture  Dome :</span>
<div style="left:521.5px;top:637px;width:40px;height:19px;background:#fff;border:1px solid #8a9ab0"></div>
<div style="left:522.5px;top:638px;width:23px;height:17px;background:#e0ffff"></div>
<span class="t" style="left:526.212890625px;top:637.2px;font-size:14px;line-height:18px;color:#000;font-weight:bold;">23</span>
<div style="left:545.5px;top:638px;width:15px;height:17px;background:#f0f0f0;border-left:1px solid #c8c8c8"></div>
<div style="left:545.5px;top:646.0px;width:15px;height:1px;background:#d4d4d4"></div>
<svg class="a" style="left:549.5px;top:640.0px" width="8" height="13" viewBox="0 0 8 13"><path d="M1 4.3 L3.5 1.3 L6 4.3Z M1 8.7 L3.5 11.7 L6 8.7Z" fill="#000"/></svg>
<span class="t" style="left:567px;top:636.8px;font-size:13px;line-height:16px;letter-spacing:-1.200px;">Hr</span>
<div style="left:581.5px;top:637px;width:40px;height:19px;background:#fff;border:1px solid #8a9ab0"></div>
<div style="left:582.5px;top:638px;width:23px;height:17px;background:#e0ffff"></div>
<span class="t" style="left:586.212890625px;top:637.2px;font-size:14px;line-height:18px;color:#000;font-weight:bold;">59</span>
<div style="left:605.5px;top:638px;width:15px;height:17px;background:#f0f0f0;border-left:1px solid #c8c8c8"></div>
<div style="left:605.5px;top:646.0px;width:15px;height:1px;background:#d4d4d4"></div>
<svg class="a" style="left:609.5px;top:640.0px" width="8" height="13" viewBox="0 0 8 13"><path d="M1 4.3 L3.5 1.3 L6 4.3Z M1 8.7 L3.5 11.7 L6 8.7Z" fill="#000"/></svg>
<div style="left:628.75px;top:635px;width:72.25px;height:20.5px;background:#e4e4e4;border:1px solid #d0d0d0;box-shadow:inset 1px 1px 0 #fff"></div>
<div style="left:631.25px;top:637.5px;width:67.25px;height:14.5px;background:linear-gradient(#a8f6ff 0%,#40daec 45%,#18c0dc 60%,#0898b8 100%);border-radius:7.25px;border:1px solid rgba(0,0,0,.6);box-shadow:0 1.5px 1.5px rgba(0,0,0,.6), inset 0 1px 1px rgba(255,255,255,.8)"></div>
<span class="t" style="left:638.375px;top:637.8px;font-size:11.5px;line-height:14px;font-weight:bold;letter-spacing:-0.075px;">Start Now</span>
<span class="t" style="left:388px;top:661.3px;font-size:12px;line-height:15px;font-weight:bold;letter-spacing:-0.188px;white-space:pre;">Hrs  Température CCD :</span>
<div style="left:521.5px;top:659.5px;width:40px;height:19px;background:#fff;border:1px solid #8a9ab0"></div>
<div style="left:522.5px;top:660.5px;width:23px;height:17px;background:#e0ffff"></div>
<span class="t" style="left:526.212890625px;top:659.7px;font-size:14px;line-height:18px;color:#000;font-weight:bold;">22</span>
<div style="left:545.5px;top:660.5px;width:15px;height:17px;background:#f0f0f0;border-left:1px solid #c8c8c8"></div>
<div style="left:545.5px;top:668.5px;width:15px;height:1px;background:#d4d4d4"></div>
<svg class="a" style="left:549.5px;top:662.5px" width="8" height="13" viewBox="0 0 8 13"><path d="M1 4.3 L3.5 1.3 L6 4.3Z M1 8.7 L3.5 11.7 L6 8.7Z" fill="#000"/></svg>
<span class="t" style="left:567px;top:659.8px;font-size:13px;line-height:16px;letter-spacing:-1.200px;">Hr</span>
<div style="left:581.5px;top:659.5px;width:40px;height:19px;background:#fff;border:1px solid #8a9ab0"></div>
<div style="left:582.5px;top:660.5px;width:23px;height:17px;background:#e0ffff"></div>
<span class="t" style="left:590.1064453125px;top:659.7px;font-size:14px;line-height:18px;color:#000;font-weight:bold;">0</span>
<div style="left:605.5px;top:660.5px;width:15px;height:17px;background:#f0f0f0;border-left:1px solid #c8c8c8"></div>
<div style="left:605.5px;top:668.5px;width:15px;height:1px;background:#d4d4d4"></div>
<svg class="a" style="left:609.5px;top:662.5px" width="8" height="13" viewBox="0 0 8 13"><path d="M1 4.3 L3.5 1.3 L6 4.3Z M1 8.7 L3.5 11.7 L6 8.7Z" fill="#000"/></svg>
<div style="left:628.75px;top:658px;width:72.25px;height:20px;background:#e4e4e4;border:1px solid #d0d0d0;box-shadow:inset 1px 1px 0 #fff"></div>
<div style="left:631.25px;top:660.5px;width:67.25px;height:14.0px;background:linear-gradient(#a8f6ff 0%,#40daec 45%,#18c0dc 60%,#0898b8 100%);border-radius:7.0px;border:1px solid rgba(0,0,0,.6);box-shadow:0 1.5px 1.5px rgba(0,0,0,.6), inset 0 1px 1px rgba(255,255,255,.8)"></div>
<span class="t" style="left:638.375px;top:660.5px;font-size:11.5px;line-height:14px;font-weight:bold;letter-spacing:-0.075px;">Start Now</span>
<span class="t" style="left:398px;top:685.0px;font-size:12px;line-height:15px;font-weight:bold;letter-spacing:-0.077px;white-space:pre;">Hrs  Début  Bias/D/F :</span>
<div style="left:521.5px;top:682.5px;width:40px;height:19px;background:#fff;border:1px solid #8a9ab0"></div>
<div style="left:522.5px;top:683.5px;width:23px;height:17px;background:#e0ffff"></div>
<span class="t" style="left:530.1064453125px;top:682.7px;font-size:14px;line-height:18px;color:#000;font-weight:bold;">6</span>
<div style="left:545.5px;top:683.5px;width:15px;height:17px;background:#f0f0f0;border-left:1px solid #c8c8c8"></div>
<div style="left:545.5px;top:691.5px;width:15px;height:1px;background:#d4d4d4"></div>
<svg class="a" style="left:549.5px;top:685.5px" width="8" height="13" viewBox="0 0 8 13"><path d="M1 4.3 L3.5 1.3 L6 4.3Z M1 8.7 L3.5 11.7 L6 8.7Z" fill="#000"/></svg>
<span class="t" style="left:567px;top:683.5px;font-size:13px;line-height:16px;letter-spacing:-1.200px;">Hr</span>
<div style="left:581.5px;top:682.5px;width:40px;height:19px;background:#fff;border:1px solid #8a9ab0"></div>
<div style="left:582.5px;top:683.5px;width:23px;height:17px;background:#e0ffff"></div>
<span class="t" style="left:590.1064453125px;top:682.7px;font-size:14px;line-height:18px;color:#000;font-weight:bold;">1</span>
<div style="left:605.5px;top:683.5px;width:15px;height:17px;background:#f0f0f0;border-left:1px solid #c8c8c8"></div>
<div style="left:605.5px;top:691.5px;width:15px;height:1px;background:#d4d4d4"></div>
<svg class="a" style="left:609.5px;top:685.5px" width="8" height="13" viewBox="0 0 8 13"><path d="M1 4.3 L3.5 1.3 L6 4.3Z M1 8.7 L3.5 11.7 L6 8.7Z" fill="#000"/></svg>
<div style="left:628.75px;top:681px;width:72.25px;height:20px;background:#e4e4e4;border:1px solid #d0d0d0;box-shadow:inset 1px 1px 0 #fff"></div>
<div style="left:631.25px;top:683.5px;width:67.25px;height:14.0px;background:linear-gradient(#a8f6ff 0%,#40daec 45%,#18c0dc 60%,#0898b8 100%);border-radius:7.0px;border:1px solid rgba(0,0,0,.6);box-shadow:0 1.5px 1.5px rgba(0,0,0,.6), inset 0 1px 1px rgba(255,255,255,.8)"></div>
<span class="t" style="left:638.375px;top:683.5px;font-size:11.5px;line-height:14px;font-weight:bold;letter-spacing:-0.075px;">Start Now</span>
<span class="t" style="left:405.5px;top:710.0px;font-size:12px;line-height:15px;font-weight:bold;letter-spacing:-0.029px;white-space:pre;">Goto Etoile G2V  &amp; Calibre Filtre RVB :</span>
<div style="left:628.75px;top:706px;width:72.25px;height:19.5px;background:#e4e4e4;border:1px solid #d0d0d0;box-shadow:inset 1px 1px 0 #fff"></div>
<div style="left:631.25px;top:708.5px;width:67.25px;height:13.5px;background:linear-gradient(#a8f6ff 0%,#40daec 45%,#18c0dc 60%,#0898b8 100%);border-radius:6.75px;border:1px solid rgba(0,0,0,.6);box-shadow:0 1.5px 1.5px rgba(0,0,0,.6), inset 0 1px 1px rgba(255,255,255,.8)"></div>
<span class="t" style="left:638.375px;top:708.2px;font-size:11.5px;line-height:14px;font-weight:bold;letter-spacing:-0.075px;">Start Now</span>
<div style="left:385.5px;top:728.5px;width:35px;height:24px;background:#ececec;border:1px solid #d0d0d0;box-shadow:inset 1px 1px 0 #fff"></div>
<svg class="a" style="left:385.5px;top:728.5px" width="35" height="24" viewBox="0 0 35 24"><ellipse cx="17.5" cy="12.8" rx="14.5" ry="9.0" fill="#b8b8b8"/><ellipse cx="17.5" cy="11.5" rx="14.5" ry="9.0" fill="url(#gHelp)"/><ellipse cx="17.5" cy="7.45" rx="10.44" ry="3.78" fill="#fff" opacity=".28"/><text x="17.5" y="15.712" text-anchor="middle" font-family="Liberation Sans" font-weight="bold" font-size="11.7" fill="#fff" textLength="23.5" lengthAdjust="spacingAndGlyphs">HELP</text></svg>
<div style="left:385.5px;top:755px;width:35px;height:24px;background:#ececec;border:1px solid #d0d0d0;box-shadow:inset 1px 1px 0 #fff"></div>
<svg class="a" style="left:385.5px;top:755px" width="35" height="24" viewBox="0 0 35 24"><ellipse cx="17.5" cy="12.8" rx="14.5" ry="9.0" fill="#b8b8b8"/><ellipse cx="17.5" cy="11.5" rx="14.5" ry="9.0" fill="url(#gVid)"/><ellipse cx="17.5" cy="7.45" rx="10.44" ry="3.78" fill="#fff" opacity=".28"/><text x="17.5" y="14.74" text-anchor="middle" font-family="Liberation Sans" font-weight="bold" font-size="9.0" fill="#fff" textLength="23.5" lengthAdjust="spacingAndGlyphs">Vidéo</text></svg>
<span class="t" style="left:468px;top:727.5px;font-size:12px;line-height:15px;font-weight:bold;letter-spacing:-0.420px;white-space:pre;">Tilt  Session</span>
<span class="t" style="left:462.5px;top:740.5px;font-size:8px;line-height:10px;letter-spacing:-0.147px;">MaxSelector ou MAP</span>
<span class="t" style="left:543px;top:732.5px;font-size:12px;line-height:15px;font-weight:bold;">:</span>
<div style="left:552.5px;top:729.5px;width:72.5px;height:21.0px;background:#e0ffff;border:1px solid #d0d0d0;box-shadow:inset 1px 1px 0 #fff"></div>
<div style="left:555.0px;top:732.0px;width:67.5px;height:15.0px;background:linear-gradient(#a8f6ff 0%,#40daec 45%,#18c0dc 60%,#0898b8 100%);border-radius:7.5px;border:1px solid rgba(0,0,0,.6);box-shadow:0 1.5px 1.5px rgba(0,0,0,.6), inset 0 1px 1px rgba(255,255,255,.8)"></div>
<span class="t" style="left:562.25px;top:732.5px;font-size:11.5px;line-height:14px;font-weight:bold;letter-spacing:-0.075px;">Start Now</span>
<div style="left:628.75px;top:729.5px;width:72.25px;height:21.0px;background:#e4e4e4;border:1px solid #d0d0d0;box-shadow:inset 1px 1px 0 #fff"></div>
<div style="left:631.25px;top:732.0px;width:67.25px;height:15.0px;background:linear-gradient(#a8f6ff 0%,#40daec 45%,#18c0dc 60%,#0898b8 100%);border-radius:7.5px;border:1px solid rgba(0,0,0,.6);box-shadow:0 1.5px 1.5px rgba(0,0,0,.6), inset 0 1px 1px rgba(255,255,255,.8)"></div>
<span class="t" style="left:638.375px;top:732.5px;font-size:11.5px;line-height:14px;font-weight:bold;letter-spacing:-0.075px;">Start Now</span>
<span class="t" style="left:505.5px;top:757.5px;font-size:12px;line-height:15px;font-weight:bold;letter-spacing:-0.334px;white-space:pre;">Collimation  Session :</span>
<div style="left:628.75px;top:753.75px;width:72.25px;height:20.25px;background:#e4e4e4;border:1px solid #d0d0d0;box-shadow:inset 1px 1px 0 #fff"></div>
<div style="left:631.25px;top:756.25px;width:67.25px;height:14.25px;background:linear-gradient(#a8f6ff 0%,#40daec 45%,#18c0dc 60%,#0898b8 100%);border-radius:7.125px;border:1px solid rgba(0,0,0,.6);box-shadow:0 1.5px 1.5px rgba(0,0,0,.6), inset 0 1px 1px rgba(255,255,255,.8)"></div>
<span class="t" style="left:638.375px;top:756.4px;font-size:11.5px;line-height:14px;font-weight:bold;letter-spacing:-0.075px;">Start Now</span>
<span class="t" style="left:420.5px;top:780.5px;font-size:12px;line-height:15px;color:#cc1c24;font-weight:bold;letter-spacing:-0.144px;">Apprentissage Calibration Guidage :</span>
<div style="left:628.75px;top:777px;width:72.25px;height:19.75px;background:#e4e4e4;border:1px solid #d0d0d0;box-shadow:inset 1px 1px 0 #fff"></div>
<div style="left:631.25px;top:779.5px;width:67.25px;height:13.75px;background:linear-gradient(#a8f6ff 0%,#40daec 45%,#18c0dc 60%,#0898b8 100%);border-radius:6.875px;border:1px solid rgba(0,0,0,.6);box-shadow:0 1.5px 1.5px rgba(0,0,0,.6), inset 0 1px 1px rgba(255,255,255,.8)"></div>
<span class="t" style="left:638.375px;top:779.4px;font-size:11.5px;line-height:14px;font-weight:bold;letter-spacing:-0.075px;">Start Now</span>
<div style="left:718px;top:172.5px;width:136.5px;height:23.5px;border:1px solid;border-color:#696969 #fff #fff #696969;box-shadow:inset 1px 1px 0 #a0a0a0, 1px 1px 0 #e3e3e3"></div>
<div style="left:727.5px;top:178.5px;width:13px;height:13px;border-radius:50%;background:#fff;border:1px solid #333"></div>
<div style="left:730.5px;top:181.5px;width:7px;height:7px;border-radius:50%;background:#222"></div>
<span class="t" style="left:747px;top:177.5px;font-size:12px;line-height:15px;letter-spacing:-0.814px;">Français</span>
<div style="left:792.0px;top:178.5px;width:13px;height:13px;border-radius:50%;background:#fff;border:1px solid #333"></div>
<span class="t" style="left:811px;top:177.5px;font-size:12px;line-height:15px;letter-spacing:-0.837px;">English</span>
<div style="left:858px;top:172.5px;width:107.5px;height:23.5px;border:1px solid;border-color:#696969 #fff #fff #696969;box-shadow:inset 1px 1px 0 #a0a0a0, 1px 1px 0 #e3e3e3"></div>
<div style="left:863.0px;top:178.5px;width:13px;height:13px;border-radius:50%;background:#fff;border:1px solid #333"></div>
<div style="left:866.0px;top:181.5px;width:7px;height:7px;border-radius:50%;background:#222"></div>
<span class="t" style="left:881.5px;top:177.5px;font-size:12px;line-height:15px;letter-spacing:-0.935px;">Color</span>
<div style="left:912.0px;top:178.5px;width:13px;height:13px;border-radius:50%;background:#fff;border:1px solid #333"></div>
<span class="t" style="left:931px;top:177.5px;font-size:12px;line-height:15px;letter-spacing:-0.879px;">Mono</span>
<div style="left:969.5px;top:172.5px;width:103.5px;height:23.5px;border:1px solid;border-color:#696969 #fff #fff #696969;box-shadow:inset 1px 1px 0 #a0a0a0, 1px 1px 0 #e3e3e3"></div>
<div style="left:974.5px;top:178.5px;width:12.5px;height:12.5px;background:#fff;border:1px solid #444"></div>
<svg class="a" style="left:974.5px;top:178.5px" width="12.5" height="12.5" viewBox="0 0 12.5 12.5"><path d="M2.6 6.4 L5.2 9 L10.2 3.4" stroke="#333" stroke-width="1.1" fill="none"/></svg>
<span class="t" style="left:993px;top:177.5px;font-size:12px;line-height:15px;letter-spacing:-0.678px;">Always On Top</span>
<div style="left:1203px;top:168px;width:97px;height:30.5px;background:#f4f4f4;border:1px solid #20a8a0;box-shadow:inset 0 0 0 1px #fff"></div>
<div style="left:1206px;top:170.5px;width:92px;height:26px;background:linear-gradient(#ffd878 0%,#ffb020 40%,#f89000 70%,#e07800 100%);border-radius:13px;border:1px solid #7a4a00;box-shadow:0 2px 0 #1a1000, inset 0 3px 4px rgba(255,255,255,.75)"></div>
<span class="t" style="left:1224.5px;top:168.5px;font-size:14px;line-height:18px;color:#0a0a48;font-weight:bold;font-family:'Liberation Serif';letter-spacing:1.240px;-webkit-text-stroke:.7px #0a0a48;">About us</span>
<span class="t" style="left:1232px;top:181.5px;font-size:14px;line-height:18px;color:#1274e4;font-weight:bold;letter-spacing:0.008px;font-style:italic;-webkit-text-stroke:.5px #1274e4;">Donate</span>
<span class="t" style="left:1210px;top:174.0px;font-size:15px;line-height:19px;color:#0a0a48;font-weight:bold;font-family:'Liberation Serif';letter-spacing:-1.200px;-webkit-text-stroke:.6px #0a0a48;">&amp;</span>
<div style="left:713px;top:204px;width:591px;height:1px;background:#fff"></div>
<div style="left:713px;top:210px;width:591px;height:591px;border:2px solid;border-color:#696969 #fff #fff #696969;background:#e3e3e3"></div>
<div style="left:715px;top:211px;width:588px;height:1px;background:#a0a0a0"></div>
<div style="left:779px;top:216.5px;width:122px;height:26px;background:#f0f0f0;border:1px solid #d4d4d4;border-bottom:none"></div>
<div style="left:716px;top:214px;width:63px;height:29px;background:#fff;border-right:1px solid #d8d8d8"></div>
<span class="t" style="left:723.5px;top:216.0px;font-size:18px;line-height:22px;letter-spacing:-0.254px;-webkit-text-stroke:.35px #000;">Cibles</span>
<span class="t" style="left:784.5px;top:218.0px;font-size:18px;line-height:22px;letter-spacing:-0.003px;-webkit-text-stroke:.35px #000;">Bias/Dark/Flat</span>
<div style="left:718px;top:243px;width:585px;height:553px;background:#bccce1;border:2px solid;border-color:#696969 #fff #fff #696969"></div>
<span class="t" style="left:733.3px;top:251.0px;font-size:14px;line-height:18px;color:#0c0c9c;font-weight:bold;letter-spacing:-0.007px;">Information Cible</span>
<div style="left:879px;top:251px;width:36px;height:25px;background:#ececec;border:1px solid #d0d0d0;box-shadow:inset 1px 1px 0 #fff"></div>
<svg class="a" style="left:879px;top:251px" width="36" height="25" viewBox="0 0 36 25"><ellipse cx="18.0" cy="13.3" rx="15.0" ry="9.5" fill="#b8b8b8"/><ellipse cx="18.0" cy="12.0" rx="15.0" ry="9.5" fill="url(#gHelp)"/><ellipse cx="18.0" cy="7.725" rx="10.799999999999999" ry="3.9899999999999998" fill="#fff" opacity=".28"/><text x="18.0" y="16.445999999999998" text-anchor="middle" font-family="Liberation Sans" font-weight="bold" font-size="12.3" fill="#fff" textLength="24.3" lengthAdjust="spacingAndGlyphs">HELP</text></svg>
<div style="left:732.5px;top:276.5px;width:65px;height:36.5px;background:#fff;border:1px solid #98a8c0"></div>
<div style="left:733.5px;top:277.5px;width:49px;height:34.5px;background:#00ff00"></div>
<span class="t" style="left:749.935546875px;top:277.0px;font-size:29px;line-height:36px;font-weight:bold;">1</span>
<div style="left:783px;top:277.5px;width:13.5px;height:34.5px;background:#f0f0f0;border-left:1px solid #c0c0c0"></div>
<div style="left:783px;top:294.5px;width:13.5px;height:1px;background:#c8c8c8"></div>
<svg class="a" style="left:786px;top:281px" width="8" height="28" viewBox="0 0 8 28"><path d="M0.5 7 L3.5 3.5 L6.5 7Z M0.5 21 L3.5 24.5 L6.5 21Z" fill="#000"/></svg>
<div class="fl" style="left:804px;top:282.5px;width:118px;height:25px;"></div>
<span class="t" style="left:807.5px;top:285.0px;font-size:17px;line-height:21px;letter-spacing:-0.949px;">M 94</span>
<div class="mb" style="left:924.5px;top:261.5px;width:68.5px;height:30.5px;"></div>
<span class="t" style="left:939.0px;top:264.8px;font-size:10px;line-height:12px;letter-spacing:-0.552px;">Demande</span>
<span class="t" style="left:935.75px;top:276.8px;font-size:10px;line-height:12px;letter-spacing:-0.476px;">Planiciel &gt;&gt;</span>
<div class="mb" style="left:995.5px;top:261.5px;width:68.5px;height:30.5px;"></div>
<span class="t" style="left:1010.0px;top:264.8px;font-size:10px;line-height:12px;letter-spacing:-0.553px;">&lt;&lt; Coord.</span>
<span class="t" style="left:1014.5px;top:276.8px;font-size:10px;line-height:12px;letter-spacing:-0.196px;">Mosaic</span>
<div class="mb" style="left:1066.5px;top:261.5px;width:68.5px;height:30.5px;"></div>
<span class="t" style="left:1081.0px;top:264.8px;font-size:10px;line-height:12px;letter-spacing:-0.553px;">&lt;&lt; Coord.</span>
<span class="t" style="left:1079.75px;top:276.8px;font-size:10px;line-height:12px;letter-spacing:-0.337px;">Telescope</span>
<div class="mb" style="left:924.5px;top:295.5px;width:68.5px;height:30.5px;"></div>
<span class="t" style="left:939.0px;top:298.8px;font-size:10px;line-height:12px;letter-spacing:-0.553px;">&lt;&lt; Coord.</span>
<span class="t" style="left:931.75px;top:310.8px;font-size:10px;line-height:12px;letter-spacing:-0.312px;">Cur. Planiciel</span>
<div class="mb" style="left:995.5px;top:295.5px;width:68.5px;height:30.5px;"></div>
<span class="t" style="left:1010.0px;top:298.8px;font-size:10px;line-height:12px;letter-spacing:-0.553px;">&lt;&lt; Coord.</span>
<span class="t" style="left:1009.25px;top:310.8px;font-size:10px;line-height:12px;letter-spacing:-0.264px;">Fichier Fit</span>
<div class="mb" style="left:1066.5px;top:295.5px;width:68.5px;height:30.5px;"></div>
<span class="t" style="left:1079.25px;top:304.8px;font-size:10px;line-height:12px;letter-spacing:-0.426px;">Goto Cible</span>
<span class="t" style="left:1177.3px;top:255.7px;font-size:10px;line-height:12px;color:#1010f0;letter-spacing:-0.451px;">Heure Dep. Cible</span>
<div style="left:1175.5px;top:269px;width:36.5px;height:17.5px;background:#f0f0f0;border:1px solid #c4ccd8"></div>
<span class="t" style="left:1181.65234375px;top:270.2px;font-size:12px;line-height:15px;color:#6d6d6d;">22</span>
<svg class="a" style="left:1199px;top:271.25px" width="8" height="13" viewBox="0 0 8 13"><path d="M0.5 4.5 L3.5 1 L6.5 4.5Z M0.5 8.5 L3.5 12 L6.5 8.5Z" fill="#8a8a8a"/></svg>
<span class="t" style="left:1216.7px;top:272.5px;font-size:10px;line-height:12px;font-weight:bold;">H</span>
<div style="left:1225.5px;top:269px;width:38.0px;height:17.5px;background:#f0f0f0;border:1px solid #c4ccd8"></div>
<span class="t" style="left:1239.826171875px;top:270.2px;font-size:12px;line-height:15px;color:#6d6d6d;">3</span>
<svg class="a" style="left:1250.5px;top:271.25px" width="8" height="13" viewBox="0 0 8 13"><path d="M0.5 4.5 L3.5 1 L6.5 4.5Z M0.5 8.5 L3.5 12 L6.5 8.5Z" fill="#8a8a8a"/></svg>
<span class="t" style="left:1156px;top:293.5px;font-size:10px;line-height:12px;color:#1010f0;letter-spacing:-0.338px;">Heure Maxi Cible (secutité)</span>
<div style="left:1154.3px;top:310px;width:12.5px;height:12.5px;background:#fff;border:1px solid #444"></div>
<div style="left:1175.5px;top:307.5px;width:36.5px;height:18.5px;background:#f0f0f0;border:1px solid #c4ccd8"></div>
<span class="t" style="left:1188.326171875px;top:309.2px;font-size:12px;line-height:15px;color:#6d6d6d;">0</span>
<svg class="a" style="left:1199px;top:310.25px" width="8" height="13" viewBox="0 0 8 13"><path d="M0.5 4.5 L3.5 1 L6.5 4.5Z M0.5 8.5 L3.5 12 L6.5 8.5Z" fill="#8a8a8a"/></svg>
<span class="t" style="left:1216.7px;top:311.5px;font-size:10px;line-height:12px;font-weight:bold;">H</span>
<div style="left:1225.5px;top:307.5px;width:38.0px;height:18.5px;background:#f0f0f0;border:1px solid #c4ccd8"></div>
<span class="t" style="left:1239.826171875px;top:309.2px;font-size:12px;line-height:15px;color:#6d6d6d;">0</span>
<svg class="a" style="left:1250.5px;top:310.25px" width="8" height="13" viewBox="0 0 8 13"><path d="M0.5 4.5 L3.5 1 L6.5 4.5Z M0.5 8.5 L3.5 12 L6.5 8.5Z" fill="#8a8a8a"/></svg>
<div class="mb" style="left:728.5px;top:319.5px;width:76.5px;height:18.0px;"></div>
<span class="t" style="left:741.75px;top:322.5px;font-size:10px;line-height:12px;letter-spacing:-0.431px;">Lit une Cible</span>
<div class="mb" style="left:808px;top:319.5px;width:62.5px;height:18.0px;"></div>
<span class="t" style="left:815.75px;top:322.5px;font-size:10px;line-height:12px;letter-spacing:-0.580px;">Load Series</span>
<div class="mb" style="left:728.5px;top:339.7px;width:76.5px;height:17.80000000000001px;"></div>
<span class="t" style="left:738.75px;top:342.6px;font-size:10px;line-height:12px;letter-spacing:-0.448px;">Sauve ct cible</span>
<div class="mb" style="left:808px;top:339.7px;width:62.5px;height:17.80000000000001px;"></div>
<span class="t" style="left:815.25px;top:342.6px;font-size:10px;line-height:12px;letter-spacing:-0.538px;">Save Series</span>
<div class="mb" style="left:728.5px;top:359.5px;width:76.5px;height:17.69999999999999px;"></div>
<span class="t" style="left:742.75px;top:362.4px;font-size:10px;line-height:12px;letter-spacing:-0.356px;">Lit Tt Cibles</span>
<div class="mb" style="left:728.5px;top:379.5px;width:76.5px;height:17.5px;"></div>
<span class="t" style="left:734.75px;top:382.2px;font-size:10px;line-height:12px;letter-spacing:-0.428px;">Sauve Tt Cibles</span>
<div class="mb" style="left:924.5px;top:336.6px;width:33.5px;height:17.799999999999955px;"></div>
<span class="t" style="left:927.75px;top:339.5px;font-size:10px;line-height:12px;letter-spacing:-0.410px;">Copier</span>
<div class="mb" style="left:959.7px;top:336.6px;width:35.0px;height:17.799999999999955px;"></div>
<span class="t" style="left:964.7px;top:339.5px;font-size:10px;line-height:12px;letter-spacing:-0.187px;">Coller</span>
<div class="mb" style="left:997.2px;top:336.6px;width:41.200000000000045px;height:17.799999999999955px;"></div>
<span class="t" style="left:1004.3000000000001px;top:339.5px;font-size:10px;line-height:12px;letter-spacing:-0.495px;">Coupe</span>
<div class="mb" style="left:1051.6px;top:336.6px;width:32.15000000000009px;height:17.799999999999955px;"></div>
<span class="t" style="left:1058.675px;top:339.5px;font-size:10px;line-height:12px;letter-spacing:-0.503px;">Ech.</span>
<div style="left:1086px;top:335.5px;width:38px;height:18.5px;background:#fff;border:1px solid #8a9ab0"></div>
<span class="t" style="left:1102.026171875px;top:337.2px;font-size:12px;line-height:15px;color:#000;">1</span>
<div style="left:1110px;top:336.5px;width:13px;height:16.5px;background:#f0f0f0;border-left:1px solid #d0d0d0"></div>
<div style="left:1110px;top:344.25px;width:13px;height:1px;background:#d8d8d8"></div>
<svg class="a" style="left:1113px;top:338.25px" width="8" height="13" viewBox="0 0 8 13"><path d="M1 4.4 L3.5 1.4 L6 4.4Z M1 8.6 L3.5 11.6 L6 8.6Z" fill="#000"/></svg>
<span class="t" style="left:860.3px;top:360.5px;font-size:12px;line-height:15px;letter-spacing:-0.669px;">RA :</span>
<div class="tl" style="left:888px;top:359px;width:89px;height:17.5px;"></div>
<span class="t" style="left:897.0px;top:360.2px;font-size:12px;line-height:15px;color:#fff;letter-spacing:-0.756px;">12h51m39.797</span>
<span class="t" style="left:983px;top:360.5px;font-size:12px;line-height:15px;letter-spacing:-0.402px;">Dec :</span>
<div class="tl" style="left:1014px;top:359px;width:89px;height:17.5px;"></div>
<span class="t" style="left:1023.0px;top:360.2px;font-size:12px;line-height:15px;color:#fff;letter-spacing:-0.644px;">+41d02'03.907</span>
<div class="mb" style="left:1106.6px;top:361px;width:25.6px;height:14px;"></div>
<div style="left:1109.4px;top:363.5px;width:20.6px;height:9.5px;background:#ffa500"></div>
<span class="t" style="left:1114.5px;top:363.3px;font-size:8px;line-height:10px;letter-spacing:-0.669px;">Set</span>
<span class="t" style="left:836.25px;top:386.3px;font-size:12px;line-height:15px;letter-spacing:-0.838px;white-space:pre;">Transit  Time :</span>
<div class="tl" style="left:905.6px;top:385px;width:56.89999999999998px;height:17.80000000000001px;"></div>
<span class="t" style="left:918.05px;top:386.4px;font-size:12px;line-height:15px;color:#fff;letter-spacing:-0.672px;">23H48</span>
<span class="t" style="left:968px;top:386.3px;font-size:12px;line-height:15px;letter-spacing:-0.802px;">Mag :</span>
<div class="tl" style="left:999.4px;top:385px;width:42.19999999999993px;height:17.80000000000001px;"></div>
<span class="t" style="left:1013.0px;top:386.4px;font-size:12px;line-height:15px;color:#fff;letter-spacing:-0.561px;">8,1</span>
<span class="t" style="left:1046.25px;top:386.3px;font-size:12px;line-height:15px;letter-spacing:-0.781px;">Angl :</span>
<div class="tl" style="left:1079px;top:385px;width:42.25px;height:17.80000000000001px;"></div>
<span class="t" style="left:1082.125px;top:386.4px;font-size:12px;line-height:15px;color:#fff;letter-spacing:-0.117px;">178,83</span>
<span class="t" style="left:1144px;top:339.3px;font-size:10px;line-height:12px;color:#1010f0;letter-spacing:-0.487px;">Durée de la Cible</span>
<div class="tl" style="left:1148px;top:354.7px;width:60px;height:17.80000000000001px;"></div>
<span class="t" style="left:1165.0px;top:355.6px;font-size:13px;line-height:16px;color:#fff;letter-spacing:-1.200px;">7H42</span>
<span class="t" style="left:1230px;top:339.3px;font-size:10px;line-height:12px;color:#1010f0;letter-spacing:-0.362px;">Durée tt cibles</span>
<div class="tl" style="left:1227.5px;top:354.7px;width:61.0px;height:17.80000000000001px;"></div>
<span class="t" style="left:1245.0px;top:355.6px;font-size:13px;line-height:16px;color:#fff;letter-spacing:-1.200px;">7H49</span>
<span class="t" style="left:1138.4px;top:374.6px;font-size:10px;line-height:12px;color:#1010f0;letter-spacing:-0.494px;">Heure Fin de Cible</span>
<div class="tl" style="left:1148px;top:387.5px;width:60px;height:17.80000000000001px;"></div>
<span class="t" style="left:1165.0px;top:388.4px;font-size:13px;line-height:16px;color:#fff;letter-spacing:-1.200px;">5H45</span>
<span class="t" style="left:1223.4px;top:374.6px;font-size:10px;line-height:12px;color:#1010f0;letter-spacing:-0.400px;">Heure Fin tt cibles</span>
<div class="tl" style="left:1227.5px;top:387.5px;width:61.0px;height:17.80000000000001px;"></div>
<span class="t" style="left:1245.0px;top:388.4px;font-size:13px;line-height:16px;color:#fff;letter-spacing:-1.200px;">5H52</span>
<div style="left:720px;top:415px;width:583px;height:48px;background:#a2bbdc"></div>
<span class="t" style="left:733px;top:418.0px;font-size:14px;line-height:18px;color:#0c0c9c;font-weight:bold;letter-spacing:0.252px;">Cible MAP</span>
<span class="t" style="left:914px;top:420.5px;font-size:12px;line-height:15px;letter-spacing:-0.696px;">Nom Etoile :</span>
<div class="tl" style="left:980px;top:419.5px;width:89px;height:17.0px;"></div>
<span class="t" style="left:1010.5px;top:420.5px;font-size:12px;line-height:15px;color:#fff;letter-spacing:-0.937px;">Chara</span>
<div style="left:731.25px;top:442.5px;width:12.5px;height:12.5px;background:#fff;border:1px solid #444"></div>
<svg class="a" style="left:731.25px;top:442.5px" width="12.5" height="12.5" viewBox="0 0 12.5 12.5"><path d="M2.6 6.4 L5.2 9 L10.2 3.4" stroke="#333" stroke-width="1.1" fill="none"/></svg>
<span class="t" style="left:749.4px;top:440.9px;font-size:12px;line-height:15px;letter-spacing:-0.610px;">aller a cette cible pour la MAP</span>
<span class="t" style="left:902px;top:440.9px;font-size:12px;line-height:15px;letter-spacing:-0.669px;">RA :</span>
<div class="tl" style="left:927.5px;top:440.5px;width:89.5px;height:17.30000000000001px;"></div>
<span class="t" style="left:936.75px;top:441.6px;font-size:12px;line-height:15px;color:#fff;letter-spacing:-0.756px;">12h34m32.529</span>
<span class="t" style="left:1021.25px;top:440.9px;font-size:12px;line-height:15px;letter-spacing:-0.602px;">Dec :</span>
<div class="tl" style="left:1052px;top:440.5px;width:89.5px;height:17.30000000000001px;"></div>
<span class="t" style="left:1061.25px;top:441.6px;font-size:12px;line-height:15px;color:#fff;letter-spacing:-0.644px;">+41d16'09.496</span>
<div class="mb" style="left:1151.6px;top:421px;width:68.70000000000005px;height:35px;"></div>
<span class="t" style="left:1166.1999999999998px;top:426.5px;font-size:10px;line-height:12px;letter-spacing:-0.553px;">&lt;&lt; Coord.</span>
<span class="t" style="left:1158.9499999999998px;top:438.5px;font-size:10px;line-height:12px;letter-spacing:-0.312px;">Cur. Planiciel</span>
<div class="mb" style="left:1226.6px;top:421px;width:68.70000000000005px;height:35px;"></div>
<span class="t" style="left:1237.9499999999998px;top:426.5px;font-size:10px;line-height:12px;letter-spacing:-0.570px;">Goto Focus</span>
<span class="t" style="left:1247.4499999999998px;top:438.5px;font-size:10px;line-height:12px;letter-spacing:-0.133px;">Target</span>
<div style="left:720px;top:463px;width:583px;height:2px;background:#fff"></div>
<div style="left:720px;top:465px;width:583px;height:2px;background:#8a8a8a"></div>
<div style="left:720px;top:467px;width:583px;height:44px;background:#bccce1"></div>
<div style="left:1051px;top:467.5px;width:252px;height:42.5px;background:#a2bbdc;border-left:1px solid #fff"></div>
<span class="t" style="left:733px;top:480.0px;font-size:14px;line-height:18px;color:#0c0c9c;font-weight:bold;letter-spacing:0.161px;">Planning Cible</span>
<div style="left:871.25px;top:470.3px;width:117.75px;height:33.5px;background:#e4e4e4;border:1px solid #c8c8c8;box-shadow:inset 1px 1px 0 #fff"></div>
<div style="left:874.4px;top:473.4px;width:111.6px;height:27.2px;background:#00ff00"></div>
<span class="t" style="left:892.5px;top:479.5px;font-size:13px;line-height:16px;font-weight:bold;letter-spacing:-0.036px;">Cible Active</span>
<div style="left:1001px;top:475.5px;width:36px;height:25px;background:#ececec;border:1px solid #d0d0d0;box-shadow:inset 1px 1px 0 #fff"></div>
<svg class="a" style="left:1001px;top:475.5px" width="36" height="25" viewBox="0 0 36 25"><ellipse cx="18.0" cy="13.3" rx="15.0" ry="9.5" fill="#b8b8b8"/><ellipse cx="18.0" cy="12.0" rx="15.0" ry="9.5" fill="url(#gHelp)"/><ellipse cx="18.0" cy="7.725" rx="10.799999999999999" ry="3.9899999999999998" fill="#fff" opacity=".28"/><text x="18.0" y="16.445999999999998" text-anchor="middle" font-family="Liberation Sans" font-weight="bold" font-size="12.3" fill="#fff" textLength="24.3" lengthAdjust="spacingAndGlyphs">HELP</text></svg>
<div style="left:1057.2px;top:481.25px;width:12.5px;height:12.5px;background:#fff;border:1px solid #444"></div>
<span class="t" style="left:1076px;top:480.5px;font-size:12px;line-height:15px;letter-spacing:-0.745px;white-space:pre;">Dark  Anti-Rémanance avant Expo</span>
<span class="t" style="left:1258px;top:469.2px;font-size:9px;line-height:11px;color:#18a018;letter-spacing:-0.004px;">second</span>
<div style="left:1255.6px;top:480.3px;width:37.40000000000009px;height:17.69999999999999px;background:#fff;border:1px solid #8a9ab0"></div>
<span class="t" style="left:1264.35234375px;top:481.6px;font-size:12px;line-height:15px;color:#000;">30</span>
<div style="left:1279px;top:481.3px;width:13px;height:15.699999999999989px;background:#f0f0f0;border-left:1px solid #d0d0d0"></div>
<div style="left:1279px;top:488.65px;width:13px;height:1px;background:#d8d8d8"></div>
<svg class="a" style="left:1282px;top:482.65px" width="8" height="13" viewBox="0 0 8 13"><path d="M1 4.4 L3.5 1.4 L6 4.4Z M1 8.6 L3.5 11.6 L6 8.6Z" fill="#000"/></svg>
<div style="left:721.5px;top:510.5px;width:16px;height:281px;background:#ff7f50;border:1px solid #000"></div>
<span class="t" style="left:725.3880859375px;top:638.0px;font-size:11px;line-height:14px;">&lt;</span>
<span class="t" style="left:725.3880859375px;top:651.6px;font-size:11px;line-height:14px;">&lt;</span>
<div style="left:738px;top:511px;width:369px;height:18.5px;background:#a0a0a0;border-bottom:1px solid #696969"></div>
<div style="left:1109px;top:511px;width:44px;height:18.5px;background:#a0a0a0;border-bottom:1px solid #696969"></div>
<div style="left:1154.5px;top:511px;width:149px;height:18.5px;background:#a0a0a0;border-bottom:1px solid #696969"></div>
<div style="left:1107px;top:511px;width:2px;height:281px;background:#8a8a8a"></div>
<div style="left:1153px;top:511px;width:1.5px;height:281px;background:#8a8a8a"></div>
<div style="left:1109px;top:529.5px;width:44px;height:262px;background:#a2bbdc"></div>
<div style="left:738px;top:791px;width:565px;height:1.5px;background:#8a8a8a"></div>
<span class="t" style="left:908.5px;top:513.0px;font-size:12px;line-height:15px;color:#fff;letter-spacing:-0.946px;">IMAGES</span>
<span class="t" style="left:1113.5px;top:513.0px;font-size:12px;line-height:15px;color:#fff;letter-spacing:-0.801px;">GUIDE</span>
<span class="t" style="left:1177.5px;top:513.0px;font-size:12px;line-height:15px;color:#fff;letter-spacing:-0.747px;">MAP/ASTROMETRY</span>
<span class="t" style="left:741.2px;top:545.8px;font-size:12px;line-height:15px;letter-spacing:-1.002px;">Series</span>
<span class="t" style="left:779px;top:545.8px;font-size:12px;line-height:15px;letter-spacing:-0.716px;">Suffix</span>
<span class="t" style="left:872px;top:545.8px;font-size:12px;line-height:15px;letter-spacing:-0.945px;">Nbr</span>
<span class="t" style="left:904.4px;top:545.8px;font-size:12px;line-height:15px;letter-spacing:-1.030px;">Faites</span>
<span class="t" style="left:942px;top:545.8px;font-size:12px;line-height:15px;letter-spacing:-0.864px;">Expos.</span>
<span class="t" style="left:999.8px;top:545.8px;font-size:12px;line-height:15px;letter-spacing:-0.861px;">Filtre</span>
<span class="t" style="left:1063px;top:545.8px;font-size:12px;line-height:15px;letter-spacing:-0.790px;">Binning</span>
<span class="t" style="left:1117.2px;top:533.3px;font-size:12px;line-height:15px;letter-spacing:-1.004px;">Guide</span>
<span class="t" style="left:1115.2px;top:545.2px;font-size:12px;line-height:15px;letter-spacing:-0.948px;">Expos.</span>
<span class="t" style="left:1161.25px;top:533.3px;font-size:12px;line-height:15px;letter-spacing:-0.627px;">fait</span>
<span class="t" style="left:1155.45px;top:545.2px;font-size:12px;line-height:15px;letter-spacing:-0.904px;">Debut</span>
<span class="t" style="left:1194.5px;top:533.3px;font-size:12px;line-height:15px;letter-spacing:-0.725px;">Refait</span>
<span class="t" style="left:1192.0px;top:545.2px;font-size:12px;line-height:15px;letter-spacing:-0.575px;">tt expo</span>
<span class="t" style="left:1231.5px;top:533.3px;font-size:12px;line-height:15px;letter-spacing:-1.200px;">MAP</span>
<span class="t" style="left:1230.5px;top:545.2px;font-size:12px;line-height:15px;letter-spacing:-1.200px;">Mag</span>
<span class="t" style="left:1273.0px;top:533.3px;font-size:12px;line-height:15px;letter-spacing:-1.200px;">MAP</span>
<span class="t" style="left:1268.5px;top:545.2px;font-size:12px;line-height:15px;letter-spacing:-0.948px;">Expos.</span>
<span class="t" style="left:744.126171875px;top:566.1px;font-size:12px;line-height:15px;">1</span>
<div style="left:751.4px;top:567.3000000000001px;width:12.5px;height:12.5px;background:#fff;border:1px solid #444"></div>
<svg class="a" style="left:751.4px;top:567.3000000000001px" width="12.5" height="12.5" viewBox="0 0 12.5 12.5"><path d="M2.6 6.4 L5.2 9 L10.2 3.4" stroke="#333" stroke-width="1.1" fill="none"/></svg>
<div class="fl" style="left:766.3px;top:564.3000000000001px;width:75.4px;height:18.799999999999955px;"></div>
<span class="t" style="left:769.5px;top:566.1px;font-size:12px;line-height:15px;">V</span>
<div style="left:843.2px;top:567.6px;width:10px;height:13px;background:#00e5ff;border:1px solid #000"></div>
<svg class="a" style="left:843.2px;top:567.6px" width="10" height="13" viewBox="0 0 10 13"><path d="M2 3 H8 L5 11Z" fill="#000"/></svg>
<div style="left:854.3px;top:567.6px;width:10px;height:13px;background:#ff2040;border:1px solid #000"></div>
<svg class="a" style="left:854.3px;top:567.6px" width="10" height="13" viewBox="0 0 10 13"><path d="M2 11 H8 L5 3Z" fill="#000"/></svg>
<div style="left:865.6px;top:564.3000000000001px;width:36.69999999999993px;height:18.799999999999955px;background:#fff;border:1px solid #8a9ab0"></div>
<span class="t" style="left:873.65234375px;top:566.2px;font-size:12px;line-height:15px;color:#000;">12</span>
<div style="left:888.3px;top:565.3000000000001px;width:13px;height:16.799999999999955px;background:#f0f0f0;border-left:1px solid #d0d0d0"></div>
<div style="left:888.3px;top:573.2px;width:13px;height:1px;background:#d8d8d8"></div>
<svg class="a" style="left:891.3px;top:567.2px" width="8" height="13" viewBox="0 0 8 13"><path d="M1 4.4 L3.5 1.4 L6 4.4Z M1 8.6 L3.5 11.6 L6 8.6Z" fill="#000"/></svg>
<div class="tl" style="left:905px;top:564.3000000000001px;width:30px;height:18.799999999999955px;"></div>
<span class="t" style="left:916.6630859375px;top:566.1px;font-size:12px;line-height:15px;color:#fff;">0</span>
<div style="left:937.2px;top:564.3000000000001px;width:57.19999999999993px;height:18.799999999999955px;background:#fff;border:1px solid #8a9ab0"></div>
<span class="t" style="left:942.396875px;top:566.2px;font-size:12px;line-height:15px;color:#000;">300,00</span>
<div style="left:980.4px;top:565.3000000000001px;width:13px;height:16.799999999999955px;background:#f0f0f0;border-left:1px solid #d0d0d0"></div>
<div style="left:980.4px;top:573.2px;width:13px;height:1px;background:#d8d8d8"></div>
<svg class="a" style="left:983.4px;top:567.2px" width="8" height="13" viewBox="0 0 8 13"><path d="M1 4.4 L3.5 1.4 L6 4.4Z M1 8.6 L3.5 11.6 L6 8.6Z" fill="#000"/></svg>
<div class="fl" style="left:996.2px;top:564.3000000000001px;width:63.799999999999955px;height:18.799999999999955px;"></div>
<span class="t" style="left:999.2px;top:566.2px;font-size:12px;line-height:15px;letter-spacing:-0.336px;max-width:44.799999999999955px;overflow:hidden;">Vert</span>
<svg class="a" style="left:1046px;top:570.7px" width="10" height="6" viewBox="0 0 10 6"><path d="M1 1 L5 5 L9 1" stroke="#333" stroke-width="1.1" fill="none"/></svg>
<div class="fl" style="left:1061.6px;top:564.3000000000001px;width:43.80000000000018px;height:18.799999999999955px;"></div>
<span class="t" style="left:1064.6px;top:566.2px;font-size:12px;line-height:15px;letter-spacing:-0.784px;max-width:24.800000000000182px;overflow:hidden;">1X1</span>
<svg class="a" style="left:1091.4px;top:570.7px" width="10" height="6" viewBox="0 0 10 6"><path d="M1 1 L5 5 L9 1" stroke="#333" stroke-width="1.1" fill="none"/></svg>
<div style="left:1110px;top:564.3000000000001px;width:39.5px;height:18.799999999999955px;background:#fff;border:1px solid #8a9ab0"></div>
<span class="t" style="left:1117.518359375px;top:566.2px;font-size:12px;line-height:15px;color:#000;">3,0</span>
<div style="left:1135.5px;top:565.3000000000001px;width:13px;height:16.799999999999955px;background:#f0f0f0;border-left:1px solid #d0d0d0"></div>
<div style="left:1135.5px;top:573.2px;width:13px;height:1px;background:#d8d8d8"></div>
<svg class="a" style="left:1138.5px;top:567.2px" width="8" height="13" viewBox="0 0 8 13"><path d="M1 4.4 L3.5 1.4 L6 4.4Z M1 8.6 L3.5 11.6 L6 8.6Z" fill="#000"/></svg>
<div style="left:1164.4px;top:567.3000000000001px;width:12.5px;height:12.5px;background:#fff;border:1px solid #444"></div>
<svg class="a" style="left:1164.4px;top:567.3000000000001px" width="12.5" height="12.5" viewBox="0 0 12.5 12.5"><path d="M2.6 6.4 L5.2 9 L10.2 3.4" stroke="#333" stroke-width="1.1" fill="none"/></svg>
<div style="left:1186px;top:564.3000000000001px;width:37px;height:18.799999999999955px;background:#fff;border:1px solid #8a9ab0"></div>
<span class="t" style="left:1201.026171875px;top:566.2px;font-size:12px;line-height:15px;color:#000;">6</span>
<div style="left:1209px;top:565.3000000000001px;width:13px;height:16.799999999999955px;background:#f0f0f0;border-left:1px solid #d0d0d0"></div>
<div style="left:1209px;top:573.2px;width:13px;height:1px;background:#d8d8d8"></div>
<svg class="a" style="left:1212px;top:567.2px" width="8" height="13" viewBox="0 0 8 13"><path d="M1 4.4 L3.5 1.4 L6 4.4Z M1 8.6 L3.5 11.6 L6 8.6Z" fill="#000"/></svg>
<div style="left:1226px;top:564.3000000000001px;width:36px;height:18.799999999999955px;background:#f0f0f0;border:1px solid #c4ccd8"></div>
<span class="t" style="left:1240.026171875px;top:566.2px;font-size:12px;line-height:15px;color:#6d6d6d;">2</span>
<svg class="a" style="left:1251px;top:567.2px" width="8" height="13" viewBox="0 0 8 13"><path d="M1 4.4 L3.5 1.4 L6 4.4Z M1 8.6 L3.5 11.6 L6 8.6Z" fill="#9a9a9a"/></svg>
<div style="left:1265px;top:564.3000000000001px;width:38px;height:18.799999999999955px;background:#fff;border:1px solid #8a9ab0"></div>
<span class="t" style="left:1271.018359375px;top:566.2px;font-size:12px;line-height:15px;color:#000;">3,0</span>
<div style="left:1289px;top:565.3000000000001px;width:13px;height:16.799999999999955px;background:#f0f0f0;border-left:1px solid #d0d0d0"></div>
<div style="left:1289px;top:573.2px;width:13px;height:1px;background:#d8d8d8"></div>
<svg class="a" style="left:1292px;top:567.2px" width="8" height="13" viewBox="0 0 8 13"><path d="M1 4.4 L3.5 1.4 L6 4.4Z M1 8.6 L3.5 11.6 L6 8.6Z" fill="#000"/></svg>
<span class="t" style="left:744.126171875px;top:603.4px;font-size:12px;line-height:15px;">2</span>
<div style="left:751.4px;top:604.6px;width:12.5px;height:12.5px;background:#fff;border:1px solid #444"></div>
<svg class="a" style="left:751.4px;top:604.6px" width="12.5" height="12.5" viewBox="0 0 12.5 12.5"><path d="M2.6 6.4 L5.2 9 L10.2 3.4" stroke="#333" stroke-width="1.1" fill="none"/></svg>
<div class="fl" style="left:766.3px;top:601.6px;width:75.4px;height:18.799999999999955px;"></div>
<span class="t" style="left:769.5px;top:603.4px;font-size:12px;line-height:15px;">B</span>
<div style="left:843.2px;top:604.9px;width:10px;height:13px;background:#00e5ff;border:1px solid #000"></div>
<svg class="a" style="left:843.2px;top:604.9px" width="10" height="13" viewBox="0 0 10 13"><path d="M2 3 H8 L5 11Z" fill="#000"/></svg>
<div style="left:854.3px;top:604.9px;width:10px;height:13px;background:#ff2040;border:1px solid #000"></div>
<svg class="a" style="left:854.3px;top:604.9px" width="10" height="13" viewBox="0 0 10 13"><path d="M2 11 H8 L5 3Z" fill="#000"/></svg>
<div style="left:865.6px;top:601.6px;width:36.69999999999993px;height:18.799999999999955px;background:#fff;border:1px solid #8a9ab0"></div>
<span class="t" style="left:873.65234375px;top:603.5px;font-size:12px;line-height:15px;color:#000;">12</span>
<div style="left:888.3px;top:602.6px;width:13px;height:16.799999999999955px;background:#f0f0f0;border-left:1px solid #d0d0d0"></div>
<div style="left:888.3px;top:610.5px;width:13px;height:1px;background:#d8d8d8"></div>
<svg class="a" style="left:891.3px;top:604.5px" width="8" height="13" viewBox="0 0 8 13"><path d="M1 4.4 L3.5 1.4 L6 4.4Z M1 8.6 L3.5 11.6 L6 8.6Z" fill="#000"/></svg>
<div class="tl" style="left:905px;top:601.6px;width:30px;height:18.799999999999955px;"></div>
<span class="t" style="left:916.6630859375px;top:603.4px;font-size:12px;line-height:15px;color:#fff;">0</span>
<div style="left:937.2px;top:601.6px;width:57.19999999999993px;height:18.799999999999955px;background:#fff;border:1px solid #8a9ab0"></div>
<span class="t" style="left:942.396875px;top:603.5px;font-size:12px;line-height:15px;color:#000;">300,00</span>
<div style="left:980.4px;top:602.6px;width:13px;height:16.799999999999955px;background:#f0f0f0;border-left:1px solid #d0d0d0"></div>
<div style="left:980.4px;top:610.5px;width:13px;height:1px;background:#d8d8d8"></div>
<svg class="a" style="left:983.4px;top:604.5px" width="8" height="13" viewBox="0 0 8 13"><path d="M1 4.4 L3.5 1.4 L6 4.4Z M1 8.6 L3.5 11.6 L6 8.6Z" fill="#000"/></svg>
<div class="fl" style="left:996.2px;top:601.6px;width:63.799999999999955px;height:18.799999999999955px;"></div>
<span class="t" style="left:999.2px;top:603.5px;font-size:12px;line-height:15px;letter-spacing:-0.504px;max-width:44.799999999999955px;overflow:hidden;">Bleu</span>
<svg class="a" style="left:1046px;top:608.0px" width="10" height="6" viewBox="0 0 10 6"><path d="M1 1 L5 5 L9 1" stroke="#333" stroke-width="1.1" fill="none"/></svg>
<div class="fl" style="left:1061.6px;top:601.6px;width:43.80000000000018px;height:18.799999999999955px;"></div>
<span class="t" style="left:1064.6px;top:603.5px;font-size:12px;line-height:15px;letter-spacing:-0.784px;max-width:24.800000000000182px;overflow:hidden;">1X1</span>
<svg class="a" style="left:1091.4px;top:608.0px" width="10" height="6" viewBox="0 0 10 6"><path d="M1 1 L5 5 L9 1" stroke="#333" stroke-width="1.1" fill="none"/></svg>
<div style="left:1110px;top:601.6px;width:39.5px;height:18.799999999999955px;background:#fff;border:1px solid #8a9ab0"></div>
<span class="t" style="left:1117.518359375px;top:603.5px;font-size:12px;line-height:15px;color:#000;">3,0</span>
<div style="left:1135.5px;top:602.6px;width:13px;height:16.799999999999955px;background:#f0f0f0;border-left:1px solid #d0d0d0"></div>
<div style="left:1135.5px;top:610.5px;width:13px;height:1px;background:#d8d8d8"></div>
<svg class="a" style="left:1138.5px;top:604.5px" width="8" height="13" viewBox="0 0 8 13"><path d="M1 4.4 L3.5 1.4 L6 4.4Z M1 8.6 L3.5 11.6 L6 8.6Z" fill="#000"/></svg>
<div style="left:1164.4px;top:604.6px;width:12.5px;height:12.5px;background:#fff;border:1px solid #444"></div>
<svg class="a" style="left:1164.4px;top:604.6px" width="12.5" height="12.5" viewBox="0 0 12.5 12.5"><path d="M2.6 6.4 L5.2 9 L10.2 3.4" stroke="#333" stroke-width="1.1" fill="none"/></svg>
<div style="left:1186px;top:601.6px;width:37px;height:18.799999999999955px;background:#fff;border:1px solid #8a9ab0"></div>
<span class="t" style="left:1201.026171875px;top:603.5px;font-size:12px;line-height:15px;color:#000;">6</span>
<div style="left:1209px;top:602.6px;width:13px;height:16.799999999999955px;background:#f0f0f0;border-left:1px solid #d0d0d0"></div>
<div style="left:1209px;top:610.5px;width:13px;height:1px;background:#d8d8d8"></div>
<svg class="a" style="left:1212px;top:604.5px" width="8" height="13" viewBox="0 0 8 13"><path d="M1 4.4 L3.5 1.4 L6 4.4Z M1 8.6 L3.5 11.6 L6 8.6Z" fill="#000"/></svg>
<div style="left:1226px;top:601.6px;width:36px;height:18.799999999999955px;background:#f0f0f0;border:1px solid #c4ccd8"></div>
<span class="t" style="left:1240.026171875px;top:603.5px;font-size:12px;line-height:15px;color:#6d6d6d;">0</span>
<svg class="a" style="left:1251px;top:604.5px" width="8" height="13" viewBox="0 0 8 13"><path d="M1 4.4 L3.5 1.4 L6 4.4Z M1 8.6 L3.5 11.6 L6 8.6Z" fill="#9a9a9a"/></svg>
<div style="left:1265px;top:601.6px;width:38px;height:18.799999999999955px;background:#fff;border:1px solid #8a9ab0"></div>
<span class="t" style="left:1271.018359375px;top:603.5px;font-size:12px;line-height:15px;color:#000;">3,0</span>
<div style="left:1289px;top:602.6px;width:13px;height:16.799999999999955px;background:#f0f0f0;border-left:1px solid #d0d0d0"></div>
<div style="left:1289px;top:610.5px;width:13px;height:1px;background:#d8d8d8"></div>
<svg class="a" style="left:1292px;top:604.5px" width="8" height="13" viewBox="0 0 8 13"><path d="M1 4.4 L3.5 1.4 L6 4.4Z M1 8.6 L3.5 11.6 L6 8.6Z" fill="#000"/></svg>
<span class="t" style="left:744.126171875px;top:624.4px;font-size:12px;line-height:15px;">3</span>
<div style="left:751.4px;top:625.5500000000001px;width:12.5px;height:12.5px;background:#fff;border:1px solid #444"></div>
<svg class="a" style="left:751.4px;top:625.5500000000001px" width="12.5" height="12.5" viewBox="0 0 12.5 12.5"><path d="M2.6 6.4 L5.2 9 L10.2 3.4" stroke="#333" stroke-width="1.1" fill="none"/></svg>
<div class="fl" style="left:766.3px;top:622.5500000000001px;width:75.4px;height:18.799999999999955px;"></div>
<span class="t" style="left:769.5px;top:624.4px;font-size:12px;line-height:15px;">R</span>
<div style="left:843.2px;top:625.85px;width:10px;height:13px;background:#00e5ff;border:1px solid #000"></div>
<svg class="a" style="left:843.2px;top:625.85px" width="10" height="13" viewBox="0 0 10 13"><path d="M2 3 H8 L5 11Z" fill="#000"/></svg>
<div style="left:854.3px;top:625.85px;width:10px;height:13px;background:#ff2040;border:1px solid #000"></div>
<svg class="a" style="left:854.3px;top:625.85px" width="10" height="13" viewBox="0 0 10 13"><path d="M2 11 H8 L5 3Z" fill="#000"/></svg>
<div style="left:865.6px;top:622.5500000000001px;width:36.69999999999993px;height:18.799999999999955px;background:#fff;border:1px solid #8a9ab0"></div>
<span class="t" style="left:873.65234375px;top:624.5px;font-size:12px;line-height:15px;color:#000;">12</span>
<div style="left:888.3px;top:623.5500000000001px;width:13px;height:16.799999999999955px;background:#f0f0f0;border-left:1px solid #d0d0d0"></div>
<div style="left:888.3px;top:631.45px;width:13px;height:1px;background:#d8d8d8"></div>
<svg class="a" style="left:891.3px;top:625.45px" width="8" height="13" viewBox="0 0 8 13"><path d="M1 4.4 L3.5 1.4 L6 4.4Z M1 8.6 L3.5 11.6 L6 8.6Z" fill="#000"/></svg>
<div class="tl" style="left:905px;top:622.5500000000001px;width:30px;height:18.799999999999955px;"></div>
<span class="t" style="left:916.6630859375px;top:624.4px;font-size:12px;line-height:15px;color:#fff;">0</span>
<div style="left:937.2px;top:622.5500000000001px;width:57.19999999999993px;height:18.799999999999955px;background:#fff;border:1px solid #8a9ab0"></div>
<span class="t" style="left:942.396875px;top:624.5px;font-size:12px;line-height:15px;color:#000;">300,00</span>
<div style="left:980.4px;top:623.5500000000001px;width:13px;height:16.799999999999955px;background:#f0f0f0;border-left:1px solid #d0d0d0"></div>
<div style="left:980.4px;top:631.45px;width:13px;height:1px;background:#d8d8d8"></div>
<svg class="a" style="left:983.4px;top:625.45px" width="8" height="13" viewBox="0 0 8 13"><path d="M1 4.4 L3.5 1.4 L6 4.4Z M1 8.6 L3.5 11.6 L6 8.6Z" fill="#000"/></svg>
<div class="fl" style="left:996.2px;top:622.5500000000001px;width:63.799999999999955px;height:18.799999999999955px;"></div>
<span class="t" style="left:999.2px;top:624.5px;font-size:12px;line-height:15px;letter-spacing:-0.672px;max-width:44.799999999999955px;overflow:hidden;">Rouge</span>
<svg class="a" style="left:1046px;top:628.95px" width="10" height="6" viewBox="0 0 10 6"><path d="M1 1 L5 5 L9 1" stroke="#333" stroke-width="1.1" fill="none"/></svg>
<div class="fl" style="left:1061.6px;top:622.5500000000001px;width:43.80000000000018px;height:18.799999999999955px;"></div>
<span class="t" style="left:1064.6px;top:624.5px;font-size:12px;line-height:15px;letter-spacing:-0.784px;max-width:24.800000000000182px;overflow:hidden;">1X1</span>
<svg class="a" style="left:1091.4px;top:628.95px" width="10" height="6" viewBox="0 0 10 6"><path d="M1 1 L5 5 L9 1" stroke="#333" stroke-width="1.1" fill="none"/></svg>
<div style="left:1110px;top:622.5500000000001px;width:39.5px;height:18.799999999999955px;background:#fff;border:1px solid #8a9ab0"></div>
<span class="t" style="left:1117.518359375px;top:624.5px;font-size:12px;line-height:15px;color:#000;">3,0</span>
<div style="left:1135.5px;top:623.5500000000001px;width:13px;height:16.799999999999955px;background:#f0f0f0;border-left:1px solid #d0d0d0"></div>
<div style="left:1135.5px;top:631.45px;width:13px;height:1px;background:#d8d8d8"></div>
<svg class="a" style="left:1138.5px;top:625.45px" width="8" height="13" viewBox="0 0 8 13"><path d="M1 4.4 L3.5 1.4 L6 4.4Z M1 8.6 L3.5 11.6 L6 8.6Z" fill="#000"/></svg>
<div style="left:1164.4px;top:625.5500000000001px;width:12.5px;height:12.5px;background:#fff;border:1px solid #444"></div>
<svg class="a" style="left:1164.4px;top:625.5500000000001px" width="12.5" height="12.5" viewBox="0 0 12.5 12.5"><path d="M2.6 6.4 L5.2 9 L10.2 3.4" stroke="#333" stroke-width="1.1" fill="none"/></svg>
<div style="left:1186px;top:622.5500000000001px;width:37px;height:18.799999999999955px;background:#fff;border:1px solid #8a9ab0"></div>
<span class="t" style="left:1201.026171875px;top:624.5px;font-size:12px;line-height:15px;color:#000;">6</span>
<div style="left:1209px;top:623.5500000000001px;width:13px;height:16.799999999999955px;background:#f0f0f0;border-left:1px solid #d0d0d0"></div>
<div style="left:1209px;top:631.45px;width:13px;height:1px;background:#d8d8d8"></div>
<svg class="a" style="left:1212px;top:625.45px" width="8" height="13" viewBox="0 0 8 13"><path d="M1 4.4 L3.5 1.4 L6 4.4Z M1 8.6 L3.5 11.6 L6 8.6Z" fill="#000"/></svg>
<div style="left:1226px;top:622.5500000000001px;width:36px;height:18.799999999999955px;background:#f0f0f0;border:1px solid #c4ccd8"></div>
<span class="t" style="left:1240.026171875px;top:624.5px;font-size:12px;line-height:15px;color:#6d6d6d;">0</span>
<svg class="a" style="left:1251px;top:625.45px" width="8" height="13" viewBox="0 0 8 13"><path d="M1 4.4 L3.5 1.4 L6 4.4Z M1 8.6 L3.5 11.6 L6 8.6Z" fill="#9a9a9a"/></svg>
<div style="left:1265px;top:622.5500000000001px;width:38px;height:18.799999999999955px;background:#fff;border:1px solid #8a9ab0"></div>
<span class="t" style="left:1271.018359375px;top:624.5px;font-size:12px;line-height:15px;color:#000;">3,0</span>
<div style="left:1289px;top:623.5500000000001px;width:13px;height:16.799999999999955px;background:#f0f0f0;border-left:1px solid #d0d0d0"></div>
<div style="left:1289px;top:631.45px;width:13px;height:1px;background:#d8d8d8"></div>
<svg class="a" style="left:1292px;top:625.45px" width="8" height="13" viewBox="0 0 8 13"><path d="M1 4.4 L3.5 1.4 L6 4.4Z M1 8.6 L3.5 11.6 L6 8.6Z" fill="#000"/></svg>
<span class="t" style="left:744.126171875px;top:645.3px;font-size:12px;line-height:15px;">4</span>
<div style="left:751.4px;top:646.5px;width:12.5px;height:12.5px;background:#fff;border:1px solid #444"></div>
<svg class="a" style="left:751.4px;top:646.5px" width="12.5" height="12.5" viewBox="0 0 12.5 12.5"><path d="M2.6 6.4 L5.2 9 L10.2 3.4" stroke="#333" stroke-width="1.1" fill="none"/></svg>
<div class="fl" style="left:766.3px;top:643.5px;width:75.4px;height:18.799999999999955px;"></div>
<span class="t" style="left:769.5px;top:645.3px;font-size:12px;line-height:15px;">L</span>
<div style="left:843.2px;top:646.8px;width:10px;height:13px;background:#00e5ff;border:1px solid #000"></div>
<svg class="a" style="left:843.2px;top:646.8px" width="10" height="13" viewBox="0 0 10 13"><path d="M2 3 H8 L5 11Z" fill="#000"/></svg>
<div style="left:854.3px;top:646.8px;width:10px;height:13px;background:#ff2040;border:1px solid #000"></div>
<svg class="a" style="left:854.3px;top:646.8px" width="10" height="13" viewBox="0 0 10 13"><path d="M2 11 H8 L5 3Z" fill="#000"/></svg>
<div style="left:865.6px;top:643.5px;width:36.69999999999993px;height:18.799999999999955px;background:#fff;border:1px solid #8a9ab0"></div>
<span class="t" style="left:873.65234375px;top:645.4px;font-size:12px;line-height:15px;color:#000;">30</span>
<div style="left:888.3px;top:644.5px;width:13px;height:16.799999999999955px;background:#f0f0f0;border-left:1px solid #d0d0d0"></div>
<div style="left:888.3px;top:652.4px;width:13px;height:1px;background:#d8d8d8"></div>
<svg class="a" style="left:891.3px;top:646.4px" width="8" height="13" viewBox="0 0 8 13"><path d="M1 4.4 L3.5 1.4 L6 4.4Z M1 8.6 L3.5 11.6 L6 8.6Z" fill="#000"/></svg>
<div class="tl" style="left:905px;top:643.5px;width:30px;height:18.799999999999955px;"></div>
<span class="t" style="left:916.6630859375px;top:645.3px;font-size:12px;line-height:15px;color:#fff;">0</span>
<div style="left:937.2px;top:643.5px;width:57.19999999999993px;height:18.799999999999955px;background:#fff;border:1px solid #8a9ab0"></div>
<span class="t" style="left:942.396875px;top:645.4px;font-size:12px;line-height:15px;color:#000;">300,00</span>
<div style="left:980.4px;top:644.5px;width:13px;height:16.799999999999955px;background:#f0f0f0;border-left:1px solid #d0d0d0"></div>
<div style="left:980.4px;top:652.4px;width:13px;height:1px;background:#d8d8d8"></div>
<svg class="a" style="left:983.4px;top:646.4px" width="8" height="13" viewBox="0 0 8 13"><path d="M1 4.4 L3.5 1.4 L6 4.4Z M1 8.6 L3.5 11.6 L6 8.6Z" fill="#000"/></svg>
<div class="fl" style="left:996.2px;top:643.5px;width:63.799999999999955px;height:18.799999999999955px;"></div>
<span class="t" style="left:999.2px;top:645.4px;font-size:12px;line-height:15px;letter-spacing:-0.754px;max-width:44.799999999999955px;overflow:hidden;">Luminanc</span>
<svg class="a" style="left:1046px;top:649.9px" width="10" height="6" viewBox="0 0 10 6"><path d="M1 1 L5 5 L9 1" stroke="#333" stroke-width="1.1" fill="none"/></svg>
<div class="fl" style="left:1061.6px;top:643.5px;width:43.80000000000018px;height:18.799999999999955px;"></div>
<span class="t" style="left:1064.6px;top:645.4px;font-size:12px;line-height:15px;letter-spacing:-0.784px;max-width:24.800000000000182px;overflow:hidden;">1X1</span>
<svg class="a" style="left:1091.4px;top:649.9px" width="10" height="6" viewBox="0 0 10 6"><path d="M1 1 L5 5 L9 1" stroke="#333" stroke-width="1.1" fill="none"/></svg>
<div style="left:1110px;top:643.5px;width:39.5px;height:18.799999999999955px;background:#fff;border:1px solid #8a9ab0"></div>
<span class="t" style="left:1117.518359375px;top:645.4px;font-size:12px;line-height:15px;color:#000;">3,0</span>
<div style="left:1135.5px;top:644.5px;width:13px;height:16.799999999999955px;background:#f0f0f0;border-left:1px solid #d0d0d0"></div>
<div style="left:1135.5px;top:652.4px;width:13px;height:1px;background:#d8d8d8"></div>
<svg class="a" style="left:1138.5px;top:646.4px" width="8" height="13" viewBox="0 0 8 13"><path d="M1 4.4 L3.5 1.4 L6 4.4Z M1 8.6 L3.5 11.6 L6 8.6Z" fill="#000"/></svg>
<div style="left:1164.4px;top:646.5px;width:12.5px;height:12.5px;background:#fff;border:1px solid #444"></div>
<svg class="a" style="left:1164.4px;top:646.5px" width="12.5" height="12.5" viewBox="0 0 12.5 12.5"><path d="M2.6 6.4 L5.2 9 L10.2 3.4" stroke="#333" stroke-width="1.1" fill="none"/></svg>
<div style="left:1186px;top:643.5px;width:37px;height:18.799999999999955px;background:#fff;border:1px solid #8a9ab0"></div>
<span class="t" style="left:1201.026171875px;top:645.4px;font-size:12px;line-height:15px;color:#000;">6</span>
<div style="left:1209px;top:644.5px;width:13px;height:16.799999999999955px;background:#f0f0f0;border-left:1px solid #d0d0d0"></div>
<div style="left:1209px;top:652.4px;width:13px;height:1px;background:#d8d8d8"></div>
<svg class="a" style="left:1212px;top:646.4px" width="8" height="13" viewBox="0 0 8 13"><path d="M1 4.4 L3.5 1.4 L6 4.4Z M1 8.6 L3.5 11.6 L6 8.6Z" fill="#000"/></svg>
<div style="left:1226px;top:643.5px;width:36px;height:18.799999999999955px;background:#f0f0f0;border:1px solid #c4ccd8"></div>
<span class="t" style="left:1240.026171875px;top:645.4px;font-size:12px;line-height:15px;color:#6d6d6d;">0</span>
<svg class="a" style="left:1251px;top:646.4px" width="8" height="13" viewBox="0 0 8 13"><path d="M1 4.4 L3.5 1.4 L6 4.4Z M1 8.6 L3.5 11.6 L6 8.6Z" fill="#9a9a9a"/></svg>
<div style="left:1265px;top:643.5px;width:38px;height:18.799999999999955px;background:#fff;border:1px solid #8a9ab0"></div>
<span class="t" style="left:1271.018359375px;top:645.4px;font-size:12px;line-height:15px;color:#000;">3,0</span>
<div style="left:1289px;top:644.5px;width:13px;height:16.799999999999955px;background:#f0f0f0;border-left:1px solid #d0d0d0"></div>
<div style="left:1289px;top:652.4px;width:13px;height:1px;background:#d8d8d8"></div>
<svg class="a" style="left:1292px;top:646.4px" width="8" height="13" viewBox="0 0 8 13"><path d="M1 4.4 L3.5 1.4 L6 4.4Z M1 8.6 L3.5 11.6 L6 8.6Z" fill="#000"/></svg>
<span class="t" style="left:744.126171875px;top:666.2px;font-size:12px;line-height:15px;">5</span>
<div style="left:751.4px;top:667.45px;width:12.5px;height:12.5px;background:#fff;border:1px solid #444"></div>
<div class="fl" style="left:766.3px;top:664.45px;width:75.4px;height:18.799999999999955px;"></div>
<div style="left:843.2px;top:667.75px;width:10px;height:13px;background:#00e5ff;border:1px solid #000"></div>
<svg class="a" style="left:843.2px;top:667.75px" width="10" height="13" viewBox="0 0 10 13"><path d="M2 3 H8 L5 11Z" fill="#000"/></svg>
<div style="left:854.3px;top:667.75px;width:10px;height:13px;background:#ff2040;border:1px solid #000"></div>
<svg class="a" style="left:854.3px;top:667.75px" width="10" height="13" viewBox="0 0 10 13"><path d="M2 11 H8 L5 3Z" fill="#000"/></svg>
<div style="left:865.6px;top:664.45px;width:36.69999999999993px;height:18.799999999999955px;background:#fff;border:1px solid #8a9ab0"></div>
<span class="t" style="left:880.326171875px;top:666.4px;font-size:12px;line-height:15px;color:#000;">0</span>
<div style="left:888.3px;top:665.45px;width:13px;height:16.799999999999955px;background:#f0f0f0;border-left:1px solid #d0d0d0"></div>
<div style="left:888.3px;top:673.35px;width:13px;height:1px;background:#d8d8d8"></div>
<svg class="a" style="left:891.3px;top:667.35px" width="8" height="13" viewBox="0 0 8 13"><path d="M1 4.4 L3.5 1.4 L6 4.4Z M1 8.6 L3.5 11.6 L6 8.6Z" fill="#000"/></svg>
<div class="tl" style="left:905px;top:664.45px;width:30px;height:18.799999999999955px;"></div>
<span class="t" style="left:916.6630859375px;top:666.2px;font-size:12px;line-height:15px;color:#fff;">0</span>
<div style="left:937.2px;top:664.45px;width:57.19999999999993px;height:18.799999999999955px;background:#fff;border:1px solid #8a9ab0"></div>
<span class="t" style="left:955.74453125px;top:666.4px;font-size:12px;line-height:15px;color:#000;">0,00</span>
<div style="left:980.4px;top:665.45px;width:13px;height:16.799999999999955px;background:#f0f0f0;border-left:1px solid #d0d0d0"></div>
<div style="left:980.4px;top:673.35px;width:13px;height:1px;background:#d8d8d8"></div>
<svg class="a" style="left:983.4px;top:667.35px" width="8" height="13" viewBox="0 0 8 13"><path d="M1 4.4 L3.5 1.4 L6 4.4Z M1 8.6 L3.5 11.6 L6 8.6Z" fill="#000"/></svg>
<div class="fl" style="left:996.2px;top:664.45px;width:63.799999999999955px;height:18.799999999999955px;"></div>
<svg class="a" style="left:1046px;top:670.85px" width="10" height="6" viewBox="0 0 10 6"><path d="M1 1 L5 5 L9 1" stroke="#333" stroke-width="1.1" fill="none"/></svg>
<div class="fl" style="left:1061.6px;top:664.45px;width:43.80000000000018px;height:18.799999999999955px;"></div>
<svg class="a" style="left:1091.4px;top:670.85px" width="10" height="6" viewBox="0 0 10 6"><path d="M1 1 L5 5 L9 1" stroke="#333" stroke-width="1.1" fill="none"/></svg>
<div style="left:1110px;top:664.45px;width:39.5px;height:18.799999999999955px;background:#fff;border:1px solid #8a9ab0"></div>
<span class="t" style="left:1117.518359375px;top:666.4px;font-size:12px;line-height:15px;color:#000;">3,0</span>
<div style="left:1135.5px;top:665.45px;width:13px;height:16.799999999999955px;background:#f0f0f0;border-left:1px solid #d0d0d0"></div>
<div style="left:1135.5px;top:673.35px;width:13px;height:1px;background:#d8d8d8"></div>
<svg class="a" style="left:1138.5px;top:667.35px" width="8" height="13" viewBox="0 0 8 13"><path d="M1 4.4 L3.5 1.4 L6 4.4Z M1 8.6 L3.5 11.6 L6 8.6Z" fill="#000"/></svg>
<div style="left:1164.4px;top:667.45px;width:12.5px;height:12.5px;background:#fff;border:1px solid #444"></div>
<div style="left:1186px;top:664.45px;width:37px;height:18.799999999999955px;background:#fff;border:1px solid #8a9ab0"></div>
<span class="t" style="left:1201.026171875px;top:666.4px;font-size:12px;line-height:15px;color:#000;">0</span>
<div style="left:1209px;top:665.45px;width:13px;height:16.799999999999955px;background:#f0f0f0;border-left:1px solid #d0d0d0"></div>
<div style="left:1209px;top:673.35px;width:13px;height:1px;background:#d8d8d8"></div>
<svg class="a" style="left:1212px;top:667.35px" width="8" height="13" viewBox="0 0 8 13"><path d="M1 4.4 L3.5 1.4 L6 4.4Z M1 8.6 L3.5 11.6 L6 8.6Z" fill="#000"/></svg>
<div style="left:1226px;top:664.45px;width:36px;height:18.799999999999955px;background:#f0f0f0;border:1px solid #c4ccd8"></div>
<span class="t" style="left:1240.026171875px;top:666.4px;font-size:12px;line-height:15px;color:#6d6d6d;">0</span>
<svg class="a" style="left:1251px;top:667.35px" width="8" height="13" viewBox="0 0 8 13"><path d="M1 4.4 L3.5 1.4 L6 4.4Z M1 8.6 L3.5 11.6 L6 8.6Z" fill="#9a9a9a"/></svg>
<div style="left:1265px;top:664.45px;width:38px;height:18.799999999999955px;background:#fff;border:1px solid #8a9ab0"></div>
<span class="t" style="left:1271.018359375px;top:666.4px;font-size:12px;line-height:15px;color:#000;">0,0</span>
<div style="left:1289px;top:665.45px;width:13px;height:16.799999999999955px;background:#f0f0f0;border-left:1px solid #d0d0d0"></div>
<div style="left:1289px;top:673.35px;width:13px;height:1px;background:#d8d8d8"></div>
<svg class="a" style="left:1292px;top:667.35px" width="8" height="13" viewBox="0 0 8 13"><path d="M1 4.4 L3.5 1.4 L6 4.4Z M1 8.6 L3.5 11.6 L6 8.6Z" fill="#000"/></svg>
<span class="t" style="left:744.126171875px;top:687.2px;font-size:12px;line-height:15px;">6</span>
<div style="left:751.4px;top:688.4px;width:12.5px;height:12.5px;background:#fff;border:1px solid #444"></div>
<div class="fl" style="left:766.3px;top:685.4px;width:75.4px;height:18.799999999999955px;"></div>
<div style="left:843.2px;top:688.6999999999999px;width:10px;height:13px;background:#00e5ff;border:1px solid #000"></div>
<svg class="a" style="left:843.2px;top:688.6999999999999px" width="10" height="13" viewBox="0 0 10 13"><path d="M2 3 H8 L5 11Z" fill="#000"/></svg>
<div style="left:854.3px;top:688.6999999999999px;width:10px;height:13px;background:#ff2040;border:1px solid #000"></div>
<svg class="a" style="left:854.3px;top:688.6999999999999px" width="10" height="13" viewBox="0 0 10 13"><path d="M2 11 H8 L5 3Z" fill="#000"/></svg>
<div style="left:865.6px;top:685.4px;width:36.69999999999993px;height:18.799999999999955px;background:#fff;border:1px solid #8a9ab0"></div>
<span class="t" style="left:880.326171875px;top:687.3px;font-size:12px;line-height:15px;color:#000;">0</span>
<div style="left:888.3px;top:686.4px;width:13px;height:16.799999999999955px;background:#f0f0f0;border-left:1px solid #d0d0d0"></div>
<div style="left:888.3px;top:694.3px;width:13px;height:1px;background:#d8d8d8"></div>
<svg class="a" style="left:891.3px;top:688.3px" width="8" height="13" viewBox="0 0 8 13"><path d="M1 4.4 L3.5 1.4 L6 4.4Z M1 8.6 L3.5 11.6 L6 8.6Z" fill="#000"/></svg>
<div class="tl" style="left:905px;top:685.4px;width:30px;height:18.799999999999955px;"></div>
<span class="t" style="left:916.6630859375px;top:687.2px;font-size:12px;line-height:15px;color:#fff;">0</span>
<div style="left:937.2px;top:685.4px;width:57.19999999999993px;height:18.799999999999955px;background:#fff;border:1px solid #8a9ab0"></div>
<span class="t" style="left:955.74453125px;top:687.3px;font-size:12px;line-height:15px;color:#000;">0,00</span>
<div style="left:980.4px;top:686.4px;width:13px;height:16.799999999999955px;background:#f0f0f0;border-left:1px solid #d0d0d0"></div>
<div style="left:980.4px;top:694.3px;width:13px;height:1px;background:#d8d8d8"></div>
<svg class="a" style="left:983.4px;top:688.3px" width="8" height="13" viewBox="0 0 8 13"><path d="M1 4.4 L3.5 1.4 L6 4.4Z M1 8.6 L3.5 11.6 L6 8.6Z" fill="#000"/></svg>
<div class="fl" style="left:996.2px;top:685.4px;width:63.799999999999955px;height:18.799999999999955px;"></div>
<svg class="a" style="left:1046px;top:691.8px" width="10" height="6" viewBox="0 0 10 6"><path d="M1 1 L5 5 L9 1" stroke="#333" stroke-width="1.1" fill="none"/></svg>
<div class="fl" style="left:1061.6px;top:685.4px;width:43.80000000000018px;height:18.799999999999955px;"></div>
<svg class="a" style="left:1091.4px;top:691.8px" width="10" height="6" viewBox="0 0 10 6"><path d="M1 1 L5 5 L9 1" stroke="#333" stroke-width="1.1" fill="none"/></svg>
<div style="left:1110px;top:685.4px;width:39.5px;height:18.799999999999955px;background:#fff;border:1px solid #8a9ab0"></div>
<span class="t" style="left:1117.518359375px;top:687.3px;font-size:12px;line-height:15px;color:#000;">3,0</span>
<div style="left:1135.5px;top:686.4px;width:13px;height:16.799999999999955px;background:#f0f0f0;border-left:1px solid #d0d0d0"></div>
<div style="left:1135.5px;top:694.3px;width:13px;height:1px;background:#d8d8d8"></div>
<svg class="a" style="left:1138.5px;top:688.3px" width="8" height="13" viewBox="0 0 8 13"><path d="M1 4.4 L3.5 1.4 L6 4.4Z M1 8.6 L3.5 11.6 L6 8.6Z" fill="#000"/></svg>
<div style="left:1164.4px;top:688.4px;width:12.5px;height:12.5px;background:#fff;border:1px solid #444"></div>
<div style="left:1186px;top:685.4px;width:37px;height:18.799999999999955px;background:#fff;border:1px solid #8a9ab0"></div>
<span class="t" style="left:1201.026171875px;top:687.3px;font-size:12px;line-height:15px;color:#000;">0</span>
<div style="left:1209px;top:686.4px;width:13px;height:16.799999999999955px;background:#f0f0f0;border-left:1px solid #d0d0d0"></div>
<div style="left:1209px;top:694.3px;width:13px;height:1px;background:#d8d8d8"></div>
<svg class="a" style="left:1212px;top:688.3px" width="8" height="13" viewBox="0 0 8 13"><path d="M1 4.4 L3.5 1.4 L6 4.4Z M1 8.6 L3.5 11.6 L6 8.6Z" fill="#000"/></svg>
<div style="left:1226px;top:685.4px;width:36px;height:18.799999999999955px;background:#f0f0f0;border:1px solid #c4ccd8"></div>
<span class="t" style="left:1240.026171875px;top:687.3px;font-size:12px;line-height:15px;color:#6d6d6d;">0</span>
<svg class="a" style="left:1251px;top:688.3px" width="8" height="13" viewBox="0 0 8 13"><path d="M1 4.4 L3.5 1.4 L6 4.4Z M1 8.6 L3.5 11.6 L6 8.6Z" fill="#9a9a9a"/></svg>
<div style="left:1265px;top:685.4px;width:38px;height:18.799999999999955px;background:#fff;border:1px solid #8a9ab0"></div>
<span class="t" style="left:1271.018359375px;top:687.3px;font-size:12px;line-height:15px;color:#000;">0,0</span>
<div style="left:1289px;top:686.4px;width:13px;height:16.799999999999955px;background:#f0f0f0;border-left:1px solid #d0d0d0"></div>
<div style="left:1289px;top:694.3px;width:13px;height:1px;background:#d8d8d8"></div>
<svg class="a" style="left:1292px;top:688.3px" width="8" height="13" viewBox="0 0 8 13"><path d="M1 4.4 L3.5 1.4 L6 4.4Z M1 8.6 L3.5 11.6 L6 8.6Z" fill="#000"/></svg>
<span class="t" style="left:744.126171875px;top:708.1px;font-size:12px;line-height:15px;">7</span>
<div style="left:751.4px;top:709.35px;width:12.5px;height:12.5px;background:#fff;border:1px solid #444"></div>
<div class="fl" style="left:766.3px;top:706.35px;width:75.4px;height:18.799999999999955px;"></div>
<div style="left:843.2px;top:709.65px;width:10px;height:13px;background:#00e5ff;border:1px solid #000"></div>
<svg class="a" style="left:843.2px;top:709.65px" width="10" height="13" viewBox="0 0 10 13"><path d="M2 3 H8 L5 11Z" fill="#000"/></svg>
<div style="left:854.3px;top:709.65px;width:10px;height:13px;background:#ff2040;border:1px solid #000"></div>
<svg class="a" style="left:854.3px;top:709.65px" width="10" height="13" viewBox="0 0 10 13"><path d="M2 11 H8 L5 3Z" fill="#000"/></svg>
<div style="left:865.6px;top:706.35px;width:36.69999999999993px;height:18.799999999999955px;background:#fff;border:1px solid #8a9ab0"></div>
<span class="t" style="left:880.326171875px;top:708.2px;font-size:12px;line-height:15px;color:#000;">0</span>
<div style="left:888.3px;top:707.35px;width:13px;height:16.799999999999955px;background:#f0f0f0;border-left:1px solid #d0d0d0"></div>
<div style="left:888.3px;top:715.25px;width:13px;height:1px;background:#d8d8d8"></div>
<svg class="a" style="left:891.3px;top:709.25px" width="8" height="13" viewBox="0 0 8 13"><path d="M1 4.4 L3.5 1.4 L6 4.4Z M1 8.6 L3.5 11.6 L6 8.6Z" fill="#000"/></svg>
<div class="tl" style="left:905px;top:706.35px;width:30px;height:18.799999999999955px;"></div>
<span class="t" style="left:916.6630859375px;top:708.1px;font-size:12px;line-height:15px;color:#fff;">0</span>
<div style="left:937.2px;top:706.35px;width:57.19999999999993px;height:18.799999999999955px;background:#fff;border:1px solid #8a9ab0"></div>
<span class="t" style="left:955.74453125px;top:708.2px;font-size:12px;line-height:15px;color:#000;">0,00</span>
<div style="left:980.4px;top:707.35px;width:13px;height:16.799999999999955px;background:#f0f0f0;border-left:1px solid #d0d0d0"></div>
<div style="left:980.4px;top:715.25px;width:13px;height:1px;background:#d8d8d8"></div>
<svg class="a" style="left:983.4px;top:709.25px" width="8" height="13" viewBox="0 0 8 13"><path d="M1 4.4 L3.5 1.4 L6 4.4Z M1 8.6 L3.5 11.6 L6 8.6Z" fill="#000"/></svg>
<div class="fl" style="left:996.2px;top:706.35px;width:63.799999999999955px;height:18.799999999999955px;"></div>
<svg class="a" style="left:1046px;top:712.75px" width="10" height="6" viewBox="0 0 10 6"><path d="M1 1 L5 5 L9 1" stroke="#333" stroke-width="1.1" fill="none"/></svg>
<div class="fl" style="left:1061.6px;top:706.35px;width:43.80000000000018px;height:18.799999999999955px;"></div>
<svg class="a" style="left:1091.4px;top:712.75px" width="10" height="6" viewBox="0 0 10 6"><path d="M1 1 L5 5 L9 1" stroke="#333" stroke-width="1.1" fill="none"/></svg>
<div style="left:1110px;top:706.35px;width:39.5px;height:18.799999999999955px;background:#fff;border:1px solid #8a9ab0"></div>
<span class="t" style="left:1117.518359375px;top:708.2px;font-size:12px;line-height:15px;color:#000;">3,0</span>
<div style="left:1135.5px;top:707.35px;width:13px;height:16.799999999999955px;background:#f0f0f0;border-left:1px solid #d0d0d0"></div>
<div style="left:1135.5px;top:715.25px;width:13px;height:1px;background:#d8d8d8"></div>
<svg class="a" style="left:1138.5px;top:709.25px" width="8" height="13" viewBox="0 0 8 13"><path d="M1 4.4 L3.5 1.4 L6 4.4Z M1 8.6 L3.5 11.6 L6 8.6Z" fill="#000"/></svg>
<div style="left:1164.4px;top:709.35px;width:12.5px;height:12.5px;background:#fff;border:1px solid #444"></div>
<div style="left:1186px;top:706.35px;width:37px;height:18.799999999999955px;background:#fff;border:1px solid #8a9ab0"></div>
<span class="t" style="left:1201.026171875px;top:708.2px;font-size:12px;line-height:15px;color:#000;">0</span>
<div style="left:1209px;top:707.35px;width:13px;height:16.799999999999955px;background:#f0f0f0;border-left:1px solid #d0d0d0"></div>
<div style="left:1209px;top:715.25px;width:13px;height:1px;background:#d8d8d8"></div>
<svg class="a" style="left:1212px;top:709.25px" width="8" height="13" viewBox="0 0 8 13"><path d="M1 4.4 L3.5 1.4 L6 4.4Z M1 8.6 L3.5 11.6 L6 8.6Z" fill="#000"/></svg>
<div style="left:1226px;top:706.35px;width:36px;height:18.799999999999955px;background:#f0f0f0;border:1px solid #c4ccd8"></div>
<span class="t" style="left:1240.026171875px;top:708.2px;font-size:12px;line-height:15px;color:#6d6d6d;">0</span>
<svg class="a" style="left:1251px;top:709.25px" width="8" height="13" viewBox="0 0 8 13"><path d="M1 4.4 L3.5 1.4 L6 4.4Z M1 8.6 L3.5 11.6 L6 8.6Z" fill="#9a9a9a"/></svg>
<div style="left:1265px;top:706.35px;width:38px;height:18.799999999999955px;background:#fff;border:1px solid #8a9ab0"></div>
<span class="t" style="left:1271.018359375px;top:708.2px;font-size:12px;line-height:15px;color:#000;">0,0</span>
<div style="left:1289px;top:707.35px;width:13px;height:16.799999999999955px;background:#f0f0f0;border-left:1px solid #d0d0d0"></div>
<div style="left:1289px;top:715.25px;width:13px;height:1px;background:#d8d8d8"></div>
<svg class="a" style="left:1292px;top:709.25px" width="8" height="13" viewBox="0 0 8 13"><path d="M1 4.4 L3.5 1.4 L6 4.4Z M1 8.6 L3.5 11.6 L6 8.6Z" fill="#000"/></svg>
<span class="t" style="left:744.126171875px;top:729.1px;font-size:12px;line-height:15px;">8</span>
<div style="left:751.4px;top:730.3px;width:12.5px;height:12.5px;background:#fff;border:1px solid #444"></div>
<div class="fl" style="left:766.3px;top:727.3px;width:75.4px;height:18.799999999999955px;"></div>
<div style="left:843.2px;top:730.5999999999999px;width:10px;height:13px;background:#00e5ff;border:1px solid #000"></div>
<svg class="a" style="left:843.2px;top:730.5999999999999px" width="10" height="13" viewBox="0 0 10 13"><path d="M2 3 H8 L5 11Z" fill="#000"/></svg>
<div style="left:854.3px;top:730.5999999999999px;width:10px;height:13px;background:#ff2040;border:1px solid #000"></div>
<svg class="a" style="left:854.3px;top:730.5999999999999px" width="10" height="13" viewBox="0 0 10 13"><path d="M2 11 H8 L5 3Z" fill="#000"/></svg>
<div style="left:865.6px;top:727.3px;width:36.69999999999993px;height:18.799999999999955px;background:#fff;border:1px solid #8a9ab0"></div>
<span class="t" style="left:880.326171875px;top:729.2px;font-size:12px;line-height:15px;color:#000;">0</span>
<div style="left:888.3px;top:728.3px;width:13px;height:16.799999999999955px;background:#f0f0f0;border-left:1px solid #d0d0d0"></div>
<div style="left:888.3px;top:736.1999999999999px;width:13px;height:1px;background:#d8d8d8"></div>
<svg class="a" style="left:891.3px;top:730.1999999999999px" width="8" height="13" viewBox="0 0 8 13"><path d="M1 4.4 L3.5 1.4 L6 4.4Z M1 8.6 L3.5 11.6 L6 8.6Z" fill="#000"/></svg>
<div class="tl" style="left:905px;top:727.3px;width:30px;height:18.799999999999955px;"></div>
<span class="t" style="left:916.6630859375px;top:729.1px;font-size:12px;line-height:15px;color:#fff;">0</span>
<div style="left:937.2px;top:727.3px;width:57.19999999999993px;height:18.799999999999955px;background:#fff;border:1px solid #8a9ab0"></div>
<span class="t" style="left:955.74453125px;top:729.2px;font-size:12px;line-height:15px;color:#000;">0,00</span>
<div style="left:980.4px;top:728.3px;width:13px;height:16.799999999999955px;background:#f0f0f0;border-left:1px solid #d0d0d0"></div>
<div style="left:980.4px;top:736.1999999999999px;width:13px;height:1px;background:#d8d8d8"></div>
<svg class="a" style="left:983.4px;top:730.1999999999999px" width="8" height="13" viewBox="0 0 8 13"><path d="M1 4.4 L3.5 1.4 L6 4.4Z M1 8.6 L3.5 11.6 L6 8.6Z" fill="#000"/></svg>
<div class="fl" style="left:996.2px;top:727.3px;width:63.799999999999955px;height:18.799999999999955px;"></div>
<svg class="a" style="left:1046px;top:733.6999999999999px" width="10" height="6" viewBox="0 0 10 6"><path d="M1 1 L5 5 L9 1" stroke="#333" stroke-width="1.1" fill="none"/></svg>
<div class="fl" style="left:1061.6px;top:727.3px;width:43.80000000000018px;height:18.799999999999955px;"></div>
<svg class="a" style="left:1091.4px;top:733.6999999999999px" width="10" height="6" viewBox="0 0 10 6"><path d="M1 1 L5 5 L9 1" stroke="#333" stroke-width="1.1" fill="none"/></svg>
<div style="left:1110px;top:727.3px;width:39.5px;height:18.799999999999955px;background:#fff;border:1px solid #8a9ab0"></div>
<span class="t" style="left:1117.518359375px;top:729.2px;font-size:12px;line-height:15px;color:#000;">3,0</span>
<div style="left:1135.5px;top:728.3px;width:13px;height:16.799999999999955px;background:#f0f0f0;border-left:1px solid #d0d0d0"></div>
<div style="left:1135.5px;top:736.1999999999999px;width:13px;height:1px;background:#d8d8d8"></div>
<svg class="a" style="left:1138.5px;top:730.1999999999999px" width="8" height="13" viewBox="0 0 8 13"><path d="M1 4.4 L3.5 1.4 L6 4.4Z M1 8.6 L3.5 11.6 L6 8.6Z" fill="#000"/></svg>
<div style="left:1164.4px;top:730.3px;width:12.5px;height:12.5px;background:#fff;border:1px solid #444"></div>
<div style="left:1186px;top:727.3px;width:37px;height:18.799999999999955px;background:#fff;border:1px solid #8a9ab0"></div>
<span class="t" style="left:1201.026171875px;top:729.2px;font-size:12px;line-height:15px;color:#000;">0</span>
<div style="left:1209px;top:728.3px;width:13px;height:16.799999999999955px;background:#f0f0f0;border-left:1px solid #d0d0d0"></div>
<div style="left:1209px;top:736.1999999999999px;width:13px;height:1px;background:#d8d8d8"></div>
<svg class="a" style="left:1212px;top:730.1999999999999px" width="8" height="13" viewBox="0 0 8 13"><path d="M1 4.4 L3.5 1.4 L6 4.4Z M1 8.6 L3.5 11.6 L6 8.6Z" fill="#000"/></svg>
<div style="left:1226px;top:727.3px;width:36px;height:18.799999999999955px;background:#f0f0f0;border:1px solid #c4ccd8"></div>
<span class="t" style="left:1240.026171875px;top:729.2px;font-size:12px;line-height:15px;color:#6d6d6d;">0</span>
<svg class="a" style="left:1251px;top:730.1999999999999px" width="8" height="13" viewBox="0 0 8 13"><path d="M1 4.4 L3.5 1.4 L6 4.4Z M1 8.6 L3.5 11.6 L6 8.6Z" fill="#9a9a9a"/></svg>
<div style="left:1265px;top:727.3px;width:38px;height:18.799999999999955px;background:#fff;border:1px solid #8a9ab0"></div>
<span class="t" style="left:1271.018359375px;top:729.2px;font-size:12px;line-height:15px;color:#000;">0,0</span>
<div style="left:1289px;top:728.3px;width:13px;height:16.799999999999955px;background:#f0f0f0;border-left:1px solid #d0d0d0"></div>
<div style="left:1289px;top:736.1999999999999px;width:13px;height:1px;background:#d8d8d8"></div>
<svg class="a" style="left:1292px;top:730.1999999999999px" width="8" height="13" viewBox="0 0 8 13"><path d="M1 4.4 L3.5 1.4 L6 4.4Z M1 8.6 L3.5 11.6 L6 8.6Z" fill="#000"/></svg>
<span class="t" style="left:744.126171875px;top:750.0px;font-size:12px;line-height:15px;">9</span>
<div style="left:751.4px;top:751.25px;width:12.5px;height:12.5px;background:#fff;border:1px solid #444"></div>
<div class="fl" style="left:766.3px;top:748.25px;width:75.4px;height:18.799999999999955px;"></div>
<div style="left:843.2px;top:751.55px;width:10px;height:13px;background:#00e5ff;border:1px solid #000"></div>
<svg class="a" style="left:843.2px;top:751.55px" width="10" height="13" viewBox="0 0 10 13"><path d="M2 3 H8 L5 11Z" fill="#000"/></svg>
<div style="left:854.3px;top:751.55px;width:10px;height:13px;background:#ff2040;border:1px solid #000"></div>
<svg class="a" style="left:854.3px;top:751.55px" width="10" height="13" viewBox="0 0 10 13"><path d="M2 11 H8 L5 3Z" fill="#000"/></svg>
<div style="left:865.6px;top:748.25px;width:36.69999999999993px;height:18.799999999999955px;background:#fff;border:1px solid #8a9ab0"></div>
<span class="t" style="left:880.326171875px;top:750.1px;font-size:12px;line-height:15px;color:#000;">0</span>
<div style="left:888.3px;top:749.25px;width:13px;height:16.799999999999955px;background:#f0f0f0;border-left:1px solid #d0d0d0"></div>
<div style="left:888.3px;top:757.15px;width:13px;height:1px;background:#d8d8d8"></div>
<svg class="a" style="left:891.3px;top:751.15px" width="8" height="13" viewBox="0 0 8 13"><path d="M1 4.4 L3.5 1.4 L6 4.4Z M1 8.6 L3.5 11.6 L6 8.6Z" fill="#000"/></svg>
<div class="tl" style="left:905px;top:748.25px;width:30px;height:18.799999999999955px;"></div>
<span class="t" style="left:916.6630859375px;top:750.0px;font-size:12px;line-height:15px;color:#fff;">0</span>
<div style="left:937.2px;top:748.25px;width:57.19999999999993px;height:18.799999999999955px;background:#fff;border:1px solid #8a9ab0"></div>
<span class="t" style="left:955.74453125px;top:750.1px;font-size:12px;line-height:15px;color:#000;">0,00</span>
<div style="left:980.4px;top:749.25px;width:13px;height:16.799999999999955px;background:#f0f0f0;border-left:1px solid #d0d0d0"></div>
<div style="left:980.4px;top:757.15px;width:13px;height:1px;background:#d8d8d8"></div>
<svg class="a" style="left:983.4px;top:751.15px" width="8" height="13" viewBox="0 0 8 13"><path d="M1 4.4 L3.5 1.4 L6 4.4Z M1 8.6 L3.5 11.6 L6 8.6Z" fill="#000"/></svg>
<div class="fl" style="left:996.2px;top:748.25px;width:63.799999999999955px;height:18.799999999999955px;"></div>
<svg class="a" style="left:1046px;top:754.65px" width="10" height="6" viewBox="0 0 10 6"><path d="M1 1 L5 5 L9 1" stroke="#333" stroke-width="1.1" fill="none"/></svg>
<div class="fl" style="left:1061.6px;top:748.25px;width:43.80000000000018px;height:18.799999999999955px;"></div>
<svg class="a" style="left:1091.4px;top:754.65px" width="10" height="6" viewBox="0 0 10 6"><path d="M1 1 L5 5 L9 1" stroke="#333" stroke-width="1.1" fill="none"/></svg>
<div style="left:1110px;top:748.25px;width:39.5px;height:18.799999999999955px;background:#fff;border:1px solid #8a9ab0"></div>
<span class="t" style="left:1117.518359375px;top:750.1px;font-size:12px;line-height:15px;color:#000;">3,0</span>
<div style="left:1135.5px;top:749.25px;width:13px;height:16.799999999999955px;background:#f0f0f0;border-left:1px solid #d0d0d0"></div>
<div style="left:1135.5px;top:757.15px;width:13px;height:1px;background:#d8d8d8"></div>
<svg class="a" style="left:1138.5px;top:751.15px" width="8" height="13" viewBox="0 0 8 13"><path d="M1 4.4 L3.5 1.4 L6 4.4Z M1 8.6 L3.5 11.6 L6 8.6Z" fill="#000"/></svg>
<div style="left:1164.4px;top:751.25px;width:12.5px;height:12.5px;background:#fff;border:1px solid #444"></div>
<div style="left:1186px;top:748.25px;width:37px;height:18.799999999999955px;background:#fff;border:1px solid #8a9ab0"></div>
<span class="t" style="left:1201.026171875px;top:750.1px;font-size:12px;line-height:15px;color:#000;">0</span>
<div style="left:1209px;top:749.25px;width:13px;height:16.799999999999955px;background:#f0f0f0;border-left:1px solid #d0d0d0"></div>
<div style="left:1209px;top:757.15px;width:13px;height:1px;background:#d8d8d8"></div>
<svg class="a" style="left:1212px;top:751.15px" width="8" height="13" viewBox="0 0 8 13"><path d="M1 4.4 L3.5 1.4 L6 4.4Z M1 8.6 L3.5 11.6 L6 8.6Z" fill="#000"/></svg>
<div style="left:1226px;top:748.25px;width:36px;height:18.799999999999955px;background:#f0f0f0;border:1px solid #c4ccd8"></div>
<span class="t" style="left:1240.026171875px;top:750.1px;font-size:12px;line-height:15px;color:#6d6d6d;">0</span>
<svg class="a" style="left:1251px;top:751.15px" width="8" height="13" viewBox="0 0 8 13"><path d="M1 4.4 L3.5 1.4 L6 4.4Z M1 8.6 L3.5 11.6 L6 8.6Z" fill="#9a9a9a"/></svg>
<div style="left:1265px;top:748.25px;width:38px;height:18.799999999999955px;background:#fff;border:1px solid #8a9ab0"></div>
<span class="t" style="left:1271.018359375px;top:750.1px;font-size:12px;line-height:15px;color:#000;">0,0</span>
<div style="left:1289px;top:749.25px;width:13px;height:16.799999999999955px;background:#f0f0f0;border-left:1px solid #d0d0d0"></div>
<div style="left:1289px;top:757.15px;width:13px;height:1px;background:#d8d8d8"></div>
<svg class="a" style="left:1292px;top:751.15px" width="8" height="13" viewBox="0 0 8 13"><path d="M1 4.4 L3.5 1.4 L6 4.4Z M1 8.6 L3.5 11.6 L6 8.6Z" fill="#000"/></svg>
<span class="t" style="left:737.8px;top:771.0px;font-size:12px;line-height:15px;letter-spacing:-0.174px;">10</span>
<div style="left:751.4px;top:772.2px;width:12.5px;height:12.5px;background:#fff;border:1px solid #444"></div>
<div class="fl" style="left:766.3px;top:769.2px;width:75.4px;height:18.799999999999955px;"></div>
<div style="left:843.2px;top:772.5px;width:10px;height:13px;background:#00e5ff;border:1px solid #000"></div>
<svg class="a" style="left:843.2px;top:772.5px" width="10" height="13" viewBox="0 0 10 13"><path d="M2 3 H8 L5 11Z" fill="#000"/></svg>
<div style="left:854.3px;top:772.5px;width:10px;height:13px;background:#ff2040;border:1px solid #000"></div>
<svg class="a" style="left:854.3px;top:772.5px" width="10" height="13" viewBox="0 0 10 13"><path d="M2 11 H8 L5 3Z" fill="#000"/></svg>
<div style="left:865.6px;top:769.2px;width:36.69999999999993px;height:18.799999999999955px;background:#fff;border:1px solid #8a9ab0"></div>
<span class="t" style="left:880.326171875px;top:771.1px;font-size:12px;line-height:15px;color:#000;">0</span>
<div style="left:888.3px;top:770.2px;width:13px;height:16.799999999999955px;background:#f0f0f0;border-left:1px solid #d0d0d0"></div>
<div style="left:888.3px;top:778.1px;width:13px;height:1px;background:#d8d8d8"></div>
<svg class="a" style="left:891.3px;top:772.1px" width="8" height="13" viewBox="0 0 8 13"><path d="M1 4.4 L3.5 1.4 L6 4.4Z M1 8.6 L3.5 11.6 L6 8.6Z" fill="#000"/></svg>
<div class="tl" style="left:905px;top:769.2px;width:30px;height:18.799999999999955px;"></div>
<span class="t" style="left:916.6630859375px;top:771.0px;font-size:12px;line-height:15px;color:#fff;">0</span>
<div style="left:937.2px;top:769.2px;width:57.19999999999993px;height:18.799999999999955px;background:#fff;border:1px solid #8a9ab0"></div>
<span class="t" style="left:955.74453125px;top:771.1px;font-size:12px;line-height:15px;color:#000;">0,00</span>
<div style="left:980.4px;top:770.2px;width:13px;height:16.799999999999955px;background:#f0f0f0;border-left:1px solid #d0d0d0"></div>
<div style="left:980.4px;top:778.1px;width:13px;height:1px;background:#d8d8d8"></div>
<svg class="a" style="left:983.4px;top:772.1px" width="8" height="13" viewBox="0 0 8 13"><path d="M1 4.4 L3.5 1.4 L6 4.4Z M1 8.6 L3.5 11.6 L6 8.6Z" fill="#000"/></svg>
<div class="fl" style="left:996.2px;top:769.2px;width:63.799999999999955px;height:18.799999999999955px;"></div>
<svg class="a" style="left:1046px;top:775.6px" width="10" height="6" viewBox="0 0 10 6"><path d="M1 1 L5 5 L9 1" stroke="#333" stroke-width="1.1" fill="none"/></svg>
<div class="fl" style="left:1061.6px;top:769.2px;width:43.80000000000018px;height:18.799999999999955px;"></div>
<svg class="a" style="left:1091.4px;top:775.6px" width="10" height="6" viewBox="0 0 10 6"><path d="M1 1 L5 5 L9 1" stroke="#333" stroke-width="1.1" fill="none"/></svg>
<div style="left:1110px;top:769.2px;width:39.5px;height:18.799999999999955px;background:#fff;border:1px solid #8a9ab0"></div>
<span class="t" style="left:1117.518359375px;top:771.1px;font-size:12px;line-height:15px;color:#000;">3,0</span>
<div style="left:1135.5px;top:770.2px;width:13px;height:16.799999999999955px;background:#f0f0f0;border-left:1px solid #d0d0d0"></div>
<div style="left:1135.5px;top:778.1px;width:13px;height:1px;background:#d8d8d8"></div>
<svg class="a" style="left:1138.5px;top:772.1px" width="8" height="13" viewBox="0 0 8 13"><path d="M1 4.4 L3.5 1.4 L6 4.4Z M1 8.6 L3.5 11.6 L6 8.6Z" fill="#000"/></svg>
<div style="left:1164.4px;top:772.2px;width:12.5px;height:12.5px;background:#fff;border:1px solid #444"></div>
<div style="left:1186px;top:769.2px;width:37px;height:18.799999999999955px;background:#fff;border:1px solid #8a9ab0"></div>
<span class="t" style="left:1201.026171875px;top:771.1px;font-size:12px;line-height:15px;color:#000;">0</span>
<div style="left:1209px;top:770.2px;width:13px;height:16.799999999999955px;background:#f0f0f0;border-left:1px solid #d0d0d0"></div>
<div style="left:1209px;top:778.1px;width:13px;height:1px;background:#d8d8d8"></div>
<svg class="a" style="left:1212px;top:772.1px" width="8" height="13" viewBox="0 0 8 13"><path d="M1 4.4 L3.5 1.4 L6 4.4Z M1 8.6 L3.5 11.6 L6 8.6Z" fill="#000"/></svg>
<div style="left:1226px;top:769.2px;width:36px;height:18.799999999999955px;background:#f0f0f0;border:1px solid #c4ccd8"></div>
<span class="t" style="left:1240.026171875px;top:771.1px;font-size:12px;line-height:15px;color:#6d6d6d;">0</span>
<svg class="a" style="left:1251px;top:772.1px" width="8" height="13" viewBox="0 0 8 13"><path d="M1 4.4 L3.5 1.4 L6 4.4Z M1 8.6 L3.5 11.6 L6 8.6Z" fill="#9a9a9a"/></svg>
<div style="left:1265px;top:769.2px;width:38px;height:18.799999999999955px;background:#fff;border:1px solid #8a9ab0"></div>
<span class="t" style="left:1271.018359375px;top:771.1px;font-size:12px;line-height:15px;color:#000;">0,0</span>
<div style="left:1289px;top:770.2px;width:13px;height:16.799999999999955px;background:#f0f0f0;border-left:1px solid #d0d0d0"></div>
<div style="left:1289px;top:778.1px;width:13px;height:1px;background:#d8d8d8"></div>
<svg class="a" style="left:1292px;top:772.1px" width="8" height="13" viewBox="0 0 8 13"><path d="M1 4.4 L3.5 1.4 L6 4.4Z M1 8.6 L3.5 11.6 L6 8.6Z" fill="#000"/></svg>
<div style="left:1064.5px;top:586px;width:36.5px;height:12px;background:#fff;border:1px solid #c8d0dc"></div>
<svg class="a" style="left:1075.75px;top:587.5px" width="14" height="9" viewBox="0 0 14 9"><path d="M0 .5 H14 L7 8.5Z" fill="#111"/></svg>
<div style="left:1113.7px;top:586px;width:32.5px;height:12px;background:#fff;border:1px solid #c8d0dc"></div>
<svg class="a" style="left:1122.95px;top:587.5px" width="14" height="9" viewBox="0 0 14 9"><path d="M0 .5 H14 L7 8.5Z" fill="#111"/></svg>
<div style="left:1156.7px;top:586px;width:28.299999999999955px;height:12px;background:#fff;border:1px solid #c8d0dc"></div>
<svg class="a" style="left:1163.85px;top:587.5px" width="14" height="9" viewBox="0 0 14 9"><path d="M0 .5 H14 L7 8.5Z" fill="#111"/></svg>
<div style="left:1188.3px;top:586px;width:32.700000000000045px;height:12px;background:#fff;border:1px solid #c8d0dc"></div>
<svg class="a" style="left:1197.65px;top:587.5px" width="14" height="9" viewBox="0 0 14 9"><path d="M0 .5 H14 L7 8.5Z" fill="#111"/></svg>
<div style="left:1267px;top:586px;width:32px;height:12px;background:#fff;border:1px solid #c8d0dc"></div>
<svg class="a" style="left:1276.0px;top:587.5px" width="14" height="9" viewBox="0 0 14 9"><path d="M0 .5 H14 L7 8.5Z" fill="#111"/></svg>
<div style="left:1303px;top:167px;width:4px;height:642px;background:#f4f4f4"></div>
<div style="left:1307px;top:136px;width:1px;height:674px;background:#0063b1"></div>
<div style="left:715px;top:792px;width:588px;height:12px;background:#fbfbfb"></div>
<div style="left:346px;top:804px;width:957px;height:1px;background:#a8a8a8"></div>
<div style="left:346px;top:805px;width:961px;height:4px;background:#fbfbfb"></div>
<div style="left:715px;top:796px;width:588px;height:1px;background:#e4e4e4"></div>
<div style="left:715px;top:800px;width:588px;height:1px;background:#e4e4e4"></div>
</body></html>
